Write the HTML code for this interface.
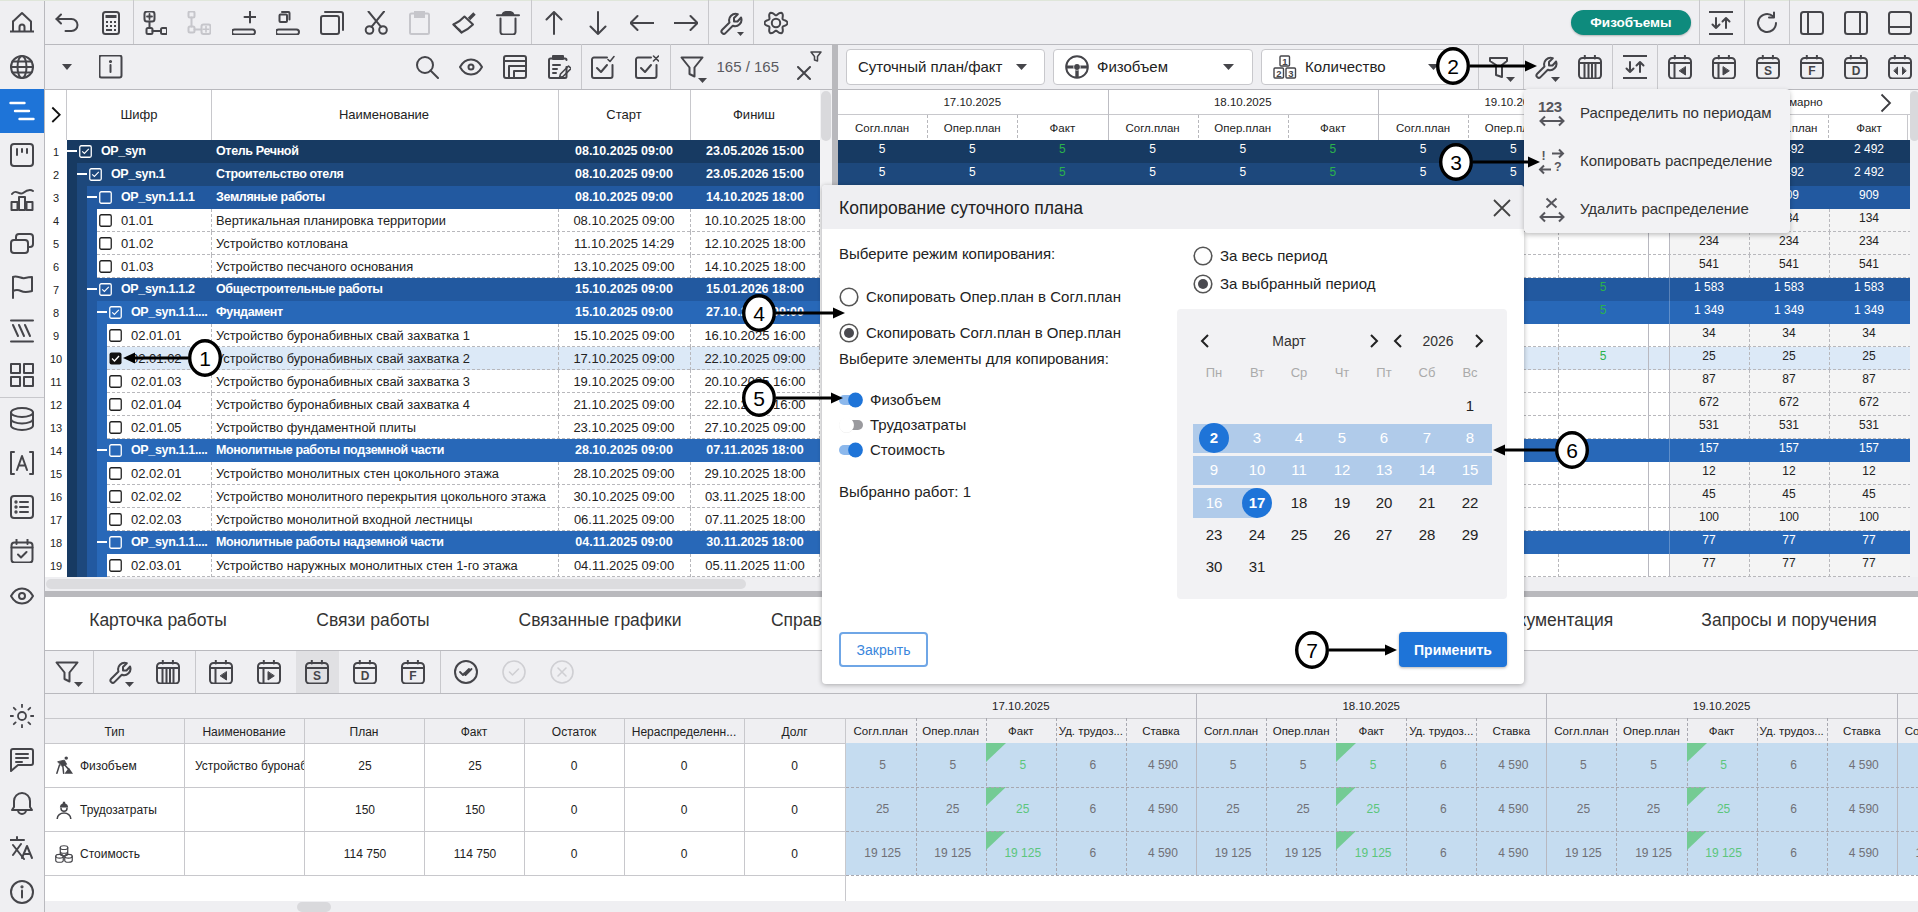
<!DOCTYPE html><html><head><meta charset="utf-8"><style>html,body{margin:0;padding:0;}body{width:1918px;height:912px;overflow:hidden;position:relative;background:#efeff2;font-family:"Liberation Sans", sans-serif;}</style></head><body>
<div style="position:absolute;left:0px;top:0px;width:44px;height:912px;background:#efeff2"></div>
<div style="position:absolute;left:44px;top:0px;width:1px;height:912px;background:#b9b9be"></div>
<div style="position:absolute;left:0px;top:89px;width:44px;height:44px;background:#1e74d8"></div>
<div style="position:absolute;left:0px;top:397px;width:44px;height:1px;background:#c8c8cc"></div>
<div style="position:absolute;left:45px;top:44px;width:1873px;height:1px;background:#b9b9be"></div>
<div style="position:absolute;left:0px;top:0px;width:1918px;height:1px;background:#dfe6da"></div>
<div style="position:absolute;left:45px;top:89px;width:787px;height:1px;background:#b9b9be"></div>
<div style="position:absolute;left:45px;top:90px;width:775px;height:50px;background:#fff"></div>
<div style="position:absolute;left:66px;top:90px;width:1px;height:487px;background:#c8c8cc"></div>
<div style="position:absolute;left:211px;top:90px;width:1px;height:50px;background:#c8c8cc"></div>
<div style="position:absolute;left:558px;top:90px;width:1px;height:50px;background:#c8c8cc"></div>
<div style="position:absolute;left:690px;top:90px;width:1px;height:50px;background:#c8c8cc"></div>
<svg style="position:absolute;left:50px;top:106px;" width="12" height="18" viewBox="0 0 12 18"><path d="M2.3 1.5L9.7 8.8L2.3 16" stroke="#111" stroke-width="1.8" fill="none"/></svg>
<div style="position:absolute;left:-11.0px;top:102px;width:300px;height:26px;line-height:26px;text-align:center;font-size:13px;color:#222;font-weight:normal;white-space:nowrap;">Шифр</div>
<div style="position:absolute;left:234.0px;top:102px;width:300px;height:26px;line-height:26px;text-align:center;font-size:13px;color:#222;font-weight:normal;white-space:nowrap;">Наименование</div>
<div style="position:absolute;left:474.0px;top:102px;width:300px;height:26px;line-height:26px;text-align:center;font-size:13px;color:#222;font-weight:normal;white-space:nowrap;">Старт</div>
<div style="position:absolute;left:604.0px;top:102px;width:300px;height:26px;line-height:26px;text-align:center;font-size:13px;color:#222;font-weight:normal;white-space:nowrap;">Финиш</div>
<div style="position:absolute;left:820px;top:90px;width:12px;height:487px;background:#f2f2f4"></div>
<div style="position:absolute;left:821px;top:91px;width:10px;height:50px;background:#d9d9dc;border-radius:5px"></div>
<div style="position:absolute;left:832px;top:44px;width:6px;height:547px;background:#b9b9bd"></div>
<div style="position:absolute;left:838px;top:89px;width:1080px;height:1px;background:#b9b9be"></div>
<div style="position:absolute;left:45px;top:140px;width:22px;height:437px;background:#fff"></div>
<div style="position:absolute;left:67px;top:140px;width:753px;height:437px;background:#fff"></div>
<div style="position:absolute;left:-94.0px;top:141px;width:300px;height:22px;line-height:22px;text-align:center;font-size:11px;color:#222;font-weight:normal;white-space:nowrap;">1</div>
<div style="position:absolute;left:67px;top:140px;width:753px;height:23px;background:#173a62"></div>
<div style="position:absolute;left:-94.0px;top:164px;width:300px;height:22px;line-height:22px;text-align:center;font-size:11px;color:#222;font-weight:normal;white-space:nowrap;">2</div>
<div style="position:absolute;left:67px;top:163px;width:10px;height:23px;background:#173a62"></div>
<div style="position:absolute;left:77px;top:163px;width:743px;height:23px;background:#1d487c"></div>
<div style="position:absolute;left:-94.0px;top:187px;width:300px;height:22px;line-height:22px;text-align:center;font-size:11px;color:#222;font-weight:normal;white-space:nowrap;">3</div>
<div style="position:absolute;left:67px;top:186px;width:10px;height:23px;background:#173a62"></div>
<div style="position:absolute;left:77px;top:186px;width:10px;height:23px;background:#1d487c"></div>
<div style="position:absolute;left:87px;top:186px;width:733px;height:23px;background:#2259a0"></div>
<div style="position:absolute;left:-94.0px;top:210px;width:300px;height:22px;line-height:22px;text-align:center;font-size:11px;color:#222;font-weight:normal;white-space:nowrap;">4</div>
<div style="position:absolute;left:67px;top:209px;width:10px;height:23px;background:#173a62"></div>
<div style="position:absolute;left:77px;top:209px;width:10px;height:23px;background:#1d487c"></div>
<div style="position:absolute;left:87px;top:209px;width:10px;height:23px;background:#2259a0"></div>
<div style="position:absolute;left:97px;top:209px;width:723px;height:23px;background:#fff"></div>
<div style="position:absolute;left:-94.0px;top:233px;width:300px;height:22px;line-height:22px;text-align:center;font-size:11px;color:#222;font-weight:normal;white-space:nowrap;">5</div>
<div style="position:absolute;left:67px;top:232px;width:10px;height:23px;background:#173a62"></div>
<div style="position:absolute;left:77px;top:232px;width:10px;height:23px;background:#1d487c"></div>
<div style="position:absolute;left:87px;top:232px;width:10px;height:23px;background:#2259a0"></div>
<div style="position:absolute;left:97px;top:232px;width:723px;height:23px;background:#fff"></div>
<div style="position:absolute;left:-94.0px;top:256px;width:300px;height:22px;line-height:22px;text-align:center;font-size:11px;color:#222;font-weight:normal;white-space:nowrap;">6</div>
<div style="position:absolute;left:67px;top:255px;width:10px;height:23px;background:#173a62"></div>
<div style="position:absolute;left:77px;top:255px;width:10px;height:23px;background:#1d487c"></div>
<div style="position:absolute;left:87px;top:255px;width:10px;height:23px;background:#2259a0"></div>
<div style="position:absolute;left:97px;top:255px;width:723px;height:23px;background:#fff"></div>
<div style="position:absolute;left:-94.0px;top:279px;width:300px;height:22px;line-height:22px;text-align:center;font-size:11px;color:#222;font-weight:normal;white-space:nowrap;">7</div>
<div style="position:absolute;left:67px;top:278px;width:10px;height:23px;background:#173a62"></div>
<div style="position:absolute;left:77px;top:278px;width:10px;height:23px;background:#1d487c"></div>
<div style="position:absolute;left:87px;top:278px;width:733px;height:23px;background:#2259a0"></div>
<div style="position:absolute;left:-94.0px;top:302px;width:300px;height:22px;line-height:22px;text-align:center;font-size:11px;color:#222;font-weight:normal;white-space:nowrap;">8</div>
<div style="position:absolute;left:67px;top:301px;width:10px;height:23px;background:#173a62"></div>
<div style="position:absolute;left:77px;top:301px;width:10px;height:23px;background:#1d487c"></div>
<div style="position:absolute;left:87px;top:301px;width:10px;height:23px;background:#2259a0"></div>
<div style="position:absolute;left:97px;top:301px;width:723px;height:23px;background:#2868b8"></div>
<div style="position:absolute;left:-94.0px;top:325px;width:300px;height:22px;line-height:22px;text-align:center;font-size:11px;color:#222;font-weight:normal;white-space:nowrap;">9</div>
<div style="position:absolute;left:67px;top:324px;width:10px;height:23px;background:#173a62"></div>
<div style="position:absolute;left:77px;top:324px;width:10px;height:23px;background:#1d487c"></div>
<div style="position:absolute;left:87px;top:324px;width:10px;height:23px;background:#2259a0"></div>
<div style="position:absolute;left:97px;top:324px;width:10px;height:23px;background:#2868b8"></div>
<div style="position:absolute;left:107px;top:324px;width:713px;height:23px;background:#fff"></div>
<div style="position:absolute;left:-94.0px;top:348px;width:300px;height:22px;line-height:22px;text-align:center;font-size:11px;color:#222;font-weight:normal;white-space:nowrap;">10</div>
<div style="position:absolute;left:67px;top:347px;width:10px;height:23px;background:#173a62"></div>
<div style="position:absolute;left:77px;top:347px;width:10px;height:23px;background:#1d487c"></div>
<div style="position:absolute;left:87px;top:347px;width:10px;height:23px;background:#2259a0"></div>
<div style="position:absolute;left:97px;top:347px;width:10px;height:23px;background:#2868b8"></div>
<div style="position:absolute;left:107px;top:347px;width:713px;height:23px;background:#dce9f7"></div>
<div style="position:absolute;left:-94.0px;top:371px;width:300px;height:22px;line-height:22px;text-align:center;font-size:11px;color:#222;font-weight:normal;white-space:nowrap;">11</div>
<div style="position:absolute;left:67px;top:370px;width:10px;height:23px;background:#173a62"></div>
<div style="position:absolute;left:77px;top:370px;width:10px;height:23px;background:#1d487c"></div>
<div style="position:absolute;left:87px;top:370px;width:10px;height:23px;background:#2259a0"></div>
<div style="position:absolute;left:97px;top:370px;width:10px;height:23px;background:#2868b8"></div>
<div style="position:absolute;left:107px;top:370px;width:713px;height:23px;background:#fff"></div>
<div style="position:absolute;left:-94.0px;top:394px;width:300px;height:22px;line-height:22px;text-align:center;font-size:11px;color:#222;font-weight:normal;white-space:nowrap;">12</div>
<div style="position:absolute;left:67px;top:393px;width:10px;height:23px;background:#173a62"></div>
<div style="position:absolute;left:77px;top:393px;width:10px;height:23px;background:#1d487c"></div>
<div style="position:absolute;left:87px;top:393px;width:10px;height:23px;background:#2259a0"></div>
<div style="position:absolute;left:97px;top:393px;width:10px;height:23px;background:#2868b8"></div>
<div style="position:absolute;left:107px;top:393px;width:713px;height:23px;background:#fff"></div>
<div style="position:absolute;left:-94.0px;top:417px;width:300px;height:22px;line-height:22px;text-align:center;font-size:11px;color:#222;font-weight:normal;white-space:nowrap;">13</div>
<div style="position:absolute;left:67px;top:416px;width:10px;height:23px;background:#173a62"></div>
<div style="position:absolute;left:77px;top:416px;width:10px;height:23px;background:#1d487c"></div>
<div style="position:absolute;left:87px;top:416px;width:10px;height:23px;background:#2259a0"></div>
<div style="position:absolute;left:97px;top:416px;width:10px;height:23px;background:#2868b8"></div>
<div style="position:absolute;left:107px;top:416px;width:713px;height:23px;background:#fff"></div>
<div style="position:absolute;left:-94.0px;top:440px;width:300px;height:22px;line-height:22px;text-align:center;font-size:11px;color:#222;font-weight:normal;white-space:nowrap;">14</div>
<div style="position:absolute;left:67px;top:439px;width:10px;height:23px;background:#173a62"></div>
<div style="position:absolute;left:77px;top:439px;width:10px;height:23px;background:#1d487c"></div>
<div style="position:absolute;left:87px;top:439px;width:10px;height:23px;background:#2259a0"></div>
<div style="position:absolute;left:97px;top:439px;width:723px;height:23px;background:#2868b8"></div>
<div style="position:absolute;left:-94.0px;top:463px;width:300px;height:22px;line-height:22px;text-align:center;font-size:11px;color:#222;font-weight:normal;white-space:nowrap;">15</div>
<div style="position:absolute;left:67px;top:462px;width:10px;height:23px;background:#173a62"></div>
<div style="position:absolute;left:77px;top:462px;width:10px;height:23px;background:#1d487c"></div>
<div style="position:absolute;left:87px;top:462px;width:10px;height:23px;background:#2259a0"></div>
<div style="position:absolute;left:97px;top:462px;width:10px;height:23px;background:#2868b8"></div>
<div style="position:absolute;left:107px;top:462px;width:713px;height:23px;background:#fff"></div>
<div style="position:absolute;left:-94.0px;top:486px;width:300px;height:22px;line-height:22px;text-align:center;font-size:11px;color:#222;font-weight:normal;white-space:nowrap;">16</div>
<div style="position:absolute;left:67px;top:485px;width:10px;height:23px;background:#173a62"></div>
<div style="position:absolute;left:77px;top:485px;width:10px;height:23px;background:#1d487c"></div>
<div style="position:absolute;left:87px;top:485px;width:10px;height:23px;background:#2259a0"></div>
<div style="position:absolute;left:97px;top:485px;width:10px;height:23px;background:#2868b8"></div>
<div style="position:absolute;left:107px;top:485px;width:713px;height:23px;background:#fff"></div>
<div style="position:absolute;left:-94.0px;top:509px;width:300px;height:22px;line-height:22px;text-align:center;font-size:11px;color:#222;font-weight:normal;white-space:nowrap;">17</div>
<div style="position:absolute;left:67px;top:508px;width:10px;height:23px;background:#173a62"></div>
<div style="position:absolute;left:77px;top:508px;width:10px;height:23px;background:#1d487c"></div>
<div style="position:absolute;left:87px;top:508px;width:10px;height:23px;background:#2259a0"></div>
<div style="position:absolute;left:97px;top:508px;width:10px;height:23px;background:#2868b8"></div>
<div style="position:absolute;left:107px;top:508px;width:713px;height:23px;background:#fff"></div>
<div style="position:absolute;left:-94.0px;top:532px;width:300px;height:22px;line-height:22px;text-align:center;font-size:11px;color:#222;font-weight:normal;white-space:nowrap;">18</div>
<div style="position:absolute;left:67px;top:531px;width:10px;height:23px;background:#173a62"></div>
<div style="position:absolute;left:77px;top:531px;width:10px;height:23px;background:#1d487c"></div>
<div style="position:absolute;left:87px;top:531px;width:10px;height:23px;background:#2259a0"></div>
<div style="position:absolute;left:97px;top:531px;width:723px;height:23px;background:#2868b8"></div>
<div style="position:absolute;left:-94.0px;top:555px;width:300px;height:22px;line-height:22px;text-align:center;font-size:11px;color:#222;font-weight:normal;white-space:nowrap;">19</div>
<div style="position:absolute;left:67px;top:554px;width:10px;height:23px;background:#173a62"></div>
<div style="position:absolute;left:77px;top:554px;width:10px;height:23px;background:#1d487c"></div>
<div style="position:absolute;left:87px;top:554px;width:10px;height:23px;background:#2259a0"></div>
<div style="position:absolute;left:97px;top:554px;width:10px;height:23px;background:#2868b8"></div>
<div style="position:absolute;left:107px;top:554px;width:713px;height:23px;background:#fff"></div>
<div style="position:absolute;left:67px;top:150px;width:10px;height:2px;background:#fff"></div>
<svg style="position:absolute;left:79px;top:145px;" width="13" height="13" viewBox="0 0 13 13"><rect x="0.75" y="0.75" width="11.5" height="11.5" rx="1.5" fill="none" stroke="#fff" stroke-width="1.3"/><path d="M3.2 6.3l2.2 2.2 4.4-4.6" stroke="#fff" stroke-width="1.1" fill="none"/></svg>
<div style="position:absolute;left:101px;top:139.0px;height:25.0px;line-height:25.0px;font-size:12.5px;color:#fff;font-weight:bold;white-space:nowrap;letter-spacing:-0.35px">OP_syn</div>
<div style="position:absolute;left:216px;top:139.0px;height:25.0px;line-height:25.0px;font-size:12.5px;color:#fff;font-weight:bold;white-space:nowrap;letter-spacing:-0.35px">Отель Речной</div>
<div style="position:absolute;left:474.0px;top:139.0px;width:300px;height:25.0px;line-height:25.0px;text-align:center;font-size:12.5px;color:#fff;font-weight:bold;white-space:nowrap;letter-spacing:0px">08.10.2025 09:00</div>
<div style="position:absolute;left:605.0px;top:139.0px;width:300px;height:25.0px;line-height:25.0px;text-align:center;font-size:12.5px;color:#fff;font-weight:bold;white-space:nowrap;letter-spacing:0px">23.05.2026 15:00</div>
<div style="position:absolute;left:77px;top:173px;width:10px;height:2px;background:#fff"></div>
<svg style="position:absolute;left:89px;top:168px;" width="13" height="13" viewBox="0 0 13 13"><rect x="0.75" y="0.75" width="11.5" height="11.5" rx="1.5" fill="none" stroke="#fff" stroke-width="1.3"/><path d="M3.2 6.3l2.2 2.2 4.4-4.6" stroke="#fff" stroke-width="1.1" fill="none"/></svg>
<div style="position:absolute;left:111px;top:162.0px;height:25.0px;line-height:25.0px;font-size:12.5px;color:#fff;font-weight:bold;white-space:nowrap;letter-spacing:-0.35px">OP_syn.1</div>
<div style="position:absolute;left:216px;top:162.0px;height:25.0px;line-height:25.0px;font-size:12.5px;color:#fff;font-weight:bold;white-space:nowrap;letter-spacing:-0.35px">Строительство отеля</div>
<div style="position:absolute;left:474.0px;top:162.0px;width:300px;height:25.0px;line-height:25.0px;text-align:center;font-size:12.5px;color:#fff;font-weight:bold;white-space:nowrap;letter-spacing:0px">08.10.2025 09:00</div>
<div style="position:absolute;left:605.0px;top:162.0px;width:300px;height:25.0px;line-height:25.0px;text-align:center;font-size:12.5px;color:#fff;font-weight:bold;white-space:nowrap;letter-spacing:0px">23.05.2026 15:00</div>
<div style="position:absolute;left:87px;top:196px;width:10px;height:2px;background:#fff"></div>
<svg style="position:absolute;left:99px;top:191px;" width="13" height="13" viewBox="0 0 13 13"><rect x="0.75" y="0.75" width="11.5" height="11.5" rx="1.5" fill="none" stroke="#fff" stroke-width="1.3"/></svg>
<div style="position:absolute;left:121px;top:185.0px;height:25.0px;line-height:25.0px;font-size:12.5px;color:#fff;font-weight:bold;white-space:nowrap;letter-spacing:-0.35px">OP_syn.1.1.1</div>
<div style="position:absolute;left:216px;top:185.0px;height:25.0px;line-height:25.0px;font-size:12.5px;color:#fff;font-weight:bold;white-space:nowrap;letter-spacing:-0.35px">Земляные работы</div>
<div style="position:absolute;left:474.0px;top:185.0px;width:300px;height:25.0px;line-height:25.0px;text-align:center;font-size:12.5px;color:#fff;font-weight:bold;white-space:nowrap;letter-spacing:0px">08.10.2025 09:00</div>
<div style="position:absolute;left:605.0px;top:185.0px;width:300px;height:25.0px;line-height:25.0px;text-align:center;font-size:12.5px;color:#fff;font-weight:bold;white-space:nowrap;letter-spacing:0px">14.10.2025 18:00</div>
<svg style="position:absolute;left:99px;top:214px;" width="13" height="13" viewBox="0 0 13 13"><rect x="0.75" y="0.75" width="11.5" height="11.5" rx="1.5" fill="none" stroke="#222" stroke-width="1.3"/></svg>
<div style="position:absolute;left:121px;top:207.5px;height:26px;line-height:26px;font-size:13px;color:#222;font-weight:normal;white-space:nowrap;">01.01</div>
<div style="position:absolute;left:216px;top:207.65px;height:25.7px;line-height:25.7px;font-size:12.85px;color:#222;font-weight:normal;white-space:nowrap;">Вертикальная планировка территории</div>
<div style="position:absolute;left:474.0px;top:207.5px;width:300px;height:26px;line-height:26px;text-align:center;font-size:13px;color:#222;font-weight:normal;white-space:nowrap;">08.10.2025 09:00</div>
<div style="position:absolute;left:605.0px;top:207.5px;width:300px;height:26px;line-height:26px;text-align:center;font-size:13px;color:#222;font-weight:normal;white-space:nowrap;">10.10.2025 18:00</div>
<div style="position:absolute;left:97px;top:231px;width:723px;height:1px;background:repeating-linear-gradient(90deg,#b8b8bc 0 3px,transparent 3px 5px)"></div>
<div style="position:absolute;left:211px;top:209px;width:1px;height:23px;background:repeating-linear-gradient(180deg,#b8b8bc 0 3px,transparent 3px 5px)"></div>
<div style="position:absolute;left:558px;top:209px;width:1px;height:23px;background:repeating-linear-gradient(180deg,#b8b8bc 0 3px,transparent 3px 5px)"></div>
<div style="position:absolute;left:690px;top:209px;width:1px;height:23px;background:repeating-linear-gradient(180deg,#b8b8bc 0 3px,transparent 3px 5px)"></div>
<div style="position:absolute;left:819px;top:209px;width:1px;height:23px;background:repeating-linear-gradient(180deg,#b8b8bc 0 3px,transparent 3px 5px)"></div>
<svg style="position:absolute;left:99px;top:237px;" width="13" height="13" viewBox="0 0 13 13"><rect x="0.75" y="0.75" width="11.5" height="11.5" rx="1.5" fill="none" stroke="#222" stroke-width="1.3"/></svg>
<div style="position:absolute;left:121px;top:230.5px;height:26px;line-height:26px;font-size:13px;color:#222;font-weight:normal;white-space:nowrap;">01.02</div>
<div style="position:absolute;left:216px;top:230.65px;height:25.7px;line-height:25.7px;font-size:12.85px;color:#222;font-weight:normal;white-space:nowrap;">Устройство котлована</div>
<div style="position:absolute;left:474.0px;top:230.5px;width:300px;height:26px;line-height:26px;text-align:center;font-size:13px;color:#222;font-weight:normal;white-space:nowrap;">11.10.2025 14:29</div>
<div style="position:absolute;left:605.0px;top:230.5px;width:300px;height:26px;line-height:26px;text-align:center;font-size:13px;color:#222;font-weight:normal;white-space:nowrap;">12.10.2025 18:00</div>
<div style="position:absolute;left:97px;top:254px;width:723px;height:1px;background:repeating-linear-gradient(90deg,#b8b8bc 0 3px,transparent 3px 5px)"></div>
<div style="position:absolute;left:211px;top:232px;width:1px;height:23px;background:repeating-linear-gradient(180deg,#b8b8bc 0 3px,transparent 3px 5px)"></div>
<div style="position:absolute;left:558px;top:232px;width:1px;height:23px;background:repeating-linear-gradient(180deg,#b8b8bc 0 3px,transparent 3px 5px)"></div>
<div style="position:absolute;left:690px;top:232px;width:1px;height:23px;background:repeating-linear-gradient(180deg,#b8b8bc 0 3px,transparent 3px 5px)"></div>
<div style="position:absolute;left:819px;top:232px;width:1px;height:23px;background:repeating-linear-gradient(180deg,#b8b8bc 0 3px,transparent 3px 5px)"></div>
<svg style="position:absolute;left:99px;top:260px;" width="13" height="13" viewBox="0 0 13 13"><rect x="0.75" y="0.75" width="11.5" height="11.5" rx="1.5" fill="none" stroke="#222" stroke-width="1.3"/></svg>
<div style="position:absolute;left:121px;top:253.5px;height:26px;line-height:26px;font-size:13px;color:#222;font-weight:normal;white-space:nowrap;">01.03</div>
<div style="position:absolute;left:216px;top:253.65px;height:25.7px;line-height:25.7px;font-size:12.85px;color:#222;font-weight:normal;white-space:nowrap;">Устройство песчаного основания</div>
<div style="position:absolute;left:474.0px;top:253.5px;width:300px;height:26px;line-height:26px;text-align:center;font-size:13px;color:#222;font-weight:normal;white-space:nowrap;">13.10.2025 09:00</div>
<div style="position:absolute;left:605.0px;top:253.5px;width:300px;height:26px;line-height:26px;text-align:center;font-size:13px;color:#222;font-weight:normal;white-space:nowrap;">14.10.2025 18:00</div>
<div style="position:absolute;left:97px;top:277px;width:723px;height:1px;background:repeating-linear-gradient(90deg,#b8b8bc 0 3px,transparent 3px 5px)"></div>
<div style="position:absolute;left:211px;top:255px;width:1px;height:23px;background:repeating-linear-gradient(180deg,#b8b8bc 0 3px,transparent 3px 5px)"></div>
<div style="position:absolute;left:558px;top:255px;width:1px;height:23px;background:repeating-linear-gradient(180deg,#b8b8bc 0 3px,transparent 3px 5px)"></div>
<div style="position:absolute;left:690px;top:255px;width:1px;height:23px;background:repeating-linear-gradient(180deg,#b8b8bc 0 3px,transparent 3px 5px)"></div>
<div style="position:absolute;left:819px;top:255px;width:1px;height:23px;background:repeating-linear-gradient(180deg,#b8b8bc 0 3px,transparent 3px 5px)"></div>
<div style="position:absolute;left:87px;top:288px;width:10px;height:2px;background:#fff"></div>
<svg style="position:absolute;left:99px;top:283px;" width="13" height="13" viewBox="0 0 13 13"><rect x="0.75" y="0.75" width="11.5" height="11.5" rx="1.5" fill="none" stroke="#fff" stroke-width="1.3"/><path d="M3.2 6.3l2.2 2.2 4.4-4.6" stroke="#fff" stroke-width="1.1" fill="none"/></svg>
<div style="position:absolute;left:121px;top:277.0px;height:25.0px;line-height:25.0px;font-size:12.5px;color:#fff;font-weight:bold;white-space:nowrap;letter-spacing:-0.35px">OP_syn.1.1.2</div>
<div style="position:absolute;left:216px;top:277.0px;height:25.0px;line-height:25.0px;font-size:12.5px;color:#fff;font-weight:bold;white-space:nowrap;letter-spacing:-0.35px">Общестроительные работы</div>
<div style="position:absolute;left:474.0px;top:277.0px;width:300px;height:25.0px;line-height:25.0px;text-align:center;font-size:12.5px;color:#fff;font-weight:bold;white-space:nowrap;letter-spacing:0px">15.10.2025 09:00</div>
<div style="position:absolute;left:605.0px;top:277.0px;width:300px;height:25.0px;line-height:25.0px;text-align:center;font-size:12.5px;color:#fff;font-weight:bold;white-space:nowrap;letter-spacing:0px">15.01.2026 18:00</div>
<div style="position:absolute;left:97px;top:311px;width:10px;height:2px;background:#fff"></div>
<svg style="position:absolute;left:109px;top:306px;" width="13" height="13" viewBox="0 0 13 13"><rect x="0.75" y="0.75" width="11.5" height="11.5" rx="1.5" fill="none" stroke="#fff" stroke-width="1.3"/><path d="M3.2 6.3l2.2 2.2 4.4-4.6" stroke="#fff" stroke-width="1.1" fill="none"/></svg>
<div style="position:absolute;left:131px;top:300.0px;height:25.0px;line-height:25.0px;font-size:12.5px;color:#fff;font-weight:bold;white-space:nowrap;letter-spacing:-0.35px">OP_syn.1.1....</div>
<div style="position:absolute;left:216px;top:300.0px;height:25.0px;line-height:25.0px;font-size:12.5px;color:#fff;font-weight:bold;white-space:nowrap;letter-spacing:-0.35px">Фундамент</div>
<div style="position:absolute;left:474.0px;top:300.0px;width:300px;height:25.0px;line-height:25.0px;text-align:center;font-size:12.5px;color:#fff;font-weight:bold;white-space:nowrap;letter-spacing:0px">15.10.2025 09:00</div>
<div style="position:absolute;left:605.0px;top:300.0px;width:300px;height:25.0px;line-height:25.0px;text-align:center;font-size:12.5px;color:#fff;font-weight:bold;white-space:nowrap;letter-spacing:0px">27.10.2025 09:00</div>
<svg style="position:absolute;left:109px;top:329px;" width="13" height="13" viewBox="0 0 13 13"><rect x="0.75" y="0.75" width="11.5" height="11.5" rx="1.5" fill="none" stroke="#222" stroke-width="1.3"/></svg>
<div style="position:absolute;left:131px;top:322.5px;height:26px;line-height:26px;font-size:13px;color:#222;font-weight:normal;white-space:nowrap;">02.01.01</div>
<div style="position:absolute;left:216px;top:322.65px;height:25.7px;line-height:25.7px;font-size:12.85px;color:#222;font-weight:normal;white-space:nowrap;">Устройство буронабивных свай захватка 1</div>
<div style="position:absolute;left:474.0px;top:322.5px;width:300px;height:26px;line-height:26px;text-align:center;font-size:13px;color:#222;font-weight:normal;white-space:nowrap;">15.10.2025 09:00</div>
<div style="position:absolute;left:605.0px;top:322.5px;width:300px;height:26px;line-height:26px;text-align:center;font-size:13px;color:#222;font-weight:normal;white-space:nowrap;">16.10.2025 16:00</div>
<div style="position:absolute;left:107px;top:346px;width:713px;height:1px;background:repeating-linear-gradient(90deg,#b8b8bc 0 3px,transparent 3px 5px)"></div>
<div style="position:absolute;left:211px;top:324px;width:1px;height:23px;background:repeating-linear-gradient(180deg,#b8b8bc 0 3px,transparent 3px 5px)"></div>
<div style="position:absolute;left:558px;top:324px;width:1px;height:23px;background:repeating-linear-gradient(180deg,#b8b8bc 0 3px,transparent 3px 5px)"></div>
<div style="position:absolute;left:690px;top:324px;width:1px;height:23px;background:repeating-linear-gradient(180deg,#b8b8bc 0 3px,transparent 3px 5px)"></div>
<div style="position:absolute;left:819px;top:324px;width:1px;height:23px;background:repeating-linear-gradient(180deg,#b8b8bc 0 3px,transparent 3px 5px)"></div>
<svg style="position:absolute;left:109px;top:352px;" width="13" height="13" viewBox="0 0 13 13"><rect x="0.5" y="0.5" width="12" height="12" rx="2" fill="#111"/><path d="M3 6.5l2.5 2.5 4.5-5" stroke="#fff" stroke-width="1.3" fill="none"/></svg>
<div style="position:absolute;left:131px;top:345.5px;height:26px;line-height:26px;font-size:13px;color:#222;font-weight:normal;white-space:nowrap;">02.01.02</div>
<div style="position:absolute;left:216px;top:345.65px;height:25.7px;line-height:25.7px;font-size:12.85px;color:#222;font-weight:normal;white-space:nowrap;">Устройство буронабивных свай захватка 2</div>
<div style="position:absolute;left:474.0px;top:345.5px;width:300px;height:26px;line-height:26px;text-align:center;font-size:13px;color:#222;font-weight:normal;white-space:nowrap;">17.10.2025 09:00</div>
<div style="position:absolute;left:605.0px;top:345.5px;width:300px;height:26px;line-height:26px;text-align:center;font-size:13px;color:#222;font-weight:normal;white-space:nowrap;">22.10.2025 09:00</div>
<div style="position:absolute;left:107px;top:369px;width:713px;height:1px;background:repeating-linear-gradient(90deg,#b8b8bc 0 3px,transparent 3px 5px)"></div>
<div style="position:absolute;left:211px;top:347px;width:1px;height:23px;background:repeating-linear-gradient(180deg,#b8b8bc 0 3px,transparent 3px 5px)"></div>
<div style="position:absolute;left:558px;top:347px;width:1px;height:23px;background:repeating-linear-gradient(180deg,#b8b8bc 0 3px,transparent 3px 5px)"></div>
<div style="position:absolute;left:690px;top:347px;width:1px;height:23px;background:repeating-linear-gradient(180deg,#b8b8bc 0 3px,transparent 3px 5px)"></div>
<div style="position:absolute;left:819px;top:347px;width:1px;height:23px;background:repeating-linear-gradient(180deg,#b8b8bc 0 3px,transparent 3px 5px)"></div>
<svg style="position:absolute;left:109px;top:375px;" width="13" height="13" viewBox="0 0 13 13"><rect x="0.75" y="0.75" width="11.5" height="11.5" rx="1.5" fill="none" stroke="#222" stroke-width="1.3"/></svg>
<div style="position:absolute;left:131px;top:368.5px;height:26px;line-height:26px;font-size:13px;color:#222;font-weight:normal;white-space:nowrap;">02.01.03</div>
<div style="position:absolute;left:216px;top:368.65px;height:25.7px;line-height:25.7px;font-size:12.85px;color:#222;font-weight:normal;white-space:nowrap;">Устройство буронабивных свай захватка 3</div>
<div style="position:absolute;left:474.0px;top:368.5px;width:300px;height:26px;line-height:26px;text-align:center;font-size:13px;color:#222;font-weight:normal;white-space:nowrap;">19.10.2025 09:00</div>
<div style="position:absolute;left:605.0px;top:368.5px;width:300px;height:26px;line-height:26px;text-align:center;font-size:13px;color:#222;font-weight:normal;white-space:nowrap;">20.10.2025 16:00</div>
<div style="position:absolute;left:107px;top:392px;width:713px;height:1px;background:repeating-linear-gradient(90deg,#b8b8bc 0 3px,transparent 3px 5px)"></div>
<div style="position:absolute;left:211px;top:370px;width:1px;height:23px;background:repeating-linear-gradient(180deg,#b8b8bc 0 3px,transparent 3px 5px)"></div>
<div style="position:absolute;left:558px;top:370px;width:1px;height:23px;background:repeating-linear-gradient(180deg,#b8b8bc 0 3px,transparent 3px 5px)"></div>
<div style="position:absolute;left:690px;top:370px;width:1px;height:23px;background:repeating-linear-gradient(180deg,#b8b8bc 0 3px,transparent 3px 5px)"></div>
<div style="position:absolute;left:819px;top:370px;width:1px;height:23px;background:repeating-linear-gradient(180deg,#b8b8bc 0 3px,transparent 3px 5px)"></div>
<svg style="position:absolute;left:109px;top:398px;" width="13" height="13" viewBox="0 0 13 13"><rect x="0.75" y="0.75" width="11.5" height="11.5" rx="1.5" fill="none" stroke="#222" stroke-width="1.3"/></svg>
<div style="position:absolute;left:131px;top:391.5px;height:26px;line-height:26px;font-size:13px;color:#222;font-weight:normal;white-space:nowrap;">02.01.04</div>
<div style="position:absolute;left:216px;top:391.65px;height:25.7px;line-height:25.7px;font-size:12.85px;color:#222;font-weight:normal;white-space:nowrap;">Устройство буронабивных свай захватка 4</div>
<div style="position:absolute;left:474.0px;top:391.5px;width:300px;height:26px;line-height:26px;text-align:center;font-size:13px;color:#222;font-weight:normal;white-space:nowrap;">21.10.2025 09:00</div>
<div style="position:absolute;left:605.0px;top:391.5px;width:300px;height:26px;line-height:26px;text-align:center;font-size:13px;color:#222;font-weight:normal;white-space:nowrap;">22.10.2025 16:00</div>
<div style="position:absolute;left:107px;top:415px;width:713px;height:1px;background:repeating-linear-gradient(90deg,#b8b8bc 0 3px,transparent 3px 5px)"></div>
<div style="position:absolute;left:211px;top:393px;width:1px;height:23px;background:repeating-linear-gradient(180deg,#b8b8bc 0 3px,transparent 3px 5px)"></div>
<div style="position:absolute;left:558px;top:393px;width:1px;height:23px;background:repeating-linear-gradient(180deg,#b8b8bc 0 3px,transparent 3px 5px)"></div>
<div style="position:absolute;left:690px;top:393px;width:1px;height:23px;background:repeating-linear-gradient(180deg,#b8b8bc 0 3px,transparent 3px 5px)"></div>
<div style="position:absolute;left:819px;top:393px;width:1px;height:23px;background:repeating-linear-gradient(180deg,#b8b8bc 0 3px,transparent 3px 5px)"></div>
<svg style="position:absolute;left:109px;top:421px;" width="13" height="13" viewBox="0 0 13 13"><rect x="0.75" y="0.75" width="11.5" height="11.5" rx="1.5" fill="none" stroke="#222" stroke-width="1.3"/></svg>
<div style="position:absolute;left:131px;top:414.5px;height:26px;line-height:26px;font-size:13px;color:#222;font-weight:normal;white-space:nowrap;">02.01.05</div>
<div style="position:absolute;left:216px;top:414.65px;height:25.7px;line-height:25.7px;font-size:12.85px;color:#222;font-weight:normal;white-space:nowrap;">Устройство фундаментной плиты</div>
<div style="position:absolute;left:474.0px;top:414.5px;width:300px;height:26px;line-height:26px;text-align:center;font-size:13px;color:#222;font-weight:normal;white-space:nowrap;">23.10.2025 09:00</div>
<div style="position:absolute;left:605.0px;top:414.5px;width:300px;height:26px;line-height:26px;text-align:center;font-size:13px;color:#222;font-weight:normal;white-space:nowrap;">27.10.2025 09:00</div>
<div style="position:absolute;left:107px;top:438px;width:713px;height:1px;background:repeating-linear-gradient(90deg,#b8b8bc 0 3px,transparent 3px 5px)"></div>
<div style="position:absolute;left:211px;top:416px;width:1px;height:23px;background:repeating-linear-gradient(180deg,#b8b8bc 0 3px,transparent 3px 5px)"></div>
<div style="position:absolute;left:558px;top:416px;width:1px;height:23px;background:repeating-linear-gradient(180deg,#b8b8bc 0 3px,transparent 3px 5px)"></div>
<div style="position:absolute;left:690px;top:416px;width:1px;height:23px;background:repeating-linear-gradient(180deg,#b8b8bc 0 3px,transparent 3px 5px)"></div>
<div style="position:absolute;left:819px;top:416px;width:1px;height:23px;background:repeating-linear-gradient(180deg,#b8b8bc 0 3px,transparent 3px 5px)"></div>
<div style="position:absolute;left:97px;top:449px;width:10px;height:2px;background:#fff"></div>
<svg style="position:absolute;left:109px;top:444px;" width="13" height="13" viewBox="0 0 13 13"><rect x="0.75" y="0.75" width="11.5" height="11.5" rx="1.5" fill="none" stroke="#fff" stroke-width="1.3"/></svg>
<div style="position:absolute;left:131px;top:438.0px;height:25.0px;line-height:25.0px;font-size:12.5px;color:#fff;font-weight:bold;white-space:nowrap;letter-spacing:-0.35px">OP_syn.1.1....</div>
<div style="position:absolute;left:216px;top:438.0px;height:25.0px;line-height:25.0px;font-size:12.5px;color:#fff;font-weight:bold;white-space:nowrap;letter-spacing:-0.35px">Монолитные работы подземной части</div>
<div style="position:absolute;left:474.0px;top:438.0px;width:300px;height:25.0px;line-height:25.0px;text-align:center;font-size:12.5px;color:#fff;font-weight:bold;white-space:nowrap;letter-spacing:0px">28.10.2025 09:00</div>
<div style="position:absolute;left:605.0px;top:438.0px;width:300px;height:25.0px;line-height:25.0px;text-align:center;font-size:12.5px;color:#fff;font-weight:bold;white-space:nowrap;letter-spacing:0px">07.11.2025 18:00</div>
<svg style="position:absolute;left:109px;top:467px;" width="13" height="13" viewBox="0 0 13 13"><rect x="0.75" y="0.75" width="11.5" height="11.5" rx="1.5" fill="none" stroke="#222" stroke-width="1.3"/></svg>
<div style="position:absolute;left:131px;top:460.5px;height:26px;line-height:26px;font-size:13px;color:#222;font-weight:normal;white-space:nowrap;">02.02.01</div>
<div style="position:absolute;left:216px;top:460.65px;height:25.7px;line-height:25.7px;font-size:12.85px;color:#222;font-weight:normal;white-space:nowrap;">Устройство монолитных стен цокольного этажа</div>
<div style="position:absolute;left:474.0px;top:460.5px;width:300px;height:26px;line-height:26px;text-align:center;font-size:13px;color:#222;font-weight:normal;white-space:nowrap;">28.10.2025 09:00</div>
<div style="position:absolute;left:605.0px;top:460.5px;width:300px;height:26px;line-height:26px;text-align:center;font-size:13px;color:#222;font-weight:normal;white-space:nowrap;">29.10.2025 18:00</div>
<div style="position:absolute;left:107px;top:484px;width:713px;height:1px;background:repeating-linear-gradient(90deg,#b8b8bc 0 3px,transparent 3px 5px)"></div>
<div style="position:absolute;left:211px;top:462px;width:1px;height:23px;background:repeating-linear-gradient(180deg,#b8b8bc 0 3px,transparent 3px 5px)"></div>
<div style="position:absolute;left:558px;top:462px;width:1px;height:23px;background:repeating-linear-gradient(180deg,#b8b8bc 0 3px,transparent 3px 5px)"></div>
<div style="position:absolute;left:690px;top:462px;width:1px;height:23px;background:repeating-linear-gradient(180deg,#b8b8bc 0 3px,transparent 3px 5px)"></div>
<div style="position:absolute;left:819px;top:462px;width:1px;height:23px;background:repeating-linear-gradient(180deg,#b8b8bc 0 3px,transparent 3px 5px)"></div>
<svg style="position:absolute;left:109px;top:490px;" width="13" height="13" viewBox="0 0 13 13"><rect x="0.75" y="0.75" width="11.5" height="11.5" rx="1.5" fill="none" stroke="#222" stroke-width="1.3"/></svg>
<div style="position:absolute;left:131px;top:483.5px;height:26px;line-height:26px;font-size:13px;color:#222;font-weight:normal;white-space:nowrap;">02.02.02</div>
<div style="position:absolute;left:216px;top:483.65px;height:25.7px;line-height:25.7px;font-size:12.85px;color:#222;font-weight:normal;white-space:nowrap;">Устройство монолитного перекрытия цокольного этажа</div>
<div style="position:absolute;left:474.0px;top:483.5px;width:300px;height:26px;line-height:26px;text-align:center;font-size:13px;color:#222;font-weight:normal;white-space:nowrap;">30.10.2025 09:00</div>
<div style="position:absolute;left:605.0px;top:483.5px;width:300px;height:26px;line-height:26px;text-align:center;font-size:13px;color:#222;font-weight:normal;white-space:nowrap;">03.11.2025 18:00</div>
<div style="position:absolute;left:107px;top:507px;width:713px;height:1px;background:repeating-linear-gradient(90deg,#b8b8bc 0 3px,transparent 3px 5px)"></div>
<div style="position:absolute;left:211px;top:485px;width:1px;height:23px;background:repeating-linear-gradient(180deg,#b8b8bc 0 3px,transparent 3px 5px)"></div>
<div style="position:absolute;left:558px;top:485px;width:1px;height:23px;background:repeating-linear-gradient(180deg,#b8b8bc 0 3px,transparent 3px 5px)"></div>
<div style="position:absolute;left:690px;top:485px;width:1px;height:23px;background:repeating-linear-gradient(180deg,#b8b8bc 0 3px,transparent 3px 5px)"></div>
<div style="position:absolute;left:819px;top:485px;width:1px;height:23px;background:repeating-linear-gradient(180deg,#b8b8bc 0 3px,transparent 3px 5px)"></div>
<svg style="position:absolute;left:109px;top:513px;" width="13" height="13" viewBox="0 0 13 13"><rect x="0.75" y="0.75" width="11.5" height="11.5" rx="1.5" fill="none" stroke="#222" stroke-width="1.3"/></svg>
<div style="position:absolute;left:131px;top:506.5px;height:26px;line-height:26px;font-size:13px;color:#222;font-weight:normal;white-space:nowrap;">02.02.03</div>
<div style="position:absolute;left:216px;top:506.65px;height:25.7px;line-height:25.7px;font-size:12.85px;color:#222;font-weight:normal;white-space:nowrap;">Устройство монолитной входной лестницы</div>
<div style="position:absolute;left:474.0px;top:506.5px;width:300px;height:26px;line-height:26px;text-align:center;font-size:13px;color:#222;font-weight:normal;white-space:nowrap;">06.11.2025 09:00</div>
<div style="position:absolute;left:605.0px;top:506.5px;width:300px;height:26px;line-height:26px;text-align:center;font-size:13px;color:#222;font-weight:normal;white-space:nowrap;">07.11.2025 18:00</div>
<div style="position:absolute;left:107px;top:530px;width:713px;height:1px;background:repeating-linear-gradient(90deg,#b8b8bc 0 3px,transparent 3px 5px)"></div>
<div style="position:absolute;left:211px;top:508px;width:1px;height:23px;background:repeating-linear-gradient(180deg,#b8b8bc 0 3px,transparent 3px 5px)"></div>
<div style="position:absolute;left:558px;top:508px;width:1px;height:23px;background:repeating-linear-gradient(180deg,#b8b8bc 0 3px,transparent 3px 5px)"></div>
<div style="position:absolute;left:690px;top:508px;width:1px;height:23px;background:repeating-linear-gradient(180deg,#b8b8bc 0 3px,transparent 3px 5px)"></div>
<div style="position:absolute;left:819px;top:508px;width:1px;height:23px;background:repeating-linear-gradient(180deg,#b8b8bc 0 3px,transparent 3px 5px)"></div>
<div style="position:absolute;left:97px;top:541px;width:10px;height:2px;background:#fff"></div>
<svg style="position:absolute;left:109px;top:536px;" width="13" height="13" viewBox="0 0 13 13"><rect x="0.75" y="0.75" width="11.5" height="11.5" rx="1.5" fill="none" stroke="#fff" stroke-width="1.3"/></svg>
<div style="position:absolute;left:131px;top:530.0px;height:25.0px;line-height:25.0px;font-size:12.5px;color:#fff;font-weight:bold;white-space:nowrap;letter-spacing:-0.35px">OP_syn.1.1....</div>
<div style="position:absolute;left:216px;top:530.0px;height:25.0px;line-height:25.0px;font-size:12.5px;color:#fff;font-weight:bold;white-space:nowrap;letter-spacing:-0.35px">Монолитные работы надземной части</div>
<div style="position:absolute;left:474.0px;top:530.0px;width:300px;height:25.0px;line-height:25.0px;text-align:center;font-size:12.5px;color:#fff;font-weight:bold;white-space:nowrap;letter-spacing:0px">04.11.2025 09:00</div>
<div style="position:absolute;left:605.0px;top:530.0px;width:300px;height:25.0px;line-height:25.0px;text-align:center;font-size:12.5px;color:#fff;font-weight:bold;white-space:nowrap;letter-spacing:0px">30.11.2025 18:00</div>
<svg style="position:absolute;left:109px;top:559px;" width="13" height="13" viewBox="0 0 13 13"><rect x="0.75" y="0.75" width="11.5" height="11.5" rx="1.5" fill="none" stroke="#222" stroke-width="1.3"/></svg>
<div style="position:absolute;left:131px;top:552.5px;height:26px;line-height:26px;font-size:13px;color:#222;font-weight:normal;white-space:nowrap;">02.03.01</div>
<div style="position:absolute;left:216px;top:552.65px;height:25.7px;line-height:25.7px;font-size:12.85px;color:#222;font-weight:normal;white-space:nowrap;">Устройство наружных монолитных стен 1-го этажа</div>
<div style="position:absolute;left:474.0px;top:552.5px;width:300px;height:26px;line-height:26px;text-align:center;font-size:13px;color:#222;font-weight:normal;white-space:nowrap;">04.11.2025 09:00</div>
<div style="position:absolute;left:605.0px;top:552.5px;width:300px;height:26px;line-height:26px;text-align:center;font-size:13px;color:#222;font-weight:normal;white-space:nowrap;">05.11.2025 11:00</div>
<div style="position:absolute;left:107px;top:576px;width:713px;height:1px;background:repeating-linear-gradient(90deg,#b8b8bc 0 3px,transparent 3px 5px)"></div>
<div style="position:absolute;left:211px;top:554px;width:1px;height:23px;background:repeating-linear-gradient(180deg,#b8b8bc 0 3px,transparent 3px 5px)"></div>
<div style="position:absolute;left:558px;top:554px;width:1px;height:23px;background:repeating-linear-gradient(180deg,#b8b8bc 0 3px,transparent 3px 5px)"></div>
<div style="position:absolute;left:690px;top:554px;width:1px;height:23px;background:repeating-linear-gradient(180deg,#b8b8bc 0 3px,transparent 3px 5px)"></div>
<div style="position:absolute;left:819px;top:554px;width:1px;height:23px;background:repeating-linear-gradient(180deg,#b8b8bc 0 3px,transparent 3px 5px)"></div>
<div style="position:absolute;left:45px;top:577px;width:775px;height:14px;background:#efeff2"></div>
<div style="position:absolute;left:46px;top:579px;width:700px;height:10px;background:#dcdcdf;border-radius:5px"></div>
<div style="position:absolute;left:45px;top:591px;width:1873px;height:6px;background:#b9b9bd"></div>
<div style="position:absolute;left:838px;top:90px;width:1080px;height:50px;background:#fff"></div>
<div style="position:absolute;left:838px;top:114px;width:1072px;height:1px;background:#c8c8cc"></div>
<div style="position:absolute;left:1108px;top:90px;width:1px;height:50px;background:#bdbdc3"></div>
<div style="position:absolute;left:822.25px;top:91.0px;width:300px;height:23.0px;line-height:23.0px;text-align:center;font-size:11.5px;color:#222;font-weight:normal;white-space:nowrap;">17.10.2025</div>
<div style="position:absolute;left:732.0833333333334px;top:116.5px;width:300px;height:23.0px;line-height:23.0px;text-align:center;font-size:11.5px;color:#222;font-weight:normal;white-space:nowrap;">Согл.план</div>
<div style="position:absolute;left:822.25px;top:116.5px;width:300px;height:23.0px;line-height:23.0px;text-align:center;font-size:11.5px;color:#222;font-weight:normal;white-space:nowrap;">Опер.план</div>
<div style="position:absolute;left:927px;top:115px;width:1px;height:25px;background:repeating-linear-gradient(180deg,#b8b8bc 0 3px,transparent 3px 5px)"></div>
<div style="position:absolute;left:912.4166666666667px;top:116.5px;width:300px;height:23.0px;line-height:23.0px;text-align:center;font-size:11.5px;color:#222;font-weight:normal;white-space:nowrap;">Факт</div>
<div style="position:absolute;left:1017px;top:115px;width:1px;height:25px;background:repeating-linear-gradient(180deg,#b8b8bc 0 3px,transparent 3px 5px)"></div>
<div style="position:absolute;left:1378px;top:90px;width:1px;height:50px;background:#bdbdc3"></div>
<div style="position:absolute;left:1092.75px;top:91.0px;width:300px;height:23.0px;line-height:23.0px;text-align:center;font-size:11.5px;color:#222;font-weight:normal;white-space:nowrap;">18.10.2025</div>
<div style="position:absolute;left:1002.5833333333333px;top:116.5px;width:300px;height:23.0px;line-height:23.0px;text-align:center;font-size:11.5px;color:#222;font-weight:normal;white-space:nowrap;">Согл.план</div>
<div style="position:absolute;left:1092.75px;top:116.5px;width:300px;height:23.0px;line-height:23.0px;text-align:center;font-size:11.5px;color:#222;font-weight:normal;white-space:nowrap;">Опер.план</div>
<div style="position:absolute;left:1198px;top:115px;width:1px;height:25px;background:repeating-linear-gradient(180deg,#b8b8bc 0 3px,transparent 3px 5px)"></div>
<div style="position:absolute;left:1182.9166666666665px;top:116.5px;width:300px;height:23.0px;line-height:23.0px;text-align:center;font-size:11.5px;color:#222;font-weight:normal;white-space:nowrap;">Факт</div>
<div style="position:absolute;left:1288px;top:115px;width:1px;height:25px;background:repeating-linear-gradient(180deg,#b8b8bc 0 3px,transparent 3px 5px)"></div>
<div style="position:absolute;left:1648px;top:90px;width:1px;height:50px;background:#bdbdc3"></div>
<div style="position:absolute;left:1363.25px;top:91.0px;width:300px;height:23.0px;line-height:23.0px;text-align:center;font-size:11.5px;color:#222;font-weight:normal;white-space:nowrap;">19.10.2025</div>
<div style="position:absolute;left:1273.0833333333333px;top:116.5px;width:300px;height:23.0px;line-height:23.0px;text-align:center;font-size:11.5px;color:#222;font-weight:normal;white-space:nowrap;">Согл.план</div>
<div style="position:absolute;left:1363.25px;top:116.5px;width:300px;height:23.0px;line-height:23.0px;text-align:center;font-size:11.5px;color:#222;font-weight:normal;white-space:nowrap;">Опер.план</div>
<div style="position:absolute;left:1468px;top:115px;width:1px;height:25px;background:repeating-linear-gradient(180deg,#b8b8bc 0 3px,transparent 3px 5px)"></div>
<div style="position:absolute;left:1453.4166666666665px;top:116.5px;width:300px;height:23.0px;line-height:23.0px;text-align:center;font-size:11.5px;color:#222;font-weight:normal;white-space:nowrap;">Факт</div>
<div style="position:absolute;left:1558px;top:115px;width:1px;height:25px;background:repeating-linear-gradient(180deg,#b8b8bc 0 3px,transparent 3px 5px)"></div>
<div style="position:absolute;left:1910px;top:90px;width:1px;height:487px;background:#c8c8cc"></div>
<div style="position:absolute;left:1910px;top:90px;width:8px;height:487px;background:#f2f2f4"></div>
<div style="position:absolute;left:1910px;top:91px;width:9px;height:50px;background:#d9d9dc;border-radius:5px"></div>
<div style="position:absolute;left:838px;top:140px;width:1072px;height:23px;background:#173a62"></div>
<div style="position:absolute;left:1669px;top:140px;width:1px;height:23px;background:rgba(255,255,255,0.25)"></div>
<div style="position:absolute;left:842.0833333333334px;top:137.0px;width:80px;height:24px;line-height:24px;text-align:center;font-size:12px;color:#fff;font-weight:normal;white-space:nowrap;">5</div>
<div style="position:absolute;left:932.25px;top:137.0px;width:80px;height:24px;line-height:24px;text-align:center;font-size:12px;color:#fff;font-weight:normal;white-space:nowrap;">5</div>
<div style="position:absolute;left:1022.4166666666667px;top:137.0px;width:80px;height:24px;line-height:24px;text-align:center;font-size:12px;color:#2bb24c;font-weight:normal;white-space:nowrap;">5</div>
<div style="position:absolute;left:1112.5833333333333px;top:137.0px;width:80px;height:24px;line-height:24px;text-align:center;font-size:12px;color:#fff;font-weight:normal;white-space:nowrap;">5</div>
<div style="position:absolute;left:1202.75px;top:137.0px;width:80px;height:24px;line-height:24px;text-align:center;font-size:12px;color:#fff;font-weight:normal;white-space:nowrap;">5</div>
<div style="position:absolute;left:1292.9166666666665px;top:137.0px;width:80px;height:24px;line-height:24px;text-align:center;font-size:12px;color:#2bb24c;font-weight:normal;white-space:nowrap;">5</div>
<div style="position:absolute;left:1383.0833333333333px;top:137.0px;width:80px;height:24px;line-height:24px;text-align:center;font-size:12px;color:#fff;font-weight:normal;white-space:nowrap;">5</div>
<div style="position:absolute;left:1473.25px;top:137.0px;width:80px;height:24px;line-height:24px;text-align:center;font-size:12px;color:#fff;font-weight:normal;white-space:nowrap;">5</div>
<div style="position:absolute;left:1563.4166666666665px;top:137.0px;width:80px;height:24px;line-height:24px;text-align:center;font-size:12px;color:#2bb24c;font-weight:normal;white-space:nowrap;">5</div>
<div style="position:absolute;left:1670.0px;top:137.0px;width:78px;height:24px;line-height:24px;text-align:center;font-size:12px;color:#fff;font-weight:normal;white-space:nowrap;">2 492</div>
<div style="position:absolute;left:1750.0px;top:137.0px;width:78px;height:24px;line-height:24px;text-align:center;font-size:12px;color:#fff;font-weight:normal;white-space:nowrap;">2 492</div>
<div style="position:absolute;left:1830.0px;top:137.0px;width:78px;height:24px;line-height:24px;text-align:center;font-size:12px;color:#fff;font-weight:normal;white-space:nowrap;">2 492</div>
<div style="position:absolute;left:838px;top:163px;width:1072px;height:23px;background:#1d487c"></div>
<div style="position:absolute;left:1669px;top:163px;width:1px;height:23px;background:rgba(255,255,255,0.25)"></div>
<div style="position:absolute;left:842.0833333333334px;top:160.0px;width:80px;height:24px;line-height:24px;text-align:center;font-size:12px;color:#fff;font-weight:normal;white-space:nowrap;">5</div>
<div style="position:absolute;left:932.25px;top:160.0px;width:80px;height:24px;line-height:24px;text-align:center;font-size:12px;color:#fff;font-weight:normal;white-space:nowrap;">5</div>
<div style="position:absolute;left:1022.4166666666667px;top:160.0px;width:80px;height:24px;line-height:24px;text-align:center;font-size:12px;color:#2bb24c;font-weight:normal;white-space:nowrap;">5</div>
<div style="position:absolute;left:1112.5833333333333px;top:160.0px;width:80px;height:24px;line-height:24px;text-align:center;font-size:12px;color:#fff;font-weight:normal;white-space:nowrap;">5</div>
<div style="position:absolute;left:1202.75px;top:160.0px;width:80px;height:24px;line-height:24px;text-align:center;font-size:12px;color:#fff;font-weight:normal;white-space:nowrap;">5</div>
<div style="position:absolute;left:1292.9166666666665px;top:160.0px;width:80px;height:24px;line-height:24px;text-align:center;font-size:12px;color:#2bb24c;font-weight:normal;white-space:nowrap;">5</div>
<div style="position:absolute;left:1383.0833333333333px;top:160.0px;width:80px;height:24px;line-height:24px;text-align:center;font-size:12px;color:#fff;font-weight:normal;white-space:nowrap;">5</div>
<div style="position:absolute;left:1473.25px;top:160.0px;width:80px;height:24px;line-height:24px;text-align:center;font-size:12px;color:#fff;font-weight:normal;white-space:nowrap;">5</div>
<div style="position:absolute;left:1563.4166666666665px;top:160.0px;width:80px;height:24px;line-height:24px;text-align:center;font-size:12px;color:#2bb24c;font-weight:normal;white-space:nowrap;">5</div>
<div style="position:absolute;left:1670.0px;top:160.0px;width:78px;height:24px;line-height:24px;text-align:center;font-size:12px;color:#fff;font-weight:normal;white-space:nowrap;">2 492</div>
<div style="position:absolute;left:1750.0px;top:160.0px;width:78px;height:24px;line-height:24px;text-align:center;font-size:12px;color:#fff;font-weight:normal;white-space:nowrap;">2 492</div>
<div style="position:absolute;left:1830.0px;top:160.0px;width:78px;height:24px;line-height:24px;text-align:center;font-size:12px;color:#fff;font-weight:normal;white-space:nowrap;">2 492</div>
<div style="position:absolute;left:838px;top:186px;width:1072px;height:23px;background:#2259a0"></div>
<div style="position:absolute;left:1669px;top:186px;width:1px;height:23px;background:rgba(255,255,255,0.25)"></div>
<div style="position:absolute;left:1670.0px;top:183.0px;width:78px;height:24px;line-height:24px;text-align:center;font-size:12px;color:#fff;font-weight:normal;white-space:nowrap;">909</div>
<div style="position:absolute;left:1750.0px;top:183.0px;width:78px;height:24px;line-height:24px;text-align:center;font-size:12px;color:#fff;font-weight:normal;white-space:nowrap;">909</div>
<div style="position:absolute;left:1830.0px;top:183.0px;width:78px;height:24px;line-height:24px;text-align:center;font-size:12px;color:#fff;font-weight:normal;white-space:nowrap;">909</div>
<div style="position:absolute;left:838px;top:209px;width:1072px;height:23px;background:#fff"></div>
<div style="position:absolute;left:1669px;top:209px;width:241px;height:23px;background:#f4f4f4"></div>
<div style="position:absolute;left:838px;top:231px;width:1072px;height:1px;background:repeating-linear-gradient(90deg,#b8b8bc 0 3px,transparent 3px 5px)"></div>
<div style="position:absolute;left:837px;top:209px;width:1px;height:23px;background:repeating-linear-gradient(180deg,#b8b8bc 0 3px,transparent 3px 5px)"></div>
<div style="position:absolute;left:927px;top:209px;width:1px;height:23px;background:repeating-linear-gradient(180deg,#b8b8bc 0 3px,transparent 3px 5px)"></div>
<div style="position:absolute;left:1017px;top:209px;width:1px;height:23px;background:repeating-linear-gradient(180deg,#b8b8bc 0 3px,transparent 3px 5px)"></div>
<div style="position:absolute;left:1108px;top:209px;width:1px;height:23px;background:repeating-linear-gradient(180deg,#b8b8bc 0 3px,transparent 3px 5px)"></div>
<div style="position:absolute;left:1198px;top:209px;width:1px;height:23px;background:repeating-linear-gradient(180deg,#b8b8bc 0 3px,transparent 3px 5px)"></div>
<div style="position:absolute;left:1288px;top:209px;width:1px;height:23px;background:repeating-linear-gradient(180deg,#b8b8bc 0 3px,transparent 3px 5px)"></div>
<div style="position:absolute;left:1378px;top:209px;width:1px;height:23px;background:repeating-linear-gradient(180deg,#b8b8bc 0 3px,transparent 3px 5px)"></div>
<div style="position:absolute;left:1468px;top:209px;width:1px;height:23px;background:repeating-linear-gradient(180deg,#b8b8bc 0 3px,transparent 3px 5px)"></div>
<div style="position:absolute;left:1558px;top:209px;width:1px;height:23px;background:repeating-linear-gradient(180deg,#b8b8bc 0 3px,transparent 3px 5px)"></div>
<div style="position:absolute;left:1749px;top:209px;width:1px;height:23px;background:repeating-linear-gradient(180deg,#b8b8bc 0 3px,transparent 3px 5px)"></div>
<div style="position:absolute;left:1829px;top:209px;width:1px;height:23px;background:repeating-linear-gradient(180deg,#b8b8bc 0 3px,transparent 3px 5px)"></div>
<div style="position:absolute;left:1108px;top:209px;width:1px;height:23px;background:#b8b8c0"></div>
<div style="position:absolute;left:1378px;top:209px;width:1px;height:23px;background:#b8b8c0"></div>
<div style="position:absolute;left:1648px;top:209px;width:1px;height:23px;background:#b8b8c0"></div>
<div style="position:absolute;left:1669px;top:209px;width:1px;height:23px;background:#b8b8c0"></div>
<div style="position:absolute;left:1670.0px;top:206.0px;width:78px;height:24px;line-height:24px;text-align:center;font-size:12px;color:#222;font-weight:normal;white-space:nowrap;">134</div>
<div style="position:absolute;left:1750.0px;top:206.0px;width:78px;height:24px;line-height:24px;text-align:center;font-size:12px;color:#222;font-weight:normal;white-space:nowrap;">134</div>
<div style="position:absolute;left:1830.0px;top:206.0px;width:78px;height:24px;line-height:24px;text-align:center;font-size:12px;color:#222;font-weight:normal;white-space:nowrap;">134</div>
<div style="position:absolute;left:838px;top:232px;width:1072px;height:23px;background:#fff"></div>
<div style="position:absolute;left:1669px;top:232px;width:241px;height:23px;background:#f4f4f4"></div>
<div style="position:absolute;left:838px;top:254px;width:1072px;height:1px;background:repeating-linear-gradient(90deg,#b8b8bc 0 3px,transparent 3px 5px)"></div>
<div style="position:absolute;left:837px;top:232px;width:1px;height:23px;background:repeating-linear-gradient(180deg,#b8b8bc 0 3px,transparent 3px 5px)"></div>
<div style="position:absolute;left:927px;top:232px;width:1px;height:23px;background:repeating-linear-gradient(180deg,#b8b8bc 0 3px,transparent 3px 5px)"></div>
<div style="position:absolute;left:1017px;top:232px;width:1px;height:23px;background:repeating-linear-gradient(180deg,#b8b8bc 0 3px,transparent 3px 5px)"></div>
<div style="position:absolute;left:1108px;top:232px;width:1px;height:23px;background:repeating-linear-gradient(180deg,#b8b8bc 0 3px,transparent 3px 5px)"></div>
<div style="position:absolute;left:1198px;top:232px;width:1px;height:23px;background:repeating-linear-gradient(180deg,#b8b8bc 0 3px,transparent 3px 5px)"></div>
<div style="position:absolute;left:1288px;top:232px;width:1px;height:23px;background:repeating-linear-gradient(180deg,#b8b8bc 0 3px,transparent 3px 5px)"></div>
<div style="position:absolute;left:1378px;top:232px;width:1px;height:23px;background:repeating-linear-gradient(180deg,#b8b8bc 0 3px,transparent 3px 5px)"></div>
<div style="position:absolute;left:1468px;top:232px;width:1px;height:23px;background:repeating-linear-gradient(180deg,#b8b8bc 0 3px,transparent 3px 5px)"></div>
<div style="position:absolute;left:1558px;top:232px;width:1px;height:23px;background:repeating-linear-gradient(180deg,#b8b8bc 0 3px,transparent 3px 5px)"></div>
<div style="position:absolute;left:1749px;top:232px;width:1px;height:23px;background:repeating-linear-gradient(180deg,#b8b8bc 0 3px,transparent 3px 5px)"></div>
<div style="position:absolute;left:1829px;top:232px;width:1px;height:23px;background:repeating-linear-gradient(180deg,#b8b8bc 0 3px,transparent 3px 5px)"></div>
<div style="position:absolute;left:1108px;top:232px;width:1px;height:23px;background:#b8b8c0"></div>
<div style="position:absolute;left:1378px;top:232px;width:1px;height:23px;background:#b8b8c0"></div>
<div style="position:absolute;left:1648px;top:232px;width:1px;height:23px;background:#b8b8c0"></div>
<div style="position:absolute;left:1669px;top:232px;width:1px;height:23px;background:#b8b8c0"></div>
<div style="position:absolute;left:1670.0px;top:229.0px;width:78px;height:24px;line-height:24px;text-align:center;font-size:12px;color:#222;font-weight:normal;white-space:nowrap;">234</div>
<div style="position:absolute;left:1750.0px;top:229.0px;width:78px;height:24px;line-height:24px;text-align:center;font-size:12px;color:#222;font-weight:normal;white-space:nowrap;">234</div>
<div style="position:absolute;left:1830.0px;top:229.0px;width:78px;height:24px;line-height:24px;text-align:center;font-size:12px;color:#222;font-weight:normal;white-space:nowrap;">234</div>
<div style="position:absolute;left:838px;top:255px;width:1072px;height:23px;background:#fff"></div>
<div style="position:absolute;left:1669px;top:255px;width:241px;height:23px;background:#f4f4f4"></div>
<div style="position:absolute;left:838px;top:277px;width:1072px;height:1px;background:repeating-linear-gradient(90deg,#b8b8bc 0 3px,transparent 3px 5px)"></div>
<div style="position:absolute;left:837px;top:255px;width:1px;height:23px;background:repeating-linear-gradient(180deg,#b8b8bc 0 3px,transparent 3px 5px)"></div>
<div style="position:absolute;left:927px;top:255px;width:1px;height:23px;background:repeating-linear-gradient(180deg,#b8b8bc 0 3px,transparent 3px 5px)"></div>
<div style="position:absolute;left:1017px;top:255px;width:1px;height:23px;background:repeating-linear-gradient(180deg,#b8b8bc 0 3px,transparent 3px 5px)"></div>
<div style="position:absolute;left:1108px;top:255px;width:1px;height:23px;background:repeating-linear-gradient(180deg,#b8b8bc 0 3px,transparent 3px 5px)"></div>
<div style="position:absolute;left:1198px;top:255px;width:1px;height:23px;background:repeating-linear-gradient(180deg,#b8b8bc 0 3px,transparent 3px 5px)"></div>
<div style="position:absolute;left:1288px;top:255px;width:1px;height:23px;background:repeating-linear-gradient(180deg,#b8b8bc 0 3px,transparent 3px 5px)"></div>
<div style="position:absolute;left:1378px;top:255px;width:1px;height:23px;background:repeating-linear-gradient(180deg,#b8b8bc 0 3px,transparent 3px 5px)"></div>
<div style="position:absolute;left:1468px;top:255px;width:1px;height:23px;background:repeating-linear-gradient(180deg,#b8b8bc 0 3px,transparent 3px 5px)"></div>
<div style="position:absolute;left:1558px;top:255px;width:1px;height:23px;background:repeating-linear-gradient(180deg,#b8b8bc 0 3px,transparent 3px 5px)"></div>
<div style="position:absolute;left:1749px;top:255px;width:1px;height:23px;background:repeating-linear-gradient(180deg,#b8b8bc 0 3px,transparent 3px 5px)"></div>
<div style="position:absolute;left:1829px;top:255px;width:1px;height:23px;background:repeating-linear-gradient(180deg,#b8b8bc 0 3px,transparent 3px 5px)"></div>
<div style="position:absolute;left:1108px;top:255px;width:1px;height:23px;background:#b8b8c0"></div>
<div style="position:absolute;left:1378px;top:255px;width:1px;height:23px;background:#b8b8c0"></div>
<div style="position:absolute;left:1648px;top:255px;width:1px;height:23px;background:#b8b8c0"></div>
<div style="position:absolute;left:1669px;top:255px;width:1px;height:23px;background:#b8b8c0"></div>
<div style="position:absolute;left:1670.0px;top:252.0px;width:78px;height:24px;line-height:24px;text-align:center;font-size:12px;color:#222;font-weight:normal;white-space:nowrap;">541</div>
<div style="position:absolute;left:1750.0px;top:252.0px;width:78px;height:24px;line-height:24px;text-align:center;font-size:12px;color:#222;font-weight:normal;white-space:nowrap;">541</div>
<div style="position:absolute;left:1830.0px;top:252.0px;width:78px;height:24px;line-height:24px;text-align:center;font-size:12px;color:#222;font-weight:normal;white-space:nowrap;">541</div>
<div style="position:absolute;left:838px;top:278px;width:1072px;height:23px;background:#2259a0"></div>
<div style="position:absolute;left:1669px;top:278px;width:1px;height:23px;background:rgba(255,255,255,0.25)"></div>
<div style="position:absolute;left:1563.0px;top:275.0px;width:80px;height:24px;line-height:24px;text-align:center;font-size:12px;color:#2bb24c;font-weight:normal;white-space:nowrap;">5</div>
<div style="position:absolute;left:1670.0px;top:275.0px;width:78px;height:24px;line-height:24px;text-align:center;font-size:12px;color:#fff;font-weight:normal;white-space:nowrap;">1 583</div>
<div style="position:absolute;left:1750.0px;top:275.0px;width:78px;height:24px;line-height:24px;text-align:center;font-size:12px;color:#fff;font-weight:normal;white-space:nowrap;">1 583</div>
<div style="position:absolute;left:1830.0px;top:275.0px;width:78px;height:24px;line-height:24px;text-align:center;font-size:12px;color:#fff;font-weight:normal;white-space:nowrap;">1 583</div>
<div style="position:absolute;left:838px;top:301px;width:1072px;height:23px;background:#2868b8"></div>
<div style="position:absolute;left:1669px;top:301px;width:1px;height:23px;background:rgba(255,255,255,0.25)"></div>
<div style="position:absolute;left:1563.0px;top:298.0px;width:80px;height:24px;line-height:24px;text-align:center;font-size:12px;color:#2bb24c;font-weight:normal;white-space:nowrap;">5</div>
<div style="position:absolute;left:1670.0px;top:298.0px;width:78px;height:24px;line-height:24px;text-align:center;font-size:12px;color:#fff;font-weight:normal;white-space:nowrap;">1 349</div>
<div style="position:absolute;left:1750.0px;top:298.0px;width:78px;height:24px;line-height:24px;text-align:center;font-size:12px;color:#fff;font-weight:normal;white-space:nowrap;">1 349</div>
<div style="position:absolute;left:1830.0px;top:298.0px;width:78px;height:24px;line-height:24px;text-align:center;font-size:12px;color:#fff;font-weight:normal;white-space:nowrap;">1 349</div>
<div style="position:absolute;left:838px;top:324px;width:1072px;height:23px;background:#fff"></div>
<div style="position:absolute;left:1669px;top:324px;width:241px;height:23px;background:#f4f4f4"></div>
<div style="position:absolute;left:838px;top:346px;width:1072px;height:1px;background:repeating-linear-gradient(90deg,#b8b8bc 0 3px,transparent 3px 5px)"></div>
<div style="position:absolute;left:837px;top:324px;width:1px;height:23px;background:repeating-linear-gradient(180deg,#b8b8bc 0 3px,transparent 3px 5px)"></div>
<div style="position:absolute;left:927px;top:324px;width:1px;height:23px;background:repeating-linear-gradient(180deg,#b8b8bc 0 3px,transparent 3px 5px)"></div>
<div style="position:absolute;left:1017px;top:324px;width:1px;height:23px;background:repeating-linear-gradient(180deg,#b8b8bc 0 3px,transparent 3px 5px)"></div>
<div style="position:absolute;left:1108px;top:324px;width:1px;height:23px;background:repeating-linear-gradient(180deg,#b8b8bc 0 3px,transparent 3px 5px)"></div>
<div style="position:absolute;left:1198px;top:324px;width:1px;height:23px;background:repeating-linear-gradient(180deg,#b8b8bc 0 3px,transparent 3px 5px)"></div>
<div style="position:absolute;left:1288px;top:324px;width:1px;height:23px;background:repeating-linear-gradient(180deg,#b8b8bc 0 3px,transparent 3px 5px)"></div>
<div style="position:absolute;left:1378px;top:324px;width:1px;height:23px;background:repeating-linear-gradient(180deg,#b8b8bc 0 3px,transparent 3px 5px)"></div>
<div style="position:absolute;left:1468px;top:324px;width:1px;height:23px;background:repeating-linear-gradient(180deg,#b8b8bc 0 3px,transparent 3px 5px)"></div>
<div style="position:absolute;left:1558px;top:324px;width:1px;height:23px;background:repeating-linear-gradient(180deg,#b8b8bc 0 3px,transparent 3px 5px)"></div>
<div style="position:absolute;left:1749px;top:324px;width:1px;height:23px;background:repeating-linear-gradient(180deg,#b8b8bc 0 3px,transparent 3px 5px)"></div>
<div style="position:absolute;left:1829px;top:324px;width:1px;height:23px;background:repeating-linear-gradient(180deg,#b8b8bc 0 3px,transparent 3px 5px)"></div>
<div style="position:absolute;left:1108px;top:324px;width:1px;height:23px;background:#b8b8c0"></div>
<div style="position:absolute;left:1378px;top:324px;width:1px;height:23px;background:#b8b8c0"></div>
<div style="position:absolute;left:1648px;top:324px;width:1px;height:23px;background:#b8b8c0"></div>
<div style="position:absolute;left:1669px;top:324px;width:1px;height:23px;background:#b8b8c0"></div>
<div style="position:absolute;left:1670.0px;top:321.0px;width:78px;height:24px;line-height:24px;text-align:center;font-size:12px;color:#222;font-weight:normal;white-space:nowrap;">34</div>
<div style="position:absolute;left:1750.0px;top:321.0px;width:78px;height:24px;line-height:24px;text-align:center;font-size:12px;color:#222;font-weight:normal;white-space:nowrap;">34</div>
<div style="position:absolute;left:1830.0px;top:321.0px;width:78px;height:24px;line-height:24px;text-align:center;font-size:12px;color:#222;font-weight:normal;white-space:nowrap;">34</div>
<div style="position:absolute;left:838px;top:347px;width:1072px;height:23px;background:#dce9f7"></div>
<div style="position:absolute;left:838px;top:369px;width:1072px;height:1px;background:repeating-linear-gradient(90deg,#b8b8bc 0 3px,transparent 3px 5px)"></div>
<div style="position:absolute;left:837px;top:347px;width:1px;height:23px;background:repeating-linear-gradient(180deg,#b8b8bc 0 3px,transparent 3px 5px)"></div>
<div style="position:absolute;left:927px;top:347px;width:1px;height:23px;background:repeating-linear-gradient(180deg,#b8b8bc 0 3px,transparent 3px 5px)"></div>
<div style="position:absolute;left:1017px;top:347px;width:1px;height:23px;background:repeating-linear-gradient(180deg,#b8b8bc 0 3px,transparent 3px 5px)"></div>
<div style="position:absolute;left:1108px;top:347px;width:1px;height:23px;background:repeating-linear-gradient(180deg,#b8b8bc 0 3px,transparent 3px 5px)"></div>
<div style="position:absolute;left:1198px;top:347px;width:1px;height:23px;background:repeating-linear-gradient(180deg,#b8b8bc 0 3px,transparent 3px 5px)"></div>
<div style="position:absolute;left:1288px;top:347px;width:1px;height:23px;background:repeating-linear-gradient(180deg,#b8b8bc 0 3px,transparent 3px 5px)"></div>
<div style="position:absolute;left:1378px;top:347px;width:1px;height:23px;background:repeating-linear-gradient(180deg,#b8b8bc 0 3px,transparent 3px 5px)"></div>
<div style="position:absolute;left:1468px;top:347px;width:1px;height:23px;background:repeating-linear-gradient(180deg,#b8b8bc 0 3px,transparent 3px 5px)"></div>
<div style="position:absolute;left:1558px;top:347px;width:1px;height:23px;background:repeating-linear-gradient(180deg,#b8b8bc 0 3px,transparent 3px 5px)"></div>
<div style="position:absolute;left:1749px;top:347px;width:1px;height:23px;background:repeating-linear-gradient(180deg,#b8b8bc 0 3px,transparent 3px 5px)"></div>
<div style="position:absolute;left:1829px;top:347px;width:1px;height:23px;background:repeating-linear-gradient(180deg,#b8b8bc 0 3px,transparent 3px 5px)"></div>
<div style="position:absolute;left:1108px;top:347px;width:1px;height:23px;background:#b8b8c0"></div>
<div style="position:absolute;left:1378px;top:347px;width:1px;height:23px;background:#b8b8c0"></div>
<div style="position:absolute;left:1648px;top:347px;width:1px;height:23px;background:#b8b8c0"></div>
<div style="position:absolute;left:1669px;top:347px;width:1px;height:23px;background:#b8b8c0"></div>
<div style="position:absolute;left:1563.0px;top:344.0px;width:80px;height:24px;line-height:24px;text-align:center;font-size:12px;color:#2bb24c;font-weight:normal;white-space:nowrap;">5</div>
<div style="position:absolute;left:1670.0px;top:344.0px;width:78px;height:24px;line-height:24px;text-align:center;font-size:12px;color:#222;font-weight:normal;white-space:nowrap;">25</div>
<div style="position:absolute;left:1750.0px;top:344.0px;width:78px;height:24px;line-height:24px;text-align:center;font-size:12px;color:#222;font-weight:normal;white-space:nowrap;">25</div>
<div style="position:absolute;left:1830.0px;top:344.0px;width:78px;height:24px;line-height:24px;text-align:center;font-size:12px;color:#222;font-weight:normal;white-space:nowrap;">25</div>
<div style="position:absolute;left:838px;top:370px;width:1072px;height:23px;background:#fff"></div>
<div style="position:absolute;left:1669px;top:370px;width:241px;height:23px;background:#f4f4f4"></div>
<div style="position:absolute;left:838px;top:392px;width:1072px;height:1px;background:repeating-linear-gradient(90deg,#b8b8bc 0 3px,transparent 3px 5px)"></div>
<div style="position:absolute;left:837px;top:370px;width:1px;height:23px;background:repeating-linear-gradient(180deg,#b8b8bc 0 3px,transparent 3px 5px)"></div>
<div style="position:absolute;left:927px;top:370px;width:1px;height:23px;background:repeating-linear-gradient(180deg,#b8b8bc 0 3px,transparent 3px 5px)"></div>
<div style="position:absolute;left:1017px;top:370px;width:1px;height:23px;background:repeating-linear-gradient(180deg,#b8b8bc 0 3px,transparent 3px 5px)"></div>
<div style="position:absolute;left:1108px;top:370px;width:1px;height:23px;background:repeating-linear-gradient(180deg,#b8b8bc 0 3px,transparent 3px 5px)"></div>
<div style="position:absolute;left:1198px;top:370px;width:1px;height:23px;background:repeating-linear-gradient(180deg,#b8b8bc 0 3px,transparent 3px 5px)"></div>
<div style="position:absolute;left:1288px;top:370px;width:1px;height:23px;background:repeating-linear-gradient(180deg,#b8b8bc 0 3px,transparent 3px 5px)"></div>
<div style="position:absolute;left:1378px;top:370px;width:1px;height:23px;background:repeating-linear-gradient(180deg,#b8b8bc 0 3px,transparent 3px 5px)"></div>
<div style="position:absolute;left:1468px;top:370px;width:1px;height:23px;background:repeating-linear-gradient(180deg,#b8b8bc 0 3px,transparent 3px 5px)"></div>
<div style="position:absolute;left:1558px;top:370px;width:1px;height:23px;background:repeating-linear-gradient(180deg,#b8b8bc 0 3px,transparent 3px 5px)"></div>
<div style="position:absolute;left:1749px;top:370px;width:1px;height:23px;background:repeating-linear-gradient(180deg,#b8b8bc 0 3px,transparent 3px 5px)"></div>
<div style="position:absolute;left:1829px;top:370px;width:1px;height:23px;background:repeating-linear-gradient(180deg,#b8b8bc 0 3px,transparent 3px 5px)"></div>
<div style="position:absolute;left:1108px;top:370px;width:1px;height:23px;background:#b8b8c0"></div>
<div style="position:absolute;left:1378px;top:370px;width:1px;height:23px;background:#b8b8c0"></div>
<div style="position:absolute;left:1648px;top:370px;width:1px;height:23px;background:#b8b8c0"></div>
<div style="position:absolute;left:1669px;top:370px;width:1px;height:23px;background:#b8b8c0"></div>
<div style="position:absolute;left:1670.0px;top:367.0px;width:78px;height:24px;line-height:24px;text-align:center;font-size:12px;color:#222;font-weight:normal;white-space:nowrap;">87</div>
<div style="position:absolute;left:1750.0px;top:367.0px;width:78px;height:24px;line-height:24px;text-align:center;font-size:12px;color:#222;font-weight:normal;white-space:nowrap;">87</div>
<div style="position:absolute;left:1830.0px;top:367.0px;width:78px;height:24px;line-height:24px;text-align:center;font-size:12px;color:#222;font-weight:normal;white-space:nowrap;">87</div>
<div style="position:absolute;left:838px;top:393px;width:1072px;height:23px;background:#fff"></div>
<div style="position:absolute;left:1669px;top:393px;width:241px;height:23px;background:#f4f4f4"></div>
<div style="position:absolute;left:838px;top:415px;width:1072px;height:1px;background:repeating-linear-gradient(90deg,#b8b8bc 0 3px,transparent 3px 5px)"></div>
<div style="position:absolute;left:837px;top:393px;width:1px;height:23px;background:repeating-linear-gradient(180deg,#b8b8bc 0 3px,transparent 3px 5px)"></div>
<div style="position:absolute;left:927px;top:393px;width:1px;height:23px;background:repeating-linear-gradient(180deg,#b8b8bc 0 3px,transparent 3px 5px)"></div>
<div style="position:absolute;left:1017px;top:393px;width:1px;height:23px;background:repeating-linear-gradient(180deg,#b8b8bc 0 3px,transparent 3px 5px)"></div>
<div style="position:absolute;left:1108px;top:393px;width:1px;height:23px;background:repeating-linear-gradient(180deg,#b8b8bc 0 3px,transparent 3px 5px)"></div>
<div style="position:absolute;left:1198px;top:393px;width:1px;height:23px;background:repeating-linear-gradient(180deg,#b8b8bc 0 3px,transparent 3px 5px)"></div>
<div style="position:absolute;left:1288px;top:393px;width:1px;height:23px;background:repeating-linear-gradient(180deg,#b8b8bc 0 3px,transparent 3px 5px)"></div>
<div style="position:absolute;left:1378px;top:393px;width:1px;height:23px;background:repeating-linear-gradient(180deg,#b8b8bc 0 3px,transparent 3px 5px)"></div>
<div style="position:absolute;left:1468px;top:393px;width:1px;height:23px;background:repeating-linear-gradient(180deg,#b8b8bc 0 3px,transparent 3px 5px)"></div>
<div style="position:absolute;left:1558px;top:393px;width:1px;height:23px;background:repeating-linear-gradient(180deg,#b8b8bc 0 3px,transparent 3px 5px)"></div>
<div style="position:absolute;left:1749px;top:393px;width:1px;height:23px;background:repeating-linear-gradient(180deg,#b8b8bc 0 3px,transparent 3px 5px)"></div>
<div style="position:absolute;left:1829px;top:393px;width:1px;height:23px;background:repeating-linear-gradient(180deg,#b8b8bc 0 3px,transparent 3px 5px)"></div>
<div style="position:absolute;left:1108px;top:393px;width:1px;height:23px;background:#b8b8c0"></div>
<div style="position:absolute;left:1378px;top:393px;width:1px;height:23px;background:#b8b8c0"></div>
<div style="position:absolute;left:1648px;top:393px;width:1px;height:23px;background:#b8b8c0"></div>
<div style="position:absolute;left:1669px;top:393px;width:1px;height:23px;background:#b8b8c0"></div>
<div style="position:absolute;left:1670.0px;top:390.0px;width:78px;height:24px;line-height:24px;text-align:center;font-size:12px;color:#222;font-weight:normal;white-space:nowrap;">672</div>
<div style="position:absolute;left:1750.0px;top:390.0px;width:78px;height:24px;line-height:24px;text-align:center;font-size:12px;color:#222;font-weight:normal;white-space:nowrap;">672</div>
<div style="position:absolute;left:1830.0px;top:390.0px;width:78px;height:24px;line-height:24px;text-align:center;font-size:12px;color:#222;font-weight:normal;white-space:nowrap;">672</div>
<div style="position:absolute;left:838px;top:416px;width:1072px;height:23px;background:#fff"></div>
<div style="position:absolute;left:1669px;top:416px;width:241px;height:23px;background:#f4f4f4"></div>
<div style="position:absolute;left:838px;top:438px;width:1072px;height:1px;background:repeating-linear-gradient(90deg,#b8b8bc 0 3px,transparent 3px 5px)"></div>
<div style="position:absolute;left:837px;top:416px;width:1px;height:23px;background:repeating-linear-gradient(180deg,#b8b8bc 0 3px,transparent 3px 5px)"></div>
<div style="position:absolute;left:927px;top:416px;width:1px;height:23px;background:repeating-linear-gradient(180deg,#b8b8bc 0 3px,transparent 3px 5px)"></div>
<div style="position:absolute;left:1017px;top:416px;width:1px;height:23px;background:repeating-linear-gradient(180deg,#b8b8bc 0 3px,transparent 3px 5px)"></div>
<div style="position:absolute;left:1108px;top:416px;width:1px;height:23px;background:repeating-linear-gradient(180deg,#b8b8bc 0 3px,transparent 3px 5px)"></div>
<div style="position:absolute;left:1198px;top:416px;width:1px;height:23px;background:repeating-linear-gradient(180deg,#b8b8bc 0 3px,transparent 3px 5px)"></div>
<div style="position:absolute;left:1288px;top:416px;width:1px;height:23px;background:repeating-linear-gradient(180deg,#b8b8bc 0 3px,transparent 3px 5px)"></div>
<div style="position:absolute;left:1378px;top:416px;width:1px;height:23px;background:repeating-linear-gradient(180deg,#b8b8bc 0 3px,transparent 3px 5px)"></div>
<div style="position:absolute;left:1468px;top:416px;width:1px;height:23px;background:repeating-linear-gradient(180deg,#b8b8bc 0 3px,transparent 3px 5px)"></div>
<div style="position:absolute;left:1558px;top:416px;width:1px;height:23px;background:repeating-linear-gradient(180deg,#b8b8bc 0 3px,transparent 3px 5px)"></div>
<div style="position:absolute;left:1749px;top:416px;width:1px;height:23px;background:repeating-linear-gradient(180deg,#b8b8bc 0 3px,transparent 3px 5px)"></div>
<div style="position:absolute;left:1829px;top:416px;width:1px;height:23px;background:repeating-linear-gradient(180deg,#b8b8bc 0 3px,transparent 3px 5px)"></div>
<div style="position:absolute;left:1108px;top:416px;width:1px;height:23px;background:#b8b8c0"></div>
<div style="position:absolute;left:1378px;top:416px;width:1px;height:23px;background:#b8b8c0"></div>
<div style="position:absolute;left:1648px;top:416px;width:1px;height:23px;background:#b8b8c0"></div>
<div style="position:absolute;left:1669px;top:416px;width:1px;height:23px;background:#b8b8c0"></div>
<div style="position:absolute;left:1670.0px;top:413.0px;width:78px;height:24px;line-height:24px;text-align:center;font-size:12px;color:#222;font-weight:normal;white-space:nowrap;">531</div>
<div style="position:absolute;left:1750.0px;top:413.0px;width:78px;height:24px;line-height:24px;text-align:center;font-size:12px;color:#222;font-weight:normal;white-space:nowrap;">531</div>
<div style="position:absolute;left:1830.0px;top:413.0px;width:78px;height:24px;line-height:24px;text-align:center;font-size:12px;color:#222;font-weight:normal;white-space:nowrap;">531</div>
<div style="position:absolute;left:838px;top:439px;width:1072px;height:23px;background:#2868b8"></div>
<div style="position:absolute;left:1669px;top:439px;width:1px;height:23px;background:rgba(255,255,255,0.25)"></div>
<div style="position:absolute;left:1670.0px;top:436.0px;width:78px;height:24px;line-height:24px;text-align:center;font-size:12px;color:#fff;font-weight:normal;white-space:nowrap;">157</div>
<div style="position:absolute;left:1750.0px;top:436.0px;width:78px;height:24px;line-height:24px;text-align:center;font-size:12px;color:#fff;font-weight:normal;white-space:nowrap;">157</div>
<div style="position:absolute;left:1830.0px;top:436.0px;width:78px;height:24px;line-height:24px;text-align:center;font-size:12px;color:#fff;font-weight:normal;white-space:nowrap;">157</div>
<div style="position:absolute;left:838px;top:462px;width:1072px;height:23px;background:#fff"></div>
<div style="position:absolute;left:1669px;top:462px;width:241px;height:23px;background:#f4f4f4"></div>
<div style="position:absolute;left:838px;top:484px;width:1072px;height:1px;background:repeating-linear-gradient(90deg,#b8b8bc 0 3px,transparent 3px 5px)"></div>
<div style="position:absolute;left:837px;top:462px;width:1px;height:23px;background:repeating-linear-gradient(180deg,#b8b8bc 0 3px,transparent 3px 5px)"></div>
<div style="position:absolute;left:927px;top:462px;width:1px;height:23px;background:repeating-linear-gradient(180deg,#b8b8bc 0 3px,transparent 3px 5px)"></div>
<div style="position:absolute;left:1017px;top:462px;width:1px;height:23px;background:repeating-linear-gradient(180deg,#b8b8bc 0 3px,transparent 3px 5px)"></div>
<div style="position:absolute;left:1108px;top:462px;width:1px;height:23px;background:repeating-linear-gradient(180deg,#b8b8bc 0 3px,transparent 3px 5px)"></div>
<div style="position:absolute;left:1198px;top:462px;width:1px;height:23px;background:repeating-linear-gradient(180deg,#b8b8bc 0 3px,transparent 3px 5px)"></div>
<div style="position:absolute;left:1288px;top:462px;width:1px;height:23px;background:repeating-linear-gradient(180deg,#b8b8bc 0 3px,transparent 3px 5px)"></div>
<div style="position:absolute;left:1378px;top:462px;width:1px;height:23px;background:repeating-linear-gradient(180deg,#b8b8bc 0 3px,transparent 3px 5px)"></div>
<div style="position:absolute;left:1468px;top:462px;width:1px;height:23px;background:repeating-linear-gradient(180deg,#b8b8bc 0 3px,transparent 3px 5px)"></div>
<div style="position:absolute;left:1558px;top:462px;width:1px;height:23px;background:repeating-linear-gradient(180deg,#b8b8bc 0 3px,transparent 3px 5px)"></div>
<div style="position:absolute;left:1749px;top:462px;width:1px;height:23px;background:repeating-linear-gradient(180deg,#b8b8bc 0 3px,transparent 3px 5px)"></div>
<div style="position:absolute;left:1829px;top:462px;width:1px;height:23px;background:repeating-linear-gradient(180deg,#b8b8bc 0 3px,transparent 3px 5px)"></div>
<div style="position:absolute;left:1108px;top:462px;width:1px;height:23px;background:#b8b8c0"></div>
<div style="position:absolute;left:1378px;top:462px;width:1px;height:23px;background:#b8b8c0"></div>
<div style="position:absolute;left:1648px;top:462px;width:1px;height:23px;background:#b8b8c0"></div>
<div style="position:absolute;left:1669px;top:462px;width:1px;height:23px;background:#b8b8c0"></div>
<div style="position:absolute;left:1670.0px;top:459.0px;width:78px;height:24px;line-height:24px;text-align:center;font-size:12px;color:#222;font-weight:normal;white-space:nowrap;">12</div>
<div style="position:absolute;left:1750.0px;top:459.0px;width:78px;height:24px;line-height:24px;text-align:center;font-size:12px;color:#222;font-weight:normal;white-space:nowrap;">12</div>
<div style="position:absolute;left:1830.0px;top:459.0px;width:78px;height:24px;line-height:24px;text-align:center;font-size:12px;color:#222;font-weight:normal;white-space:nowrap;">12</div>
<div style="position:absolute;left:838px;top:485px;width:1072px;height:23px;background:#fff"></div>
<div style="position:absolute;left:1669px;top:485px;width:241px;height:23px;background:#f4f4f4"></div>
<div style="position:absolute;left:838px;top:507px;width:1072px;height:1px;background:repeating-linear-gradient(90deg,#b8b8bc 0 3px,transparent 3px 5px)"></div>
<div style="position:absolute;left:837px;top:485px;width:1px;height:23px;background:repeating-linear-gradient(180deg,#b8b8bc 0 3px,transparent 3px 5px)"></div>
<div style="position:absolute;left:927px;top:485px;width:1px;height:23px;background:repeating-linear-gradient(180deg,#b8b8bc 0 3px,transparent 3px 5px)"></div>
<div style="position:absolute;left:1017px;top:485px;width:1px;height:23px;background:repeating-linear-gradient(180deg,#b8b8bc 0 3px,transparent 3px 5px)"></div>
<div style="position:absolute;left:1108px;top:485px;width:1px;height:23px;background:repeating-linear-gradient(180deg,#b8b8bc 0 3px,transparent 3px 5px)"></div>
<div style="position:absolute;left:1198px;top:485px;width:1px;height:23px;background:repeating-linear-gradient(180deg,#b8b8bc 0 3px,transparent 3px 5px)"></div>
<div style="position:absolute;left:1288px;top:485px;width:1px;height:23px;background:repeating-linear-gradient(180deg,#b8b8bc 0 3px,transparent 3px 5px)"></div>
<div style="position:absolute;left:1378px;top:485px;width:1px;height:23px;background:repeating-linear-gradient(180deg,#b8b8bc 0 3px,transparent 3px 5px)"></div>
<div style="position:absolute;left:1468px;top:485px;width:1px;height:23px;background:repeating-linear-gradient(180deg,#b8b8bc 0 3px,transparent 3px 5px)"></div>
<div style="position:absolute;left:1558px;top:485px;width:1px;height:23px;background:repeating-linear-gradient(180deg,#b8b8bc 0 3px,transparent 3px 5px)"></div>
<div style="position:absolute;left:1749px;top:485px;width:1px;height:23px;background:repeating-linear-gradient(180deg,#b8b8bc 0 3px,transparent 3px 5px)"></div>
<div style="position:absolute;left:1829px;top:485px;width:1px;height:23px;background:repeating-linear-gradient(180deg,#b8b8bc 0 3px,transparent 3px 5px)"></div>
<div style="position:absolute;left:1108px;top:485px;width:1px;height:23px;background:#b8b8c0"></div>
<div style="position:absolute;left:1378px;top:485px;width:1px;height:23px;background:#b8b8c0"></div>
<div style="position:absolute;left:1648px;top:485px;width:1px;height:23px;background:#b8b8c0"></div>
<div style="position:absolute;left:1669px;top:485px;width:1px;height:23px;background:#b8b8c0"></div>
<div style="position:absolute;left:1670.0px;top:482.0px;width:78px;height:24px;line-height:24px;text-align:center;font-size:12px;color:#222;font-weight:normal;white-space:nowrap;">45</div>
<div style="position:absolute;left:1750.0px;top:482.0px;width:78px;height:24px;line-height:24px;text-align:center;font-size:12px;color:#222;font-weight:normal;white-space:nowrap;">45</div>
<div style="position:absolute;left:1830.0px;top:482.0px;width:78px;height:24px;line-height:24px;text-align:center;font-size:12px;color:#222;font-weight:normal;white-space:nowrap;">45</div>
<div style="position:absolute;left:838px;top:508px;width:1072px;height:23px;background:#fff"></div>
<div style="position:absolute;left:1669px;top:508px;width:241px;height:23px;background:#f4f4f4"></div>
<div style="position:absolute;left:838px;top:530px;width:1072px;height:1px;background:repeating-linear-gradient(90deg,#b8b8bc 0 3px,transparent 3px 5px)"></div>
<div style="position:absolute;left:837px;top:508px;width:1px;height:23px;background:repeating-linear-gradient(180deg,#b8b8bc 0 3px,transparent 3px 5px)"></div>
<div style="position:absolute;left:927px;top:508px;width:1px;height:23px;background:repeating-linear-gradient(180deg,#b8b8bc 0 3px,transparent 3px 5px)"></div>
<div style="position:absolute;left:1017px;top:508px;width:1px;height:23px;background:repeating-linear-gradient(180deg,#b8b8bc 0 3px,transparent 3px 5px)"></div>
<div style="position:absolute;left:1108px;top:508px;width:1px;height:23px;background:repeating-linear-gradient(180deg,#b8b8bc 0 3px,transparent 3px 5px)"></div>
<div style="position:absolute;left:1198px;top:508px;width:1px;height:23px;background:repeating-linear-gradient(180deg,#b8b8bc 0 3px,transparent 3px 5px)"></div>
<div style="position:absolute;left:1288px;top:508px;width:1px;height:23px;background:repeating-linear-gradient(180deg,#b8b8bc 0 3px,transparent 3px 5px)"></div>
<div style="position:absolute;left:1378px;top:508px;width:1px;height:23px;background:repeating-linear-gradient(180deg,#b8b8bc 0 3px,transparent 3px 5px)"></div>
<div style="position:absolute;left:1468px;top:508px;width:1px;height:23px;background:repeating-linear-gradient(180deg,#b8b8bc 0 3px,transparent 3px 5px)"></div>
<div style="position:absolute;left:1558px;top:508px;width:1px;height:23px;background:repeating-linear-gradient(180deg,#b8b8bc 0 3px,transparent 3px 5px)"></div>
<div style="position:absolute;left:1749px;top:508px;width:1px;height:23px;background:repeating-linear-gradient(180deg,#b8b8bc 0 3px,transparent 3px 5px)"></div>
<div style="position:absolute;left:1829px;top:508px;width:1px;height:23px;background:repeating-linear-gradient(180deg,#b8b8bc 0 3px,transparent 3px 5px)"></div>
<div style="position:absolute;left:1108px;top:508px;width:1px;height:23px;background:#b8b8c0"></div>
<div style="position:absolute;left:1378px;top:508px;width:1px;height:23px;background:#b8b8c0"></div>
<div style="position:absolute;left:1648px;top:508px;width:1px;height:23px;background:#b8b8c0"></div>
<div style="position:absolute;left:1669px;top:508px;width:1px;height:23px;background:#b8b8c0"></div>
<div style="position:absolute;left:1670.0px;top:505.0px;width:78px;height:24px;line-height:24px;text-align:center;font-size:12px;color:#222;font-weight:normal;white-space:nowrap;">100</div>
<div style="position:absolute;left:1750.0px;top:505.0px;width:78px;height:24px;line-height:24px;text-align:center;font-size:12px;color:#222;font-weight:normal;white-space:nowrap;">100</div>
<div style="position:absolute;left:1830.0px;top:505.0px;width:78px;height:24px;line-height:24px;text-align:center;font-size:12px;color:#222;font-weight:normal;white-space:nowrap;">100</div>
<div style="position:absolute;left:838px;top:531px;width:1072px;height:23px;background:#2868b8"></div>
<div style="position:absolute;left:1669px;top:531px;width:1px;height:23px;background:rgba(255,255,255,0.25)"></div>
<div style="position:absolute;left:1670.0px;top:528.0px;width:78px;height:24px;line-height:24px;text-align:center;font-size:12px;color:#fff;font-weight:normal;white-space:nowrap;">77</div>
<div style="position:absolute;left:1750.0px;top:528.0px;width:78px;height:24px;line-height:24px;text-align:center;font-size:12px;color:#fff;font-weight:normal;white-space:nowrap;">77</div>
<div style="position:absolute;left:1830.0px;top:528.0px;width:78px;height:24px;line-height:24px;text-align:center;font-size:12px;color:#fff;font-weight:normal;white-space:nowrap;">77</div>
<div style="position:absolute;left:838px;top:554px;width:1072px;height:23px;background:#fff"></div>
<div style="position:absolute;left:1669px;top:554px;width:241px;height:23px;background:#f4f4f4"></div>
<div style="position:absolute;left:838px;top:576px;width:1072px;height:1px;background:repeating-linear-gradient(90deg,#b8b8bc 0 3px,transparent 3px 5px)"></div>
<div style="position:absolute;left:837px;top:554px;width:1px;height:23px;background:repeating-linear-gradient(180deg,#b8b8bc 0 3px,transparent 3px 5px)"></div>
<div style="position:absolute;left:927px;top:554px;width:1px;height:23px;background:repeating-linear-gradient(180deg,#b8b8bc 0 3px,transparent 3px 5px)"></div>
<div style="position:absolute;left:1017px;top:554px;width:1px;height:23px;background:repeating-linear-gradient(180deg,#b8b8bc 0 3px,transparent 3px 5px)"></div>
<div style="position:absolute;left:1108px;top:554px;width:1px;height:23px;background:repeating-linear-gradient(180deg,#b8b8bc 0 3px,transparent 3px 5px)"></div>
<div style="position:absolute;left:1198px;top:554px;width:1px;height:23px;background:repeating-linear-gradient(180deg,#b8b8bc 0 3px,transparent 3px 5px)"></div>
<div style="position:absolute;left:1288px;top:554px;width:1px;height:23px;background:repeating-linear-gradient(180deg,#b8b8bc 0 3px,transparent 3px 5px)"></div>
<div style="position:absolute;left:1378px;top:554px;width:1px;height:23px;background:repeating-linear-gradient(180deg,#b8b8bc 0 3px,transparent 3px 5px)"></div>
<div style="position:absolute;left:1468px;top:554px;width:1px;height:23px;background:repeating-linear-gradient(180deg,#b8b8bc 0 3px,transparent 3px 5px)"></div>
<div style="position:absolute;left:1558px;top:554px;width:1px;height:23px;background:repeating-linear-gradient(180deg,#b8b8bc 0 3px,transparent 3px 5px)"></div>
<div style="position:absolute;left:1749px;top:554px;width:1px;height:23px;background:repeating-linear-gradient(180deg,#b8b8bc 0 3px,transparent 3px 5px)"></div>
<div style="position:absolute;left:1829px;top:554px;width:1px;height:23px;background:repeating-linear-gradient(180deg,#b8b8bc 0 3px,transparent 3px 5px)"></div>
<div style="position:absolute;left:1108px;top:554px;width:1px;height:23px;background:#b8b8c0"></div>
<div style="position:absolute;left:1378px;top:554px;width:1px;height:23px;background:#b8b8c0"></div>
<div style="position:absolute;left:1648px;top:554px;width:1px;height:23px;background:#b8b8c0"></div>
<div style="position:absolute;left:1669px;top:554px;width:1px;height:23px;background:#b8b8c0"></div>
<div style="position:absolute;left:1670.0px;top:551.0px;width:78px;height:24px;line-height:24px;text-align:center;font-size:12px;color:#222;font-weight:normal;white-space:nowrap;">77</div>
<div style="position:absolute;left:1750.0px;top:551.0px;width:78px;height:24px;line-height:24px;text-align:center;font-size:12px;color:#222;font-weight:normal;white-space:nowrap;">77</div>
<div style="position:absolute;left:1830.0px;top:551.0px;width:78px;height:24px;line-height:24px;text-align:center;font-size:12px;color:#222;font-weight:normal;white-space:nowrap;">77</div>
<div style="position:absolute;left:1669px;top:90px;width:241px;height:50px;background:#fff"></div>
<div style="position:absolute;left:1669px;top:90px;width:1px;height:50px;background:#c8c8cc"></div>
<div style="position:absolute;left:1645.0px;top:91.0px;width:300px;height:23.0px;line-height:23.0px;text-align:center;font-size:11.5px;color:#222;font-weight:normal;white-space:nowrap;">Суммарно</div>
<div style="position:absolute;left:1670.0px;top:116.5px;width:78px;height:23.0px;line-height:23.0px;text-align:center;font-size:11.5px;color:#222;font-weight:normal;white-space:nowrap;">Согл.план</div>
<div style="position:absolute;left:1750.0px;top:116.5px;width:78px;height:23.0px;line-height:23.0px;text-align:center;font-size:11.5px;color:#222;font-weight:normal;white-space:nowrap;">Опер.план</div>
<div style="position:absolute;left:1830.0px;top:116.5px;width:78px;height:23.0px;line-height:23.0px;text-align:center;font-size:11.5px;color:#222;font-weight:normal;white-space:nowrap;">Факт</div>
<div style="position:absolute;left:1828px;top:115px;width:1px;height:25px;background:repeating-linear-gradient(180deg,#b8b8bc 0 3px,transparent 3px 5px)"></div>
<div style="position:absolute;left:1907px;top:115px;width:1px;height:25px;background:#c8c8cc"></div>
<div style="position:absolute;left:1669px;top:114px;width:241px;height:1px;background:#c8c8cc"></div>
<svg style="position:absolute;left:1878px;top:93px;" width="16" height="20" viewBox="0 0 16 20"><path d="M3.5 1.5l8.5 8.5-8.5 8.5" stroke="#3c3c40" stroke-width="1.8" fill="none"/></svg>
<div style="position:absolute;left:45px;top:597px;width:1873px;height:53px;background:#fff"></div>
<div style="position:absolute;left:45px;top:650px;width:1873px;height:1px;background:#b9b9be"></div>
<div style="position:absolute;left:8.0px;top:602.5px;width:300px;height:35.0px;line-height:35.0px;text-align:center;font-size:17.5px;color:#333;font-weight:normal;white-space:nowrap;">Карточка работы</div>
<div style="position:absolute;left:223.0px;top:602.5px;width:300px;height:35.0px;line-height:35.0px;text-align:center;font-size:17.5px;color:#333;font-weight:normal;white-space:nowrap;">Связи работы</div>
<div style="position:absolute;left:450.0px;top:602.5px;width:300px;height:35.0px;line-height:35.0px;text-align:center;font-size:17.5px;color:#333;font-weight:normal;white-space:nowrap;">Связанные графики</div>
<div style="position:absolute;left:674.0px;top:602.5px;width:300px;height:35.0px;line-height:35.0px;text-align:center;font-size:17.5px;color:#333;font-weight:normal;white-space:nowrap;">Справочники</div>
<div style="position:absolute;left:1405.0px;top:602.5px;width:300px;height:35.0px;line-height:35.0px;text-align:center;font-size:17.5px;color:#333;font-weight:normal;white-space:nowrap;">Документация</div>
<div style="position:absolute;left:1639.0px;top:602.5px;width:300px;height:35.0px;line-height:35.0px;text-align:center;font-size:17.5px;color:#333;font-weight:normal;white-space:nowrap;">Запросы и поручения</div>
<div style="position:absolute;left:45px;top:651px;width:1873px;height:42px;background:#efeff2"></div>
<div style="position:absolute;left:45px;top:693px;width:1873px;height:1px;background:#b9b9be"></div>
<div style="position:absolute;left:296px;top:651px;width:43px;height:42px;background:#e0e0e3"></div>
<div style="position:absolute;left:45px;top:694px;width:1873px;height:207px;background:#fff"></div>
<div style="position:absolute;left:45px;top:694px;width:801px;height:24px;background:#efeff2"></div>
<div style="position:absolute;left:45px;top:718px;width:800px;height:25px;background:#efeff2"></div>
<div style="position:absolute;left:45px;top:718px;width:800px;height:1px;background:#c8c8cc"></div>
<div style="position:absolute;left:45px;top:743px;width:800px;height:1px;background:#c8c8cc"></div>
<div style="position:absolute;left:184px;top:718px;width:1px;height:157px;background:#c8c8cc"></div>
<div style="position:absolute;left:304px;top:718px;width:1px;height:157px;background:#c8c8cc"></div>
<div style="position:absolute;left:424px;top:718px;width:1px;height:157px;background:#c8c8cc"></div>
<div style="position:absolute;left:524px;top:718px;width:1px;height:157px;background:#c8c8cc"></div>
<div style="position:absolute;left:624px;top:718px;width:1px;height:157px;background:#c8c8cc"></div>
<div style="position:absolute;left:744px;top:718px;width:1px;height:157px;background:#c8c8cc"></div>
<div style="position:absolute;left:845px;top:718px;width:1px;height:157px;background:#c8c8cc"></div>
<div style="position:absolute;left:845px;top:718px;width:1px;height:183px;background:#c8c8cc"></div>
<div style="position:absolute;left:47.0px;top:720px;width:135px;height:24px;line-height:24px;text-align:center;font-size:12px;color:#222;font-weight:normal;white-space:nowrap;">Тип</div>
<div style="position:absolute;left:186.0px;top:720px;width:116px;height:24px;line-height:24px;text-align:center;font-size:12px;color:#222;font-weight:normal;white-space:nowrap;">Наименование</div>
<div style="position:absolute;left:306.0px;top:720px;width:116px;height:24px;line-height:24px;text-align:center;font-size:12px;color:#222;font-weight:normal;white-space:nowrap;">План</div>
<div style="position:absolute;left:426.0px;top:720px;width:96px;height:24px;line-height:24px;text-align:center;font-size:12px;color:#222;font-weight:normal;white-space:nowrap;">Факт</div>
<div style="position:absolute;left:526.0px;top:720px;width:96px;height:24px;line-height:24px;text-align:center;font-size:12px;color:#222;font-weight:normal;white-space:nowrap;">Остаток</div>
<div style="position:absolute;left:626.0px;top:720px;width:116px;height:24px;line-height:24px;text-align:center;font-size:12px;color:#222;font-weight:normal;white-space:nowrap;">Нераспределенн...</div>
<div style="position:absolute;left:746.0px;top:720px;width:97px;height:24px;line-height:24px;text-align:center;font-size:12px;color:#222;font-weight:normal;white-space:nowrap;">Долг</div>
<div style="position:absolute;left:45px;top:787px;width:800px;height:1px;background:#c8c8cc"></div>
<div style="position:absolute;left:80px;top:754px;height:24px;line-height:24px;font-size:12px;color:#222;font-weight:normal;white-space:nowrap;">Физобъем</div>
<div style="position:absolute;left:195px;top:754px;width:109px;overflow:hidden;height:24px;line-height:24px;font-size:12px;color:#222;white-space:nowrap">Устройство буронаб</div>
<div style="position:absolute;left:310.0px;top:754px;width:110px;height:24px;line-height:24px;text-align:center;font-size:12px;color:#222;font-weight:normal;white-space:nowrap;">25</div>
<div style="position:absolute;left:430.0px;top:754px;width:90px;height:24px;line-height:24px;text-align:center;font-size:12px;color:#222;font-weight:normal;white-space:nowrap;">25</div>
<div style="position:absolute;left:529.0px;top:754px;width:90px;height:24px;line-height:24px;text-align:center;font-size:12px;color:#222;font-weight:normal;white-space:nowrap;">0</div>
<div style="position:absolute;left:639.0px;top:754px;width:90px;height:24px;line-height:24px;text-align:center;font-size:12px;color:#222;font-weight:normal;white-space:nowrap;">0</div>
<div style="position:absolute;left:749.5px;top:754px;width:90px;height:24px;line-height:24px;text-align:center;font-size:12px;color:#222;font-weight:normal;white-space:nowrap;">0</div>
<div style="position:absolute;left:45px;top:831px;width:800px;height:1px;background:#c8c8cc"></div>
<div style="position:absolute;left:80px;top:798px;height:24px;line-height:24px;font-size:12px;color:#222;font-weight:normal;white-space:nowrap;">Трудозатраты</div>
<div style="position:absolute;left:310.0px;top:798px;width:110px;height:24px;line-height:24px;text-align:center;font-size:12px;color:#222;font-weight:normal;white-space:nowrap;">150</div>
<div style="position:absolute;left:430.0px;top:798px;width:90px;height:24px;line-height:24px;text-align:center;font-size:12px;color:#222;font-weight:normal;white-space:nowrap;">150</div>
<div style="position:absolute;left:529.0px;top:798px;width:90px;height:24px;line-height:24px;text-align:center;font-size:12px;color:#222;font-weight:normal;white-space:nowrap;">0</div>
<div style="position:absolute;left:639.0px;top:798px;width:90px;height:24px;line-height:24px;text-align:center;font-size:12px;color:#222;font-weight:normal;white-space:nowrap;">0</div>
<div style="position:absolute;left:749.5px;top:798px;width:90px;height:24px;line-height:24px;text-align:center;font-size:12px;color:#222;font-weight:normal;white-space:nowrap;">0</div>
<div style="position:absolute;left:45px;top:875px;width:800px;height:1px;background:#c8c8cc"></div>
<div style="position:absolute;left:80px;top:842px;height:24px;line-height:24px;font-size:12px;color:#222;font-weight:normal;white-space:nowrap;">Стоимость</div>
<div style="position:absolute;left:310.0px;top:842px;width:110px;height:24px;line-height:24px;text-align:center;font-size:12px;color:#222;font-weight:normal;white-space:nowrap;">114 750</div>
<div style="position:absolute;left:430.0px;top:842px;width:90px;height:24px;line-height:24px;text-align:center;font-size:12px;color:#222;font-weight:normal;white-space:nowrap;">114 750</div>
<div style="position:absolute;left:529.0px;top:842px;width:90px;height:24px;line-height:24px;text-align:center;font-size:12px;color:#222;font-weight:normal;white-space:nowrap;">0</div>
<div style="position:absolute;left:639.0px;top:842px;width:90px;height:24px;line-height:24px;text-align:center;font-size:12px;color:#222;font-weight:normal;white-space:nowrap;">0</div>
<div style="position:absolute;left:749.5px;top:842px;width:90px;height:24px;line-height:24px;text-align:center;font-size:12px;color:#222;font-weight:normal;white-space:nowrap;">0</div>
<div style="position:absolute;left:846px;top:694px;width:1072px;height:49px;background:#efeff2"></div>
<div style="position:absolute;left:846px;top:718px;width:1072px;height:1px;background:#c8c8cc"></div>
<div style="position:absolute;left:846px;top:743px;width:1072px;height:1px;background:#c8c8cc"></div>
<div style="position:absolute;left:846px;top:743px;width:1072px;height:132px;background:#c5dcf0"></div>
<div style="position:absolute;left:846px;top:694px;width:1072px;height:207px;overflow:hidden">
<div style="position:absolute;left:24.80000000000001px;top:0.5px;width:300px;height:23.0px;line-height:23.0px;text-align:center;font-size:11.5px;color:#222;font-weight:normal;white-space:nowrap;">17.10.2025</div>
<div style="position:absolute;left:0.6400000000000219px;top:25.5px;width:68px;height:23.0px;line-height:23.0px;text-align:center;font-size:11.5px;color:#222;font-weight:normal;white-space:nowrap;">Согл.план</div>
<div style="position:absolute;left:70.72000000000003px;top:25.5px;width:68px;height:23.0px;line-height:23.0px;text-align:center;font-size:11.5px;color:#222;font-weight:normal;white-space:nowrap;">Опер.план</div>
<div style="position:absolute;left:70px;top:24px;width:1px;height:157px;background:repeating-linear-gradient(180deg,#a8a8b0 0 3px,transparent 3px 5px)"></div>
<div style="position:absolute;left:140.8px;top:25.5px;width:68px;height:23.0px;line-height:23.0px;text-align:center;font-size:11.5px;color:#222;font-weight:normal;white-space:nowrap;">Факт</div>
<div style="position:absolute;left:140px;top:24px;width:1px;height:157px;background:repeating-linear-gradient(180deg,#a8a8b0 0 3px,transparent 3px 5px)"></div>
<div style="position:absolute;left:210.88000000000002px;top:25.5px;width:68px;height:23.0px;line-height:23.0px;text-align:center;font-size:11.5px;color:#222;font-weight:normal;white-space:nowrap;">Уд. трудоз...</div>
<div style="position:absolute;left:210px;top:24px;width:1px;height:157px;background:repeating-linear-gradient(180deg,#a8a8b0 0 3px,transparent 3px 5px)"></div>
<div style="position:absolute;left:280.96000000000004px;top:25.5px;width:68px;height:23.0px;line-height:23.0px;text-align:center;font-size:11.5px;color:#222;font-weight:normal;white-space:nowrap;">Ставка</div>
<div style="position:absolute;left:280px;top:24px;width:1px;height:157px;background:repeating-linear-gradient(180deg,#a8a8b0 0 3px,transparent 3px 5px)"></div>
<div style="position:absolute;left:2.640000000000022px;top:59px;width:68px;height:24px;line-height:24px;text-align:center;font-size:12px;color:#707076;font-weight:normal;white-space:nowrap;">5</div>
<div style="position:absolute;left:72.72000000000003px;top:59px;width:68px;height:24px;line-height:24px;text-align:center;font-size:12px;color:#707076;font-weight:normal;white-space:nowrap;">5</div>
<div style="position:absolute;left:142.8px;top:59px;width:68px;height:24px;line-height:24px;text-align:center;font-size:12px;color:#5cc67c;font-weight:normal;white-space:nowrap;">5</div>
<div style="position:absolute;left:212.88000000000002px;top:59px;width:68px;height:24px;line-height:24px;text-align:center;font-size:12px;color:#707076;font-weight:normal;white-space:nowrap;">6</div>
<div style="position:absolute;left:282.96000000000004px;top:59px;width:68px;height:24px;line-height:24px;text-align:center;font-size:12px;color:#707076;font-weight:normal;white-space:nowrap;">4 590</div>
<svg style="position:absolute;left:140px;top:49px;" width="20" height="19" viewBox="0 0 20 19"><path d="M0 0H20L0 19Z" fill="#74cb94"/></svg>
<div style="position:absolute;left:2.640000000000022px;top:103px;width:68px;height:24px;line-height:24px;text-align:center;font-size:12px;color:#707076;font-weight:normal;white-space:nowrap;">25</div>
<div style="position:absolute;left:72.72000000000003px;top:103px;width:68px;height:24px;line-height:24px;text-align:center;font-size:12px;color:#707076;font-weight:normal;white-space:nowrap;">25</div>
<div style="position:absolute;left:142.8px;top:103px;width:68px;height:24px;line-height:24px;text-align:center;font-size:12px;color:#5cc67c;font-weight:normal;white-space:nowrap;">25</div>
<div style="position:absolute;left:212.88000000000002px;top:103px;width:68px;height:24px;line-height:24px;text-align:center;font-size:12px;color:#707076;font-weight:normal;white-space:nowrap;">6</div>
<div style="position:absolute;left:282.96000000000004px;top:103px;width:68px;height:24px;line-height:24px;text-align:center;font-size:12px;color:#707076;font-weight:normal;white-space:nowrap;">4 590</div>
<svg style="position:absolute;left:140px;top:93px;" width="20" height="19" viewBox="0 0 20 19"><path d="M0 0H20L0 19Z" fill="#74cb94"/></svg>
<div style="position:absolute;left:2.640000000000022px;top:147px;width:68px;height:24px;line-height:24px;text-align:center;font-size:12px;color:#707076;font-weight:normal;white-space:nowrap;">19 125</div>
<div style="position:absolute;left:72.72000000000003px;top:147px;width:68px;height:24px;line-height:24px;text-align:center;font-size:12px;color:#707076;font-weight:normal;white-space:nowrap;">19 125</div>
<div style="position:absolute;left:142.8px;top:147px;width:68px;height:24px;line-height:24px;text-align:center;font-size:12px;color:#5cc67c;font-weight:normal;white-space:nowrap;">19 125</div>
<div style="position:absolute;left:212.88000000000002px;top:147px;width:68px;height:24px;line-height:24px;text-align:center;font-size:12px;color:#707076;font-weight:normal;white-space:nowrap;">6</div>
<div style="position:absolute;left:282.96000000000004px;top:147px;width:68px;height:24px;line-height:24px;text-align:center;font-size:12px;color:#707076;font-weight:normal;white-space:nowrap;">4 590</div>
<svg style="position:absolute;left:140px;top:137px;" width="20" height="19" viewBox="0 0 20 19"><path d="M0 0H20L0 19Z" fill="#74cb94"/></svg>
<div style="position:absolute;left:375.20000000000005px;top:0.5px;width:300px;height:23.0px;line-height:23.0px;text-align:center;font-size:11.5px;color:#222;font-weight:normal;white-space:nowrap;">18.10.2025</div>
<div style="position:absolute;left:350px;top:0px;width:1px;height:181px;background:#b8b8c0"></div>
<div style="position:absolute;left:351.04px;top:25.5px;width:68px;height:23.0px;line-height:23.0px;text-align:center;font-size:11.5px;color:#222;font-weight:normal;white-space:nowrap;">Согл.план</div>
<div style="position:absolute;left:421.12px;top:25.5px;width:68px;height:23.0px;line-height:23.0px;text-align:center;font-size:11.5px;color:#222;font-weight:normal;white-space:nowrap;">Опер.план</div>
<div style="position:absolute;left:420px;top:24px;width:1px;height:157px;background:repeating-linear-gradient(180deg,#a8a8b0 0 3px,transparent 3px 5px)"></div>
<div style="position:absolute;left:491.20000000000005px;top:25.5px;width:68px;height:23.0px;line-height:23.0px;text-align:center;font-size:11.5px;color:#222;font-weight:normal;white-space:nowrap;">Факт</div>
<div style="position:absolute;left:490px;top:24px;width:1px;height:157px;background:repeating-linear-gradient(180deg,#a8a8b0 0 3px,transparent 3px 5px)"></div>
<div style="position:absolute;left:561.28px;top:25.5px;width:68px;height:23.0px;line-height:23.0px;text-align:center;font-size:11.5px;color:#222;font-weight:normal;white-space:nowrap;">Уд. трудоз...</div>
<div style="position:absolute;left:560px;top:24px;width:1px;height:157px;background:repeating-linear-gradient(180deg,#a8a8b0 0 3px,transparent 3px 5px)"></div>
<div style="position:absolute;left:631.36px;top:25.5px;width:68px;height:23.0px;line-height:23.0px;text-align:center;font-size:11.5px;color:#222;font-weight:normal;white-space:nowrap;">Ставка</div>
<div style="position:absolute;left:630px;top:24px;width:1px;height:157px;background:repeating-linear-gradient(180deg,#a8a8b0 0 3px,transparent 3px 5px)"></div>
<div style="position:absolute;left:353.04px;top:59px;width:68px;height:24px;line-height:24px;text-align:center;font-size:12px;color:#707076;font-weight:normal;white-space:nowrap;">5</div>
<div style="position:absolute;left:423.12px;top:59px;width:68px;height:24px;line-height:24px;text-align:center;font-size:12px;color:#707076;font-weight:normal;white-space:nowrap;">5</div>
<div style="position:absolute;left:493.20000000000005px;top:59px;width:68px;height:24px;line-height:24px;text-align:center;font-size:12px;color:#5cc67c;font-weight:normal;white-space:nowrap;">5</div>
<div style="position:absolute;left:563.28px;top:59px;width:68px;height:24px;line-height:24px;text-align:center;font-size:12px;color:#707076;font-weight:normal;white-space:nowrap;">6</div>
<div style="position:absolute;left:633.36px;top:59px;width:68px;height:24px;line-height:24px;text-align:center;font-size:12px;color:#707076;font-weight:normal;white-space:nowrap;">4 590</div>
<svg style="position:absolute;left:490px;top:49px;" width="20" height="19" viewBox="0 0 20 19"><path d="M0 0H20L0 19Z" fill="#74cb94"/></svg>
<div style="position:absolute;left:353.04px;top:103px;width:68px;height:24px;line-height:24px;text-align:center;font-size:12px;color:#707076;font-weight:normal;white-space:nowrap;">25</div>
<div style="position:absolute;left:423.12px;top:103px;width:68px;height:24px;line-height:24px;text-align:center;font-size:12px;color:#707076;font-weight:normal;white-space:nowrap;">25</div>
<div style="position:absolute;left:493.20000000000005px;top:103px;width:68px;height:24px;line-height:24px;text-align:center;font-size:12px;color:#5cc67c;font-weight:normal;white-space:nowrap;">25</div>
<div style="position:absolute;left:563.28px;top:103px;width:68px;height:24px;line-height:24px;text-align:center;font-size:12px;color:#707076;font-weight:normal;white-space:nowrap;">6</div>
<div style="position:absolute;left:633.36px;top:103px;width:68px;height:24px;line-height:24px;text-align:center;font-size:12px;color:#707076;font-weight:normal;white-space:nowrap;">4 590</div>
<svg style="position:absolute;left:490px;top:93px;" width="20" height="19" viewBox="0 0 20 19"><path d="M0 0H20L0 19Z" fill="#74cb94"/></svg>
<div style="position:absolute;left:353.04px;top:147px;width:68px;height:24px;line-height:24px;text-align:center;font-size:12px;color:#707076;font-weight:normal;white-space:nowrap;">19 125</div>
<div style="position:absolute;left:423.12px;top:147px;width:68px;height:24px;line-height:24px;text-align:center;font-size:12px;color:#707076;font-weight:normal;white-space:nowrap;">19 125</div>
<div style="position:absolute;left:493.20000000000005px;top:147px;width:68px;height:24px;line-height:24px;text-align:center;font-size:12px;color:#5cc67c;font-weight:normal;white-space:nowrap;">19 125</div>
<div style="position:absolute;left:563.28px;top:147px;width:68px;height:24px;line-height:24px;text-align:center;font-size:12px;color:#707076;font-weight:normal;white-space:nowrap;">6</div>
<div style="position:absolute;left:633.36px;top:147px;width:68px;height:24px;line-height:24px;text-align:center;font-size:12px;color:#707076;font-weight:normal;white-space:nowrap;">4 590</div>
<svg style="position:absolute;left:490px;top:137px;" width="20" height="19" viewBox="0 0 20 19"><path d="M0 0H20L0 19Z" fill="#74cb94"/></svg>
<div style="position:absolute;left:725.6000000000001px;top:0.5px;width:300px;height:23.0px;line-height:23.0px;text-align:center;font-size:11.5px;color:#222;font-weight:normal;white-space:nowrap;">19.10.2025</div>
<div style="position:absolute;left:700px;top:0px;width:1px;height:181px;background:#b8b8c0"></div>
<div style="position:absolute;left:701.44px;top:25.5px;width:68px;height:23.0px;line-height:23.0px;text-align:center;font-size:11.5px;color:#222;font-weight:normal;white-space:nowrap;">Согл.план</div>
<div style="position:absolute;left:771.5200000000001px;top:25.5px;width:68px;height:23.0px;line-height:23.0px;text-align:center;font-size:11.5px;color:#222;font-weight:normal;white-space:nowrap;">Опер.план</div>
<div style="position:absolute;left:770px;top:24px;width:1px;height:157px;background:repeating-linear-gradient(180deg,#a8a8b0 0 3px,transparent 3px 5px)"></div>
<div style="position:absolute;left:841.6px;top:25.5px;width:68px;height:23.0px;line-height:23.0px;text-align:center;font-size:11.5px;color:#222;font-weight:normal;white-space:nowrap;">Факт</div>
<div style="position:absolute;left:841px;top:24px;width:1px;height:157px;background:repeating-linear-gradient(180deg,#a8a8b0 0 3px,transparent 3px 5px)"></div>
<div style="position:absolute;left:911.6800000000001px;top:25.5px;width:68px;height:23.0px;line-height:23.0px;text-align:center;font-size:11.5px;color:#222;font-weight:normal;white-space:nowrap;">Уд. трудоз...</div>
<div style="position:absolute;left:911px;top:24px;width:1px;height:157px;background:repeating-linear-gradient(180deg,#a8a8b0 0 3px,transparent 3px 5px)"></div>
<div style="position:absolute;left:981.76px;top:25.5px;width:68px;height:23.0px;line-height:23.0px;text-align:center;font-size:11.5px;color:#222;font-weight:normal;white-space:nowrap;">Ставка</div>
<div style="position:absolute;left:981px;top:24px;width:1px;height:157px;background:repeating-linear-gradient(180deg,#a8a8b0 0 3px,transparent 3px 5px)"></div>
<div style="position:absolute;left:703.44px;top:59px;width:68px;height:24px;line-height:24px;text-align:center;font-size:12px;color:#707076;font-weight:normal;white-space:nowrap;">5</div>
<div style="position:absolute;left:773.5200000000001px;top:59px;width:68px;height:24px;line-height:24px;text-align:center;font-size:12px;color:#707076;font-weight:normal;white-space:nowrap;">5</div>
<div style="position:absolute;left:843.6px;top:59px;width:68px;height:24px;line-height:24px;text-align:center;font-size:12px;color:#5cc67c;font-weight:normal;white-space:nowrap;">5</div>
<div style="position:absolute;left:913.6800000000001px;top:59px;width:68px;height:24px;line-height:24px;text-align:center;font-size:12px;color:#707076;font-weight:normal;white-space:nowrap;">6</div>
<div style="position:absolute;left:983.76px;top:59px;width:68px;height:24px;line-height:24px;text-align:center;font-size:12px;color:#707076;font-weight:normal;white-space:nowrap;">4 590</div>
<svg style="position:absolute;left:841px;top:49px;" width="20" height="19" viewBox="0 0 20 19"><path d="M0 0H20L0 19Z" fill="#74cb94"/></svg>
<div style="position:absolute;left:703.44px;top:103px;width:68px;height:24px;line-height:24px;text-align:center;font-size:12px;color:#707076;font-weight:normal;white-space:nowrap;">25</div>
<div style="position:absolute;left:773.5200000000001px;top:103px;width:68px;height:24px;line-height:24px;text-align:center;font-size:12px;color:#707076;font-weight:normal;white-space:nowrap;">25</div>
<div style="position:absolute;left:843.6px;top:103px;width:68px;height:24px;line-height:24px;text-align:center;font-size:12px;color:#5cc67c;font-weight:normal;white-space:nowrap;">25</div>
<div style="position:absolute;left:913.6800000000001px;top:103px;width:68px;height:24px;line-height:24px;text-align:center;font-size:12px;color:#707076;font-weight:normal;white-space:nowrap;">6</div>
<div style="position:absolute;left:983.76px;top:103px;width:68px;height:24px;line-height:24px;text-align:center;font-size:12px;color:#707076;font-weight:normal;white-space:nowrap;">4 590</div>
<svg style="position:absolute;left:841px;top:93px;" width="20" height="19" viewBox="0 0 20 19"><path d="M0 0H20L0 19Z" fill="#74cb94"/></svg>
<div style="position:absolute;left:703.44px;top:147px;width:68px;height:24px;line-height:24px;text-align:center;font-size:12px;color:#707076;font-weight:normal;white-space:nowrap;">19 125</div>
<div style="position:absolute;left:773.5200000000001px;top:147px;width:68px;height:24px;line-height:24px;text-align:center;font-size:12px;color:#707076;font-weight:normal;white-space:nowrap;">19 125</div>
<div style="position:absolute;left:843.6px;top:147px;width:68px;height:24px;line-height:24px;text-align:center;font-size:12px;color:#5cc67c;font-weight:normal;white-space:nowrap;">19 125</div>
<div style="position:absolute;left:913.6800000000001px;top:147px;width:68px;height:24px;line-height:24px;text-align:center;font-size:12px;color:#707076;font-weight:normal;white-space:nowrap;">6</div>
<div style="position:absolute;left:983.76px;top:147px;width:68px;height:24px;line-height:24px;text-align:center;font-size:12px;color:#707076;font-weight:normal;white-space:nowrap;">4 590</div>
<svg style="position:absolute;left:841px;top:137px;" width="20" height="19" viewBox="0 0 20 19"><path d="M0 0H20L0 19Z" fill="#74cb94"/></svg>
<div style="position:absolute;left:1051px;top:0px;width:1px;height:181px;background:#b8b8c0"></div>
<div style="position:absolute;left:1051.8399999999997px;top:25.5px;width:68px;height:23.0px;line-height:23.0px;text-align:center;font-size:11.5px;color:#222;font-weight:normal;white-space:nowrap;">Согл.план</div>
<div style="position:absolute;left:1053.8399999999997px;top:59px;width:68px;height:24px;line-height:24px;text-align:center;font-size:12px;color:#707076;font-weight:normal;white-space:nowrap;">5</div>
<svg style="position:absolute;left:1191px;top:49px;" width="20" height="19" viewBox="0 0 20 19"><path d="M0 0H20L0 19Z" fill="#74cb94"/></svg>
<div style="position:absolute;left:1053.8399999999997px;top:103px;width:68px;height:24px;line-height:24px;text-align:center;font-size:12px;color:#707076;font-weight:normal;white-space:nowrap;">25</div>
<svg style="position:absolute;left:1191px;top:93px;" width="20" height="19" viewBox="0 0 20 19"><path d="M0 0H20L0 19Z" fill="#74cb94"/></svg>
<div style="position:absolute;left:1053.8399999999997px;top:147px;width:68px;height:24px;line-height:24px;text-align:center;font-size:12px;color:#707076;font-weight:normal;white-space:nowrap;">19 125</div>
<svg style="position:absolute;left:1191px;top:137px;" width="20" height="19" viewBox="0 0 20 19"><path d="M0 0H20L0 19Z" fill="#74cb94"/></svg>
<div style="position:absolute;left:0px;top:93px;width:1072px;height:1px;background:repeating-linear-gradient(90deg,#a8a8b0 0 3px,transparent 3px 5px)"></div>
<div style="position:absolute;left:0px;top:137px;width:1072px;height:1px;background:repeating-linear-gradient(90deg,#a8a8b0 0 3px,transparent 3px 5px)"></div>
<div style="position:absolute;left:0px;top:181px;width:1072px;height:1px;background:repeating-linear-gradient(90deg,#a8a8b0 0 3px,transparent 3px 5px)"></div>
</div>
<div style="position:absolute;left:845px;top:718px;width:1px;height:183px;background:#c8c8cc"></div>
<div style="position:absolute;left:45px;top:901px;width:1873px;height:11px;background:#efeff2"></div>
<div style="position:absolute;left:297px;top:902px;width:34px;height:10px;background:#d9d9dc;border-radius:5px"></div>
<div style="position:absolute;left:133px;top:0px;width:1px;height:44px;background:#c8c8cc"></div>
<div style="position:absolute;left:531px;top:0px;width:1px;height:44px;background:#c8c8cc"></div>
<div style="position:absolute;left:708px;top:0px;width:1px;height:44px;background:#c8c8cc"></div>
<div style="position:absolute;left:753px;top:0px;width:1px;height:44px;background:#c8c8cc"></div>
<div style="position:absolute;left:1699px;top:0px;width:1px;height:44px;background:#c8c8cc"></div>
<div style="position:absolute;left:1744px;top:0px;width:1px;height:44px;background:#c8c8cc"></div>
<div style="position:absolute;left:1789px;top:0px;width:1px;height:44px;background:#c8c8cc"></div>
<svg style="position:absolute;left:55.0px;top:11.0px;" width="24" height="24" viewBox="0 0 24 24"><g fill="none" stroke="#45454a" stroke-width="2" stroke-linecap="round" stroke-linejoin="round"><path d="M1.5 8H16.5a6 6 0 0 1 0 12H10.5"/><path d="M6 3.5L1.5 8L6 12.5"/></g></svg>
<svg style="position:absolute;left:99.0px;top:11.0px;" width="24" height="24" viewBox="0 0 24 24"><g fill="none" stroke="#45454a" stroke-width="2" stroke-linecap="round" stroke-linejoin="round"><rect x="4" y="1" width="16" height="22" rx="2.5"/><rect x="6.5" y="4" width="11" height="3" fill="#45454a" stroke="none"/><g fill="#45454a" stroke="none"><rect x="7" y="10" width="2" height="2"/><rect x="11" y="10" width="2" height="2"/><rect x="15" y="10" width="2" height="2"/><rect x="7" y="14" width="2" height="2"/><rect x="11" y="14" width="2" height="2"/><rect x="15" y="14" width="2" height="2"/><rect x="7" y="18" width="6" height="2"/><rect x="15" y="18" width="2" height="2"/></g></g></svg>
<svg style="position:absolute;left:143.0px;top:11.0px;" width="24" height="24" viewBox="0 0 24 24"><g fill="none" stroke="#45454a" stroke-width="2" stroke-linecap="round" stroke-linejoin="round"><rect x="1.5" y="0.5" width="10" height="10" rx="2.5"/><path d="M6.5 3V8M4 5.5H9" stroke-width="1.8"/><path d="M6.5 10.5V17"/><rect x="3.5" y="17" width="6" height="6" rx="1.5"/><rect x="18" y="17" width="6" height="6" rx="1.5"/><path d="M9.5 20H18"/></g></svg>
<svg style="position:absolute;left:187.0px;top:11.0px;" width="24" height="24" viewBox="0 0 24 24"><g fill="none" stroke="#c6c6cb" stroke-width="2" stroke-linecap="round" stroke-linejoin="round"><rect x="1.5" y="0.5" width="6" height="6" rx="1.5"/><path d="M4.5 6.5V15.5"/><rect x="1.5" y="15.5" width="6" height="6" rx="1.5"/><path d="M7.5 18.5H14.5"/><rect x="14.5" y="13.5" width="9" height="9.5" rx="2"/><path d="M19 15.5V21M16.3 18.2H21.7" stroke-width="1.6"/></g></svg>
<svg style="position:absolute;left:232.0px;top:11.0px;" width="24" height="24" viewBox="0 0 24 24"><g fill="none" stroke="#45454a" stroke-width="2" stroke-linecap="round" stroke-linejoin="round"><path d="M18 0.5V11.5M12.5 6H23.5"/><rect x="0" y="18.5" width="23" height="5" rx="2.5"/></g></svg>
<svg style="position:absolute;left:276.0px;top:11.0px;" width="24" height="24" viewBox="0 0 24 24"><g fill="none" stroke="#45454a" stroke-width="2" stroke-linecap="round" stroke-linejoin="round"><rect x="3.5" y="3.5" width="7.5" height="7.5" rx="1"/><path d="M6 1H12.5a1 1 0 0 1 1 1V8.5"/><rect x="0" y="18.5" width="23" height="5" rx="2.5"/></g></svg>
<svg style="position:absolute;left:320.0px;top:11.0px;" width="24" height="24" viewBox="0 0 24 24"><g fill="none" stroke="#45454a" stroke-width="2" stroke-linecap="round" stroke-linejoin="round"><rect x="1" y="5" width="18" height="18" rx="2"/><path d="M5 1H21a2 2 0 0 1 2 2V19"/></g></svg>
<svg style="position:absolute;left:364.0px;top:11.0px;" width="24" height="24" viewBox="0 0 24 24"><g fill="none" stroke="#45454a" stroke-width="2" stroke-linecap="round" stroke-linejoin="round"><circle cx="5.5" cy="19" r="3.8"/><circle cx="19" cy="19" r="3.8"/><path d="M7.5 15.8L20 0.5M17 15.8L4.5 0.5"/></g></svg>
<svg style="position:absolute;left:408.0px;top:11.0px;" width="24" height="24" viewBox="0 0 24 24"><g fill="none" stroke="#c6c6cb" stroke-width="2" stroke-linecap="round" stroke-linejoin="round"><path d="M6 2.5H3.5a1.5 1.5 0 0 0-1.5 1.5V21.5a1.5 1.5 0 0 0 1.5 1.5H19.5a1.5 1.5 0 0 0 1.5-1.5V4a1.5 1.5 0 0 0-1.5-1.5H17"/><rect x="6" y="0" width="11" height="7" fill="#c6c6cb" stroke="none"/></g></svg>
<svg style="position:absolute;left:452.0px;top:11.0px;" width="24" height="24" viewBox="0 0 24 24"><g fill="none" stroke="#45454a" stroke-width="2" stroke-linecap="round" stroke-linejoin="round"><path d="M22.5 2.5L17 8" stroke-width="3.4" stroke-linecap="butt"/><path d="M12.5 5.5Q8 10.5 1.5 13.5L9.5 21.5Q15.5 19 21 13.5Z" stroke-width="2"/><path d="M1.5 13.5L9.5 21.5Q8 18.5 4.5 16.5Z" fill="#45454a"/></g></svg>
<svg style="position:absolute;left:496.0px;top:11.0px;" width="24" height="24" viewBox="0 0 24 24"><g fill="none" stroke="#45454a" stroke-width="2" stroke-linecap="round" stroke-linejoin="round"><path d="M1 4.2H23"/><path d="M6.5 4Q7 0.8 12 0.8Q17 0.8 17.5 4Z" fill="#45454a"/><path d="M4.5 7.5V21a2.5 2.5 0 0 0 2.5 2.5H17a2.5 2.5 0 0 0 2.5-2.5V7.5"/></g></svg>
<svg style="position:absolute;left:541.5px;top:11.0px;" width="24" height="24" viewBox="0 0 24 24"><g fill="none" stroke="#45454a" stroke-width="2" stroke-linecap="round" stroke-linejoin="round"><path d="M12 1V23M4.5 8.5L12 1L19.5 8.5"/></g></svg>
<svg style="position:absolute;left:585.5px;top:11.0px;" width="24" height="24" viewBox="0 0 24 24"><g fill="none" stroke="#45454a" stroke-width="2" stroke-linecap="round" stroke-linejoin="round"><path d="M12 1V23M4.5 15.5L12 23L19.5 15.5"/></g></svg>
<svg style="position:absolute;left:629.5px;top:11.0px;" width="24" height="24" viewBox="0 0 24 24"><g fill="none" stroke="#45454a" stroke-width="2" stroke-linecap="round" stroke-linejoin="round"><path d="M0.5 12H23.5M7.5 5L0.5 12L7.5 19"/></g></svg>
<svg style="position:absolute;left:673.5px;top:11.0px;" width="24" height="24" viewBox="0 0 24 24"><g fill="none" stroke="#45454a" stroke-width="2" stroke-linecap="round" stroke-linejoin="round"><path d="M0.5 12H23.5M16.5 5L23.5 12L16.5 19"/></g></svg>
<svg style="position:absolute;left:718.5px;top:11.0px;" width="24" height="24" viewBox="0 0 24 24"><g fill="none" stroke="#45454a" stroke-width="2" stroke-linecap="round" stroke-linejoin="round"><path d="M18.5 10.5h-3.5v-3.5l3.8-3.8a6.5 6.5 0 0 0-8.3 8.3l-7.3 7.3a2.3 2.3 0 0 0 3.3 3.3l7.3-7.3a6.5 6.5 0 0 0 8.3-8.3Z"/></g></svg>
<svg style="position:absolute;left:736.5px;top:31.5px;" width="7" height="4" viewBox="0 0 7 4"><path d="M0 0H7L3.5 4Z" fill="#45454a"/></svg>
<svg style="position:absolute;left:763.5px;top:11.0px;" width="24" height="24" viewBox="0 0 24 24"><g fill="none" stroke="#45454a" stroke-width="2" stroke-linecap="round" stroke-linejoin="round"><path d="M23.50 12.00L23.33 12.74L22.85 13.43L22.13 14.01L21.27 14.48L20.40 14.85L19.63 15.16L19.04 15.47L18.67 15.85L18.52 16.36L18.55 17.03L18.67 17.85L18.79 18.79L18.81 19.76L18.66 20.68L18.31 21.44L17.75 21.96L17.02 22.18L16.19 22.11L15.32 21.78L14.48 21.27L13.73 20.70L13.08 20.19L12.51 19.83L12.00 19.70L11.49 19.83L10.92 20.19L10.27 20.70L9.52 21.27L8.68 21.78L7.81 22.11L6.98 22.18L6.25 21.96L5.69 21.44L5.34 20.68L5.19 19.76L5.21 18.79L5.33 17.85L5.45 17.03L5.48 16.36L5.33 15.85L4.96 15.47L4.37 15.16L3.60 14.85L2.73 14.48L1.87 14.01L1.15 13.43L0.67 12.74L0.50 12.00L0.67 11.26L1.15 10.57L1.87 9.99L2.73 9.52L3.60 9.15L4.37 8.84L4.96 8.53L5.33 8.15L5.48 7.64L5.45 6.97L5.33 6.15L5.21 5.21L5.19 4.24L5.34 3.32L5.69 2.56L6.25 2.04L6.98 1.82L7.81 1.89L8.68 2.22L9.52 2.73L10.27 3.30L10.92 3.81L11.49 4.17L12.00 4.30L12.51 4.17L13.08 3.81L13.73 3.30L14.48 2.73L15.32 2.22L16.19 1.89L17.02 1.82L17.75 2.04L18.31 2.56L18.66 3.32L18.81 4.24L18.79 5.21L18.67 6.15L18.55 6.97L18.52 7.64L18.67 8.15L19.04 8.53L19.63 8.84L20.40 9.15L21.27 9.52L22.13 9.99L22.85 10.57L23.33 11.26L23.50 12.00Z"/><circle cx="12" cy="12" r="4.2"/></g></svg>
<div style="position:absolute;left:1571px;top:10px;width:120px;height:25px;border-radius:13px;background:#0e8b7d;box-shadow:0 1px 2px rgba(0,0,0,0.25);color:#fff;font-weight:bold;font-size:13.5px;line-height:25px;text-align:center">Физобъемы</div>
<svg style="position:absolute;left:1709.0px;top:11.0px;" width="24" height="24" viewBox="0 0 24 24"><g fill="none" stroke="#45454a" stroke-width="2" stroke-linecap="round" stroke-linejoin="round"><path d="M0.5 1H23.5M0.5 23H23.5"/><path d="M7 7V17M3.5 13.5L7 17L10.5 13.5"/><path d="M17 17V7M13.5 10.5L17 7L20.5 10.5"/></g></svg>
<svg style="position:absolute;left:1755.0px;top:11.0px;" width="24" height="24" viewBox="0 0 24 24"><g fill="none" stroke="#45454a" stroke-width="2" stroke-linecap="round" stroke-linejoin="round"><path d="M21 12a9 9 0 1 1-3-6.7"/><path d="M19 1.5V6.5H14"/></g></svg>
<svg style="position:absolute;left:1800.0px;top:11.0px;" width="24" height="24" viewBox="0 0 24 24"><g fill="none" stroke="#45454a" stroke-width="2" stroke-linecap="round" stroke-linejoin="round"><rect x="1" y="1" width="22" height="22" rx="2.5"/><path d="M8 1V23"/></g></svg>
<svg style="position:absolute;left:1844.0px;top:11.0px;" width="24" height="24" viewBox="0 0 24 24"><g fill="none" stroke="#45454a" stroke-width="2" stroke-linecap="round" stroke-linejoin="round"><rect x="1" y="1" width="22" height="22" rx="2.5"/><path d="M16 1V23"/></g></svg>
<svg style="position:absolute;left:1888.0px;top:11.0px;" width="24" height="24" viewBox="0 0 24 24"><g fill="none" stroke="#45454a" stroke-width="2" stroke-linecap="round" stroke-linejoin="round"><rect x="1" y="1" width="22" height="22" rx="2.5"/><path d="M1 16H23"/></g></svg>
<svg style="position:absolute;left:62px;top:64px;" width="10" height="6" viewBox="0 0 10 6"><path d="M0 0H10L5 6Z" fill="#45454a"/></svg>
<svg style="position:absolute;left:99.0px;top:55.0px;" width="24" height="24" viewBox="0 0 24 24"><g fill="none" stroke="#45454a" stroke-width="2" stroke-linecap="round" stroke-linejoin="round"><rect x="0.5" y="0.5" width="22" height="22" rx="2"/><path d="M11.5 10V17"/><circle cx="11.5" cy="6.5" r="0.6" fill="#45454a"/></g></svg>
<div style="position:absolute;left:581px;top:44px;width:1px;height:45px;background:#c8c8cc"></div>
<div style="position:absolute;left:670px;top:44px;width:1px;height:45px;background:#c8c8cc"></div>
<svg style="position:absolute;left:414.5px;top:55.0px;" width="24" height="24" viewBox="0 0 24 24"><g fill="none" stroke="#45454a" stroke-width="2" stroke-linecap="round" stroke-linejoin="round"><circle cx="10" cy="10" r="8"/><path d="M15.5 15.5L23 23"/></g></svg>
<svg style="position:absolute;left:458.5px;top:55.0px;" width="24" height="24" viewBox="0 0 24 24"><g fill="none" stroke="#45454a" stroke-width="2" stroke-linecap="round" stroke-linejoin="round"><path d="M1 12C4 6.5 8 4.5 12 4.5S20 6.5 23 12C20 17.5 16 19.5 12 19.5S4 17.5 1 12Z"/><circle cx="12" cy="12" r="2.5"/></g></svg>
<svg style="position:absolute;left:502.5px;top:55.0px;" width="24" height="24" viewBox="0 0 24 24"><g fill="none" stroke="#45454a" stroke-width="2" stroke-linecap="round" stroke-linejoin="round"><rect x="1" y="1" width="22" height="22" rx="2"/><path d="M1 6H23M6 23V11H23M11 23V16H23"/></g></svg>
<svg style="position:absolute;left:546.5px;top:55.0px;" width="24" height="24" viewBox="0 0 24 24"><g fill="none" stroke="#45454a" stroke-width="2" stroke-linecap="round" stroke-linejoin="round"><path d="M5 3.5H3.5a1.5 1.5 0 0 0-1.5 1.5V21.5a1.5 1.5 0 0 0 1.5 1.5H18a1.5 1.5 0 0 0 1.5-1.5V12"/><path d="M17 3.5H18a1.5 1.5 0 0 1 1.5 1.5"/><rect x="5" y="0" width="12" height="5" fill="#45454a" stroke="none" rx="1"/><path d="M6 10H13M6 14H10M6 18H9"/><path d="M21.5 11L13.5 19L12.5 22.5L16 21.5L24 13.5Z" stroke-width="1.6"/></g></svg>
<svg style="position:absolute;left:591.0px;top:55.0px;" width="24" height="24" viewBox="0 0 24 24"><g fill="none" stroke="#45454a" stroke-width="2" stroke-linecap="round" stroke-linejoin="round"><path d="M16 2.5H3a2 2 0 0 0-2 2V21a2 2 0 0 0 2 2H19.5a2 2 0 0 0 2-2V10"/><path d="M6 13L10 17L16 10"/><path d="M17 4.5L19 6.5L23 1.5" stroke-width="1.6"/></g></svg>
<svg style="position:absolute;left:635.0px;top:55.0px;" width="24" height="24" viewBox="0 0 24 24"><g fill="none" stroke="#45454a" stroke-width="2" stroke-linecap="round" stroke-linejoin="round"><path d="M16 2.5H3a2 2 0 0 0-2 2V21a2 2 0 0 0 2 2H19.5a2 2 0 0 0 2-2V10"/><path d="M6 13L10 17L16 10"/><path d="M18.5 1L23.5 6M23.5 1L18.5 6" stroke-width="1.6"/></g></svg>
<svg style="position:absolute;left:679.5px;top:55.0px;" width="24" height="24" viewBox="0 0 24 24"><g fill="none" stroke="#45454a" stroke-width="2" stroke-linecap="round" stroke-linejoin="round"><path d="M1.5 2.5H22.5L14.5 12.5V21.5L9.5 19V12.5Z"/></g></svg>
<svg style="position:absolute;left:698px;top:78px;" width="9" height="5" viewBox="0 0 9 5"><path d="M0 0H9L4.5 5Z" fill="#45454a"/></svg>
<div style="position:absolute;left:716.5px;top:52px;height:30px;line-height:30px;font-size:15px;color:#5a5a60;font-weight:normal;white-space:nowrap;">165 / 165</div>
<svg style="position:absolute;left:797.0px;top:66.0px;" width="14" height="14" viewBox="0 0 14 14"><g fill="none" stroke="#45454a" stroke-width="2" stroke-linecap="round" stroke-linejoin="round"><path d="M1 1L13 13M13 1L1 13"/></g></svg>
<svg style="position:absolute;left:810.0px;top:51.0px;" width="12" height="12" viewBox="0 0 12 12"><g fill="none" stroke="#45454a" stroke-width="2" stroke-linecap="round" stroke-linejoin="round"><path d="M1 1H11L7.5 5.5V10L4.5 9V5.5Z" stroke-width="1.5"/></g></svg>
<div style="position:absolute;left:1478px;top:44px;width:1px;height:45px;background:#c8c8cc"></div>
<div style="position:absolute;left:1523px;top:44px;width:1px;height:45px;background:#c8c8cc"></div>
<div style="position:absolute;left:1612px;top:44px;width:1px;height:45px;background:#c8c8cc"></div>
<div style="position:absolute;left:1657px;top:44px;width:1px;height:45px;background:#c8c8cc"></div>
<div style="position:absolute;left:846px;top:49px;width:199px;height:36px;background:#fff;border:1px solid #c8c8cc;border-radius:4px;box-sizing:border-box"></div>
<div style="position:absolute;left:858px;top:52px;height:30px;line-height:30px;font-size:15px;color:#222;font-weight:normal;white-space:nowrap;">Суточный план/факт</div>
<svg style="position:absolute;left:1016px;top:64px;" width="11" height="6" viewBox="0 0 11 6"><path d="M0 0H11L5.5 6Z" fill="#45454a"/></svg>
<div style="position:absolute;left:1053px;top:49px;width:200px;height:36px;background:#fff;border:1px solid #c8c8cc;border-radius:4px;box-sizing:border-box"></div>
<div style="position:absolute;left:1097px;top:52px;height:30px;line-height:30px;font-size:15px;color:#222;font-weight:normal;white-space:nowrap;">Физобъем</div>
<svg style="position:absolute;left:1223px;top:64px;" width="11" height="6" viewBox="0 0 11 6"><path d="M0 0H11L5.5 6Z" fill="#45454a"/></svg>
<svg style="position:absolute;left:1065.0px;top:55.0px;" width="24" height="24" viewBox="0 0 24 24"><g fill="none" stroke="#45454a" stroke-width="2" stroke-linecap="round" stroke-linejoin="round"><circle cx="12" cy="12" r="10.8" stroke-width="2"/><path d="M1.5 12H9M15 12H22.5" stroke-width="3" stroke-linecap="butt"/><path d="M12 14V23" stroke-width="3.4" stroke-linecap="butt"/><circle cx="12" cy="12" r="3.6" fill="#fff" stroke="none"/><circle cx="12" cy="12" r="2.9" fill="#45454a" stroke="none"/></g></svg>
<div style="position:absolute;left:1261px;top:49px;width:200px;height:36px;background:#fff;border:1px solid #c8c8cc;border-radius:4px;box-sizing:border-box"></div>
<div style="position:absolute;left:1305px;top:52px;height:30px;line-height:30px;font-size:15px;color:#222;font-weight:normal;white-space:nowrap;">Количество</div>
<svg style="position:absolute;left:1428px;top:64px;" width="11" height="6" viewBox="0 0 11 6"><path d="M0 0H11L5.5 6Z" fill="#45454a"/></svg>
<svg style="position:absolute;left:1273.0px;top:55.0px;" width="24" height="24" viewBox="0 0 24 24"><g fill="none" stroke="#45454a" stroke-width="1.4" stroke-linecap="round" stroke-linejoin="round"><rect x="7" y="1" width="9.5" height="10" rx="1"/><rect x="1" y="13" width="9.5" height="10" rx="1"/><rect x="13" y="13" width="9.5" height="10" rx="1"/></g></svg>
<div style="position:absolute;left:1278.8px;top:52.0px;width:12px;height:19.0px;line-height:19.0px;text-align:center;font-size:9.5px;color:#45454a;font-weight:bold;white-space:nowrap;">1</div>
<div style="position:absolute;left:1272.8px;top:64.0px;width:12px;height:19.0px;line-height:19.0px;text-align:center;font-size:9.5px;color:#45454a;font-weight:bold;white-space:nowrap;">2</div>
<div style="position:absolute;left:1284.8px;top:64.0px;width:12px;height:19.0px;line-height:19.0px;text-align:center;font-size:9.5px;color:#45454a;font-weight:bold;white-space:nowrap;">3</div>
<svg style="position:absolute;left:1487.0px;top:55.0px;" width="24" height="24" viewBox="0 0 24 24"><g fill="none" stroke="#45454a" stroke-width="2" stroke-linecap="round" stroke-linejoin="round"><path d="M3 3H20V6L15 10V22L9 20V10L3 6Z"/></g></svg>
<svg style="position:absolute;left:1506px;top:77px;" width="9" height="5" viewBox="0 0 9 5"><path d="M0 0H9L4.5 5Z" fill="#45454a"/></svg>
<svg style="position:absolute;left:1534.0px;top:55.0px;" width="24" height="24" viewBox="0 0 24 24"><g fill="none" stroke="#45454a" stroke-width="2" stroke-linecap="round" stroke-linejoin="round"><path d="M18.5 10.5h-3.5v-3.5l3.8-3.8a6.5 6.5 0 0 0-8.3 8.3l-7.3 7.3a2.3 2.3 0 0 0 3.3 3.3l7.3-7.3a6.5 6.5 0 0 0 8.3-8.3Z"/></g></svg>
<svg style="position:absolute;left:1551px;top:77px;" width="9" height="5" viewBox="0 0 9 5"><path d="M0 0H9L4.5 5Z" fill="#45454a"/></svg>
<svg style="position:absolute;left:1578.0px;top:55.0px;" width="24" height="24" viewBox="0 0 24 24"><g fill="none" stroke="#45454a" stroke-width="2" stroke-linecap="round" stroke-linejoin="round"><rect x="1" y="3" width="22" height="20.5" rx="3.5"/><path d="M6.8 0.5V3.5M16.9 0.5V3.5M1 8H23"/><path d="M6.5 8V23.5M10.5 8V23.5M14 8V23.5M17.5 8V23.5"/></g></svg>
<svg style="position:absolute;left:1623.0px;top:55.0px;" width="24" height="24" viewBox="0 0 24 24"><g fill="none" stroke="#45454a" stroke-width="2" stroke-linecap="round" stroke-linejoin="round"><path d="M0.5 1H23.5M0.5 23H23.5"/><path d="M7 7V17M3.5 13.5L7 17L10.5 13.5"/><path d="M17 17V7M13.5 10.5L17 7L20.5 10.5"/></g></svg>
<svg style="position:absolute;left:1668.0px;top:55.0px;" width="24" height="24" viewBox="0 0 24 24"><g fill="none" stroke="#45454a" stroke-width="2" stroke-linecap="round" stroke-linejoin="round"><rect x="1" y="3" width="22" height="20.5" rx="3.5"/><path d="M6.8 0.5V3.5M16.9 0.5V3.5M1 8H23"/><path d="M6.5 8V23"/><path d="M17.5 12V20L11.5 16Z" fill="#45454a" stroke-width="1"/></g></svg>
<svg style="position:absolute;left:1712.0px;top:55.0px;" width="24" height="24" viewBox="0 0 24 24"><g fill="none" stroke="#45454a" stroke-width="2" stroke-linecap="round" stroke-linejoin="round"><rect x="1" y="3" width="22" height="20.5" rx="3.5"/><path d="M6.8 0.5V3.5M16.9 0.5V3.5M1 8H23"/><path d="M6.5 8V23"/><path d="M11 12V20L17 16Z" fill="#45454a" stroke-width="1"/></g></svg>
<svg style="position:absolute;left:1756.0px;top:55.0px;" width="24" height="24" viewBox="0 0 24 24"><g fill="none" stroke="#45454a" stroke-width="2" stroke-linecap="round" stroke-linejoin="round"><rect x="1" y="3" width="22" height="20.5" rx="3.5"/><path d="M6.8 0.5V3.5M16.9 0.5V3.5M1 8H23"/></g></svg>
<div style="position:absolute;left:1758.0px;top:59px;width:20px;height:24px;line-height:24px;text-align:center;font-size:12px;color:#45454a;font-weight:bold;white-space:nowrap;">S</div>
<svg style="position:absolute;left:1800.0px;top:55.0px;" width="24" height="24" viewBox="0 0 24 24"><g fill="none" stroke="#45454a" stroke-width="2" stroke-linecap="round" stroke-linejoin="round"><rect x="1" y="3" width="22" height="20.5" rx="3.5"/><path d="M6.8 0.5V3.5M16.9 0.5V3.5M1 8H23"/></g></svg>
<div style="position:absolute;left:1802.0px;top:59px;width:20px;height:24px;line-height:24px;text-align:center;font-size:12px;color:#45454a;font-weight:bold;white-space:nowrap;">F</div>
<svg style="position:absolute;left:1844.0px;top:55.0px;" width="24" height="24" viewBox="0 0 24 24"><g fill="none" stroke="#45454a" stroke-width="2" stroke-linecap="round" stroke-linejoin="round"><rect x="1" y="3" width="22" height="20.5" rx="3.5"/><path d="M6.8 0.5V3.5M16.9 0.5V3.5M1 8H23"/></g></svg>
<div style="position:absolute;left:1846.0px;top:59px;width:20px;height:24px;line-height:24px;text-align:center;font-size:12px;color:#45454a;font-weight:bold;white-space:nowrap;">D</div>
<svg style="position:absolute;left:1888.0px;top:55.0px;" width="24" height="24" viewBox="0 0 24 24"><g fill="none" stroke="#45454a" stroke-width="2" stroke-linecap="round" stroke-linejoin="round"><rect x="1" y="3" width="22" height="20.5" rx="3.5"/><path d="M6.8 0.5V3.5M16.9 0.5V3.5M1 8H23"/><path d="M9.5 12.5V19.5L6 16ZM14.5 12.5V19.5L18 16Z" fill="#45454a" stroke-width="1"/></g></svg>
<svg style="position:absolute;left:10.0px;top:11.0px;" width="24" height="24" viewBox="0 0 24 24"><g fill="none" stroke="#45454a" stroke-width="2" stroke-linecap="round" stroke-linejoin="round"><path d="M3 10.5L12 2L21 10.5V20"/><path d="M3 10.5V20"/><path d="M0.5 20.5H23.5"/><path d="M9.5 20V16a2.5 2.5 0 0 1 5 0V20"/></g></svg>
<svg style="position:absolute;left:10.0px;top:55.0px;" width="24" height="24" viewBox="0 0 24 24"><g fill="none" stroke="#45454a" stroke-width="2" stroke-linecap="round" stroke-linejoin="round"><circle cx="12" cy="12" r="11"/><ellipse cx="12" cy="12" rx="4.5" ry="11"/><path d="M1 12H23M2.5 6.5H21.5M2.5 17.5H21.5"/></g></svg>
<svg style="position:absolute;left:2.0px;top:99.0px;" width="40" height="24" viewBox="0 0 40 24"><g fill="none" stroke="#fff" stroke-width="2.4" stroke-linecap="round" stroke-linejoin="round"><path d="M8.5 4H22.5M13 12H27M17.5 20H31.5"/></g></svg>
<svg style="position:absolute;left:10.0px;top:143.0px;" width="24" height="24" viewBox="0 0 24 24"><g fill="none" stroke="#45454a" stroke-width="2" stroke-linecap="round" stroke-linejoin="round"><rect x="1" y="1" width="22" height="22" rx="3"/><path d="M7 6V12M12 6V9M17 6V10"/></g></svg>
<svg style="position:absolute;left:10.0px;top:187.0px;" width="24" height="24" viewBox="0 0 24 24"><g fill="none" stroke="#45454a" stroke-width="2" stroke-linecap="round" stroke-linejoin="round"><path d="M2 7C6 1 9 9 13 6S20 2 23 4" /><rect x="1.5" y="15" width="6" height="8"/><rect x="9" y="10" width="6" height="13"/><rect x="16.5" y="15" width="6" height="8"/></g></svg>
<svg style="position:absolute;left:10.0px;top:231.0px;" width="24" height="24" viewBox="0 0 24 24"><g fill="none" stroke="#45454a" stroke-width="2" stroke-linecap="round" stroke-linejoin="round"><rect x="1" y="9" width="17" height="13" rx="3"/><path d="M6 9V6a3 3 0 0 1 3-3H20a3 3 0 0 1 3 3V13a3 3 0 0 1-3 3H18"/></g></svg>
<svg style="position:absolute;left:10.0px;top:275.0px;" width="24" height="24" viewBox="0 0 24 24"><g fill="none" stroke="#45454a" stroke-width="2" stroke-linecap="round" stroke-linejoin="round"><path d="M3 23V2C7 0 11 4 15 3S22 2 22 2V16C18 17 15 18 11 16S3 16 3 16"/></g></svg>
<svg style="position:absolute;left:10.0px;top:319.0px;" width="24" height="24" viewBox="0 0 24 24"><g fill="none" stroke="#45454a" stroke-width="2" stroke-linecap="round" stroke-linejoin="round"><path d="M1 1.5H23M1 22.5H23M3 6L8 17M9 6L14 17M15 6L20 17"/></g></svg>
<svg style="position:absolute;left:10.0px;top:363.0px;" width="24" height="24" viewBox="0 0 24 24"><g fill="none" stroke="#45454a" stroke-width="2" stroke-linecap="round" stroke-linejoin="round"><rect x="1" y="1" width="9" height="9"/><rect x="14" y="1" width="9" height="9"/><rect x="1" y="14" width="9" height="9"/><rect x="14" y="14" width="9" height="9"/></g></svg>
<svg style="position:absolute;left:10.0px;top:407.0px;" width="24" height="24" viewBox="0 0 24 24"><g fill="none" stroke="#45454a" stroke-width="2" stroke-linecap="round" stroke-linejoin="round"><ellipse cx="12" cy="5.5" rx="11" ry="4.5"/><path d="M1 5.5V18.5C1 21 6 23 12 23S23 21 23 18.5V5.5M1 12C1 14.5 6 16.5 12 16.5S23 14.5 23 12"/></g></svg>
<svg style="position:absolute;left:10.0px;top:451.0px;" width="24" height="24" viewBox="0 0 24 24"><g fill="none" stroke="#45454a" stroke-width="2" stroke-linecap="round" stroke-linejoin="round"><path d="M4 1H1V23H4M20 1H23V23H20"/><path d="M7 19L12 5L17 19M8.5 14.5H15.5"/></g></svg>
<svg style="position:absolute;left:10.0px;top:495.0px;" width="24" height="24" viewBox="0 0 24 24"><g fill="none" stroke="#45454a" stroke-width="2" stroke-linecap="round" stroke-linejoin="round"><rect x="1" y="1" width="22" height="22" rx="3"/><path d="M10 7H18M10 12H18M10 17H18"/><circle cx="6" cy="7" r="0.7" fill="#45454a"/><circle cx="6" cy="12" r="0.7" fill="#45454a"/><circle cx="6" cy="17" r="0.7" fill="#45454a"/></g></svg>
<svg style="position:absolute;left:10.0px;top:539.0px;" width="24" height="24" viewBox="0 0 24 24"><g fill="none" stroke="#45454a" stroke-width="2" stroke-linecap="round" stroke-linejoin="round"><rect x="1.5" y="3.5" width="21" height="20" rx="3"/><path d="M6.5 0.5V5M17.5 0.5V5M1.5 8.5H22.5M8 15.5L11 18.5L16.5 13"/></g></svg>
<svg style="position:absolute;left:10.0px;top:584.0px;" width="24" height="24" viewBox="0 0 24 24"><g fill="none" stroke="#45454a" stroke-width="2" stroke-linecap="round" stroke-linejoin="round"><path d="M1 12C4 6.5 8 4.5 12 4.5S20 6.5 23 12C20 17.5 16 19.5 12 19.5S4 17.5 1 12Z"/><circle cx="12" cy="12" r="3"/></g></svg>
<svg style="position:absolute;left:10.0px;top:704.0px;" width="24" height="24" viewBox="0 0 24 24"><g fill="none" stroke="#45454a" stroke-width="1.8" stroke-linecap="round" stroke-linejoin="round"><circle cx="12" cy="12" r="4"/><path d="M12 0.5V3M12 21V23.5M0.5 12H3M21 12H23.5M3.8 3.8L5.6 5.6M18.4 18.4L20.2 20.2M3.8 20.2L5.6 18.4M18.4 5.6L20.2 3.8"/></g></svg>
<svg style="position:absolute;left:10.0px;top:748.0px;" width="24" height="24" viewBox="0 0 24 24"><g fill="none" stroke="#45454a" stroke-width="2" stroke-linecap="round" stroke-linejoin="round"><path d="M3 1H21a2 2 0 0 1 2 2V15a2 2 0 0 1-2 2H8L1 23V3a2 2 0 0 1 2-2Z"/><path d="M6 6H18M6 10H18M6 14H12"/></g></svg>
<svg style="position:absolute;left:10.0px;top:792.0px;" width="24" height="24" viewBox="0 0 24 24"><g fill="none" stroke="#45454a" stroke-width="2" stroke-linecap="round" stroke-linejoin="round"><path d="M2 18H22L20 15V9a8 8 0 0 0-16 0V15Z"/><path d="M8 18a4 4 0 0 0 8 0"/></g></svg>
<svg style="position:absolute;left:10.0px;top:836.0px;" width="24" height="24" viewBox="0 0 24 24"><g fill="none" stroke="#45454a" stroke-width="2" stroke-linecap="round" stroke-linejoin="round"><path d="M0.5 4H14M7 1V4M3 9L14 23M11 8L3 19"/><path d="M12 22L17 10L22 22M14 18H20"/></g></svg>
<svg style="position:absolute;left:10.0px;top:880.0px;" width="24" height="24" viewBox="0 0 24 24"><g fill="none" stroke="#45454a" stroke-width="2" stroke-linecap="round" stroke-linejoin="round"><circle cx="12" cy="12" r="11"/><path d="M12 10.5V17.5"/><circle cx="12" cy="6.8" r="0.6" fill="#45454a"/></g></svg>
<div style="position:absolute;left:93px;top:651px;width:1px;height:42px;background:#c8c8cc"></div>
<div style="position:absolute;left:195px;top:651px;width:1px;height:42px;background:#c8c8cc"></div>
<div style="position:absolute;left:440px;top:651px;width:1px;height:42px;background:#c8c8cc"></div>
<svg style="position:absolute;left:55.0px;top:660.0px;" width="24" height="24" viewBox="0 0 24 24"><g fill="none" stroke="#45454a" stroke-width="2" stroke-linecap="round" stroke-linejoin="round"><path d="M1.5 2.5H22.5L14.5 12.5V21.5L9.5 19V12.5Z"/></g></svg>
<svg style="position:absolute;left:74px;top:682px;" width="9" height="5" viewBox="0 0 9 5"><path d="M0 0H9L4.5 5Z" fill="#45454a"/></svg>
<svg style="position:absolute;left:108.0px;top:660.0px;" width="24" height="24" viewBox="0 0 24 24"><g fill="none" stroke="#45454a" stroke-width="2" stroke-linecap="round" stroke-linejoin="round"><path d="M18.5 10.5h-3.5v-3.5l3.8-3.8a6.5 6.5 0 0 0-8.3 8.3l-7.3 7.3a2.3 2.3 0 0 0 3.3 3.3l7.3-7.3a6.5 6.5 0 0 0 8.3-8.3Z"/></g></svg>
<svg style="position:absolute;left:125px;top:682px;" width="9" height="5" viewBox="0 0 9 5"><path d="M0 0H9L4.5 5Z" fill="#45454a"/></svg>
<svg style="position:absolute;left:156.0px;top:660.0px;" width="24" height="24" viewBox="0 0 24 24"><g fill="none" stroke="#45454a" stroke-width="2" stroke-linecap="round" stroke-linejoin="round"><rect x="1" y="3" width="22" height="20.5" rx="3.5"/><path d="M6.8 0.5V3.5M16.9 0.5V3.5M1 8H23"/><path d="M6.5 8V23.5M10.5 8V23.5M14 8V23.5M17.5 8V23.5"/></g></svg>
<svg style="position:absolute;left:209.0px;top:660.0px;" width="24" height="24" viewBox="0 0 24 24"><g fill="none" stroke="#45454a" stroke-width="2" stroke-linecap="round" stroke-linejoin="round"><rect x="1" y="3" width="22" height="20.5" rx="3.5"/><path d="M6.8 0.5V3.5M16.9 0.5V3.5M1 8H23"/><path d="M6.5 8V23"/><path d="M17.5 12V20L11.5 16Z" fill="#45454a" stroke-width="1"/></g></svg>
<svg style="position:absolute;left:257.0px;top:660.0px;" width="24" height="24" viewBox="0 0 24 24"><g fill="none" stroke="#45454a" stroke-width="2" stroke-linecap="round" stroke-linejoin="round"><rect x="1" y="3" width="22" height="20.5" rx="3.5"/><path d="M6.8 0.5V3.5M16.9 0.5V3.5M1 8H23"/><path d="M6.5 8V23"/><path d="M11 12V20L17 16Z" fill="#45454a" stroke-width="1"/></g></svg>
<svg style="position:absolute;left:305.0px;top:660.0px;" width="24" height="24" viewBox="0 0 24 24"><g fill="none" stroke="#45454a" stroke-width="2" stroke-linecap="round" stroke-linejoin="round"><rect x="1" y="3" width="22" height="20.5" rx="3.5"/><path d="M6.8 0.5V3.5M16.9 0.5V3.5M1 8H23"/></g></svg>
<div style="position:absolute;left:307.0px;top:664px;width:20px;height:24px;line-height:24px;text-align:center;font-size:12px;color:#45454a;font-weight:bold;white-space:nowrap;">S</div>
<svg style="position:absolute;left:353.0px;top:660.0px;" width="24" height="24" viewBox="0 0 24 24"><g fill="none" stroke="#45454a" stroke-width="2" stroke-linecap="round" stroke-linejoin="round"><rect x="1" y="3" width="22" height="20.5" rx="3.5"/><path d="M6.8 0.5V3.5M16.9 0.5V3.5M1 8H23"/></g></svg>
<div style="position:absolute;left:355.0px;top:664px;width:20px;height:24px;line-height:24px;text-align:center;font-size:12px;color:#45454a;font-weight:bold;white-space:nowrap;">D</div>
<svg style="position:absolute;left:401.0px;top:660.0px;" width="24" height="24" viewBox="0 0 24 24"><g fill="none" stroke="#45454a" stroke-width="2" stroke-linecap="round" stroke-linejoin="round"><rect x="1" y="3" width="22" height="20.5" rx="3.5"/><path d="M6.8 0.5V3.5M16.9 0.5V3.5M1 8H23"/></g></svg>
<div style="position:absolute;left:403.0px;top:664px;width:20px;height:24px;line-height:24px;text-align:center;font-size:12px;color:#45454a;font-weight:bold;white-space:nowrap;">F</div>
<svg style="position:absolute;left:454.0px;top:660.0px;" width="24" height="24" viewBox="0 0 24 24"><g fill="none" stroke="#45454a" stroke-width="2" stroke-linecap="round" stroke-linejoin="round"><circle cx="12" cy="12" r="11"/><path d="M6 12L9 15L15 9M10 13.5L11.5 15L17.5 9" stroke-width="1.8"/></g></svg>
<svg style="position:absolute;left:502.0px;top:660.0px;" width="24" height="24" viewBox="0 0 24 24"><g fill="none" stroke="#cfcfd3" stroke-width="1.6" stroke-linecap="round" stroke-linejoin="round"><circle cx="12" cy="12" r="11"/><path d="M7.5 12L10.5 15L16.5 9"/></g></svg>
<svg style="position:absolute;left:550.0px;top:660.0px;" width="24" height="24" viewBox="0 0 24 24"><g fill="none" stroke="#cfcfd3" stroke-width="1.6" stroke-linecap="round" stroke-linejoin="round"><circle cx="12" cy="12" r="11"/><path d="M8 8L16 16M16 8L8 16"/></g></svg>
<svg style="position:absolute;left:54.5px;top:756.0px" width="18" height="18" viewBox="0 0 24 24"><g fill="none" stroke="#45454a" stroke-width="2" stroke-linecap="round" stroke-linejoin="round"><circle cx="15" cy="2.8" r="2.3" fill="#45454a" stroke="none"/><path d="M4 7.5L12.5 5.5L15.5 11L9.5 13.5Z" fill="#45454a" stroke-width="1.2"/><path d="M6 12L2.5 23M10.5 13.5L11.5 23M13 12L18 17.5" stroke-width="2"/><path d="M12.5 23.5L18.5 15.5L24 23.5Z" fill="#45454a" stroke="none"/></g></svg>
<svg style="position:absolute;left:54.5px;top:800.5px" width="18" height="18" viewBox="0 0 24 24"><g fill="none" stroke="#45454a" stroke-width="2" stroke-linecap="round" stroke-linejoin="round"><path d="M6.5 8.5a5.5 5.5 0 0 1 11 0Z" fill="#45454a" stroke="none"/><rect x="10.5" y="1" width="3" height="3" fill="#45454a" stroke="none"/><path d="M8 9.5a4 4 0 0 0 8 0" stroke-width="2"/><path d="M3 23.5a9 7.5 0 0 1 18 0" stroke-width="2"/></g></svg>
<svg style="position:absolute;left:54.5px;top:844.5px" width="18" height="18" viewBox="0 0 24 24"><g fill="none" stroke="#45454a" stroke-width="2" stroke-linecap="round" stroke-linejoin="round"><g stroke-width="1.6"><ellipse cx="12" cy="3.5" rx="5" ry="2.5"/><path d="M7 3.5V8.5a5 2.5 0 0 0 10 0V3.5M7 8.5V12a5 2.5 0 0 0 10 0V8.5"/><ellipse cx="6" cy="15" rx="5" ry="2.5"/><path d="M1 15V20.5a5 2.5 0 0 0 10 0V15"/><ellipse cx="18" cy="15" rx="5" ry="2.5"/><path d="M13 15V20.5a5 2.5 0 0 0 10 0V15"/></g></g></svg>
<div style="position:absolute;left:822px;top:185px;width:702px;height:499px;background:#fff;border-radius:4px;box-shadow:0 1px 5px rgba(0,0,0,0.3)"></div>
<div style="position:absolute;left:822px;top:185px;width:702px;height:44px;background:#efeff2;border-radius:4px 4px 0 0"></div>
<div style="position:absolute;left:839px;top:190.5px;height:35.0px;line-height:35.0px;font-size:17.5px;color:#222;font-weight:normal;white-space:nowrap;">Копирование суточного плана</div>
<svg style="position:absolute;left:1492px;top:198px;" width="20" height="20" viewBox="0 0 20 20"><path d="M2 2L18 18M18 2L2 18" stroke="#444" stroke-width="1.8"/></svg>
<div style="position:absolute;left:839px;top:239px;height:30px;line-height:30px;font-size:15px;color:#222;font-weight:normal;white-space:nowrap;">Выберите режим копирования:</div>
<svg style="position:absolute;left:839px;top:287px;" width="20" height="20" viewBox="0 0 20 20"><circle cx="10" cy="10" r="8.8" fill="#fff" stroke="#555" stroke-width="1.6"/></svg>
<div style="position:absolute;left:866px;top:282px;height:30px;line-height:30px;font-size:15px;color:#222;font-weight:normal;white-space:nowrap;">Скопировать Опер.план в Согл.план</div>
<svg style="position:absolute;left:839px;top:323px;" width="20" height="20" viewBox="0 0 20 20"><circle cx="10" cy="10" r="8.8" fill="#fff" stroke="#555" stroke-width="1.6"/><circle cx="10" cy="10" r="5" fill="#4a4a50"/></svg>
<div style="position:absolute;left:866px;top:318px;height:30px;line-height:30px;font-size:15px;color:#222;font-weight:normal;white-space:nowrap;">Скопировать Согл.план в Опер.план</div>
<div style="position:absolute;left:839px;top:344px;height:30px;line-height:30px;font-size:15px;color:#222;font-weight:normal;white-space:nowrap;">Выберите элементы для копирования:</div>
<svg style="position:absolute;left:838px;top:390px;overflow:visible" width="26" height="20" viewBox="0 0 26 20"><rect x="1" y="5" width="18" height="10" rx="5" fill="#8cb8ec"/><circle cx="17.5" cy="10" r="7.4" fill="#1e74d8"/></svg>
<div style="position:absolute;left:870px;top:385px;height:30px;line-height:30px;font-size:15px;color:#222;font-weight:normal;white-space:nowrap;">Физобъем</div>
<svg style="position:absolute;left:838px;top:415px;overflow:visible" width="26" height="20" viewBox="0 0 26 20"><rect x="3" y="5" width="22" height="10" rx="5" fill="#9a9a9e"/><circle cx="8.5" cy="10.5" r="7.4" fill="#ddd" opacity="0.6"/><circle cx="8.5" cy="10" r="7.4" fill="#fff"/></svg>
<div style="position:absolute;left:870px;top:410px;height:30px;line-height:30px;font-size:15px;color:#222;font-weight:normal;white-space:nowrap;">Трудозатраты</div>
<svg style="position:absolute;left:838px;top:440px;overflow:visible" width="26" height="20" viewBox="0 0 26 20"><rect x="1" y="5" width="18" height="10" rx="5" fill="#8cb8ec"/><circle cx="17.5" cy="10" r="7.4" fill="#1e74d8"/></svg>
<div style="position:absolute;left:870px;top:435px;height:30px;line-height:30px;font-size:15px;color:#222;font-weight:normal;white-space:nowrap;">Стоимость</div>
<div style="position:absolute;left:839px;top:477px;height:30px;line-height:30px;font-size:15px;color:#222;font-weight:normal;white-space:nowrap;">Выбранно работ: 1</div>
<svg style="position:absolute;left:1193px;top:246px;" width="20" height="20" viewBox="0 0 20 20"><circle cx="10" cy="10" r="8.8" fill="#fff" stroke="#555" stroke-width="1.6"/></svg>
<div style="position:absolute;left:1220px;top:241px;height:30px;line-height:30px;font-size:15px;color:#222;font-weight:normal;white-space:nowrap;">За весь период</div>
<svg style="position:absolute;left:1193px;top:274px;" width="20" height="20" viewBox="0 0 20 20"><circle cx="10" cy="10" r="8.8" fill="#fff" stroke="#555" stroke-width="1.6"/><circle cx="10" cy="10" r="5" fill="#4a4a50"/></svg>
<div style="position:absolute;left:1220px;top:269px;height:30px;line-height:30px;font-size:15px;color:#222;font-weight:normal;white-space:nowrap;">За выбранный период</div>
<div style="position:absolute;left:1177px;top:309px;width:330px;height:290px;background:#f2f2f4;border-radius:4px"></div>
<svg style="position:absolute;left:1199px;top:333px;" width="12" height="16" viewBox="0 0 12 16"><path d="M9 2L3 8L9 14" stroke="#222" stroke-width="2" fill="none"/></svg>
<svg style="position:absolute;left:1368px;top:333px;" width="12" height="16" viewBox="0 0 12 16"><path d="M3 2L9 8L3 14" stroke="#222" stroke-width="2" fill="none"/></svg>
<svg style="position:absolute;left:1392px;top:333px;" width="12" height="16" viewBox="0 0 12 16"><path d="M9 2L3 8L9 14" stroke="#222" stroke-width="2" fill="none"/></svg>
<svg style="position:absolute;left:1473px;top:333px;" width="12" height="16" viewBox="0 0 12 16"><path d="M3 2L9 8L3 14" stroke="#222" stroke-width="2" fill="none"/></svg>
<div style="position:absolute;left:1139.0px;top:327px;width:300px;height:28px;line-height:28px;text-align:center;font-size:14px;color:#333;font-weight:normal;white-space:nowrap;">Март</div>
<div style="position:absolute;left:1288.0px;top:327px;width:300px;height:28px;line-height:28px;text-align:center;font-size:14px;color:#333;font-weight:normal;white-space:nowrap;">2026</div>
<div style="position:absolute;left:1194.0px;top:360px;width:40px;height:26px;line-height:26px;text-align:center;font-size:13px;color:#aaa;font-weight:normal;white-space:nowrap;">Пн</div>
<div style="position:absolute;left:1237.0px;top:360px;width:40px;height:26px;line-height:26px;text-align:center;font-size:13px;color:#aaa;font-weight:normal;white-space:nowrap;">Вт</div>
<div style="position:absolute;left:1279.0px;top:360px;width:40px;height:26px;line-height:26px;text-align:center;font-size:13px;color:#aaa;font-weight:normal;white-space:nowrap;">Ср</div>
<div style="position:absolute;left:1322.0px;top:360px;width:40px;height:26px;line-height:26px;text-align:center;font-size:13px;color:#aaa;font-weight:normal;white-space:nowrap;">Чт</div>
<div style="position:absolute;left:1364.0px;top:360px;width:40px;height:26px;line-height:26px;text-align:center;font-size:13px;color:#aaa;font-weight:normal;white-space:nowrap;">Пт</div>
<div style="position:absolute;left:1407.0px;top:360px;width:40px;height:26px;line-height:26px;text-align:center;font-size:13px;color:#aaa;font-weight:normal;white-space:nowrap;">Сб</div>
<div style="position:absolute;left:1450.0px;top:360px;width:40px;height:26px;line-height:26px;text-align:center;font-size:13px;color:#aaa;font-weight:normal;white-space:nowrap;">Вс</div>
<div style="position:absolute;left:1193px;top:424px;width:299px;height:29px;background:#b0cbea"></div>
<div style="position:absolute;left:1193px;top:456px;width:299px;height:29px;background:#b0cbea"></div>
<div style="position:absolute;left:1193px;top:488px;width:64px;height:30px;background:#b0cbea"></div>
<div style="position:absolute;left:1199px;top:423px;width:30px;height:30px;border-radius:50%;background:#1e74d8"></div>
<div style="position:absolute;left:1242px;top:488px;width:30px;height:30px;border-radius:50%;background:#1e74d8"></div>
<div style="position:absolute;left:1450.0px;top:391px;width:40px;height:30px;line-height:30px;text-align:center;font-size:15px;color:#222;font-weight:normal;white-space:nowrap;">1</div>
<div style="position:absolute;left:1194.0px;top:423px;width:40px;height:30px;line-height:30px;text-align:center;font-size:15px;color:#fff;font-weight:bold;white-space:nowrap;">2</div>
<div style="position:absolute;left:1237.0px;top:423px;width:40px;height:30px;line-height:30px;text-align:center;font-size:15px;color:#fff;font-weight:normal;white-space:nowrap;">3</div>
<div style="position:absolute;left:1279.0px;top:423px;width:40px;height:30px;line-height:30px;text-align:center;font-size:15px;color:#fff;font-weight:normal;white-space:nowrap;">4</div>
<div style="position:absolute;left:1322.0px;top:423px;width:40px;height:30px;line-height:30px;text-align:center;font-size:15px;color:#fff;font-weight:normal;white-space:nowrap;">5</div>
<div style="position:absolute;left:1364.0px;top:423px;width:40px;height:30px;line-height:30px;text-align:center;font-size:15px;color:#fff;font-weight:normal;white-space:nowrap;">6</div>
<div style="position:absolute;left:1407.0px;top:423px;width:40px;height:30px;line-height:30px;text-align:center;font-size:15px;color:#fff;font-weight:normal;white-space:nowrap;">7</div>
<div style="position:absolute;left:1450.0px;top:423px;width:40px;height:30px;line-height:30px;text-align:center;font-size:15px;color:#fff;font-weight:normal;white-space:nowrap;">8</div>
<div style="position:absolute;left:1194.0px;top:455px;width:40px;height:30px;line-height:30px;text-align:center;font-size:15px;color:#fff;font-weight:normal;white-space:nowrap;">9</div>
<div style="position:absolute;left:1237.0px;top:455px;width:40px;height:30px;line-height:30px;text-align:center;font-size:15px;color:#fff;font-weight:normal;white-space:nowrap;">10</div>
<div style="position:absolute;left:1279.0px;top:455px;width:40px;height:30px;line-height:30px;text-align:center;font-size:15px;color:#fff;font-weight:normal;white-space:nowrap;">11</div>
<div style="position:absolute;left:1322.0px;top:455px;width:40px;height:30px;line-height:30px;text-align:center;font-size:15px;color:#fff;font-weight:normal;white-space:nowrap;">12</div>
<div style="position:absolute;left:1364.0px;top:455px;width:40px;height:30px;line-height:30px;text-align:center;font-size:15px;color:#fff;font-weight:normal;white-space:nowrap;">13</div>
<div style="position:absolute;left:1407.0px;top:455px;width:40px;height:30px;line-height:30px;text-align:center;font-size:15px;color:#fff;font-weight:normal;white-space:nowrap;">14</div>
<div style="position:absolute;left:1450.0px;top:455px;width:40px;height:30px;line-height:30px;text-align:center;font-size:15px;color:#fff;font-weight:normal;white-space:nowrap;">15</div>
<div style="position:absolute;left:1194.0px;top:488px;width:40px;height:30px;line-height:30px;text-align:center;font-size:15px;color:#fff;font-weight:normal;white-space:nowrap;">16</div>
<div style="position:absolute;left:1237.0px;top:488px;width:40px;height:30px;line-height:30px;text-align:center;font-size:15px;color:#fff;font-weight:bold;white-space:nowrap;">17</div>
<div style="position:absolute;left:1279.0px;top:488px;width:40px;height:30px;line-height:30px;text-align:center;font-size:15px;color:#222;font-weight:normal;white-space:nowrap;">18</div>
<div style="position:absolute;left:1322.0px;top:488px;width:40px;height:30px;line-height:30px;text-align:center;font-size:15px;color:#222;font-weight:normal;white-space:nowrap;">19</div>
<div style="position:absolute;left:1364.0px;top:488px;width:40px;height:30px;line-height:30px;text-align:center;font-size:15px;color:#222;font-weight:normal;white-space:nowrap;">20</div>
<div style="position:absolute;left:1407.0px;top:488px;width:40px;height:30px;line-height:30px;text-align:center;font-size:15px;color:#222;font-weight:normal;white-space:nowrap;">21</div>
<div style="position:absolute;left:1450.0px;top:488px;width:40px;height:30px;line-height:30px;text-align:center;font-size:15px;color:#222;font-weight:normal;white-space:nowrap;">22</div>
<div style="position:absolute;left:1194.0px;top:520px;width:40px;height:30px;line-height:30px;text-align:center;font-size:15px;color:#222;font-weight:normal;white-space:nowrap;">23</div>
<div style="position:absolute;left:1237.0px;top:520px;width:40px;height:30px;line-height:30px;text-align:center;font-size:15px;color:#222;font-weight:normal;white-space:nowrap;">24</div>
<div style="position:absolute;left:1279.0px;top:520px;width:40px;height:30px;line-height:30px;text-align:center;font-size:15px;color:#222;font-weight:normal;white-space:nowrap;">25</div>
<div style="position:absolute;left:1322.0px;top:520px;width:40px;height:30px;line-height:30px;text-align:center;font-size:15px;color:#222;font-weight:normal;white-space:nowrap;">26</div>
<div style="position:absolute;left:1364.0px;top:520px;width:40px;height:30px;line-height:30px;text-align:center;font-size:15px;color:#222;font-weight:normal;white-space:nowrap;">27</div>
<div style="position:absolute;left:1407.0px;top:520px;width:40px;height:30px;line-height:30px;text-align:center;font-size:15px;color:#222;font-weight:normal;white-space:nowrap;">28</div>
<div style="position:absolute;left:1450.0px;top:520px;width:40px;height:30px;line-height:30px;text-align:center;font-size:15px;color:#222;font-weight:normal;white-space:nowrap;">29</div>
<div style="position:absolute;left:1194.0px;top:552px;width:40px;height:30px;line-height:30px;text-align:center;font-size:15px;color:#222;font-weight:normal;white-space:nowrap;">30</div>
<div style="position:absolute;left:1237.0px;top:552px;width:40px;height:30px;line-height:30px;text-align:center;font-size:15px;color:#222;font-weight:normal;white-space:nowrap;">31</div>
<div style="position:absolute;left:839px;top:632px;width:89px;height:35px;background:#fff;border:2px solid #6fa6e6;border-radius:4px;box-sizing:border-box"></div>
<div style="position:absolute;left:733.5px;top:636px;width:300px;height:28px;line-height:28px;text-align:center;font-size:14px;color:#3a86dc;font-weight:normal;white-space:nowrap;">Закрыть</div>
<div style="position:absolute;left:1399px;top:632px;width:108px;height:35px;background:#1e74d8;border-radius:4px;box-shadow:0 1px 3px rgba(0,0,0,0.3)"></div>
<div style="position:absolute;left:1303.0px;top:636px;width:300px;height:28px;line-height:28px;text-align:center;font-size:14px;color:#fff;font-weight:bold;white-space:nowrap;">Применить</div>
<div style="position:absolute;left:1524px;top:89px;width:266px;height:144px;background:#f2f2f4;border-radius:4px;box-shadow:0 2px 5px rgba(0,0,0,0.25)"></div>
<div style="position:absolute;left:1580px;top:98px;height:30px;line-height:30px;font-size:15px;color:#333;font-weight:normal;white-space:nowrap;">Распределить по периодам</div>
<div style="position:absolute;left:1580px;top:146px;height:30px;line-height:30px;font-size:15px;color:#333;font-weight:normal;white-space:nowrap;">Копировать распределение</div>
<div style="position:absolute;left:1580px;top:194px;height:30px;line-height:30px;font-size:15px;color:#333;font-weight:normal;white-space:nowrap;">Удалить распределение</div>
<div style="position:absolute;left:1538px;top:91.5px;height:30px;line-height:30px;font-size:15px;color:#56565c;font-weight:bold;white-space:nowrap;letter-spacing:-0.5px">123</div>
<svg style="position:absolute;left:1538.5px;top:114.5px;" width="26" height="12" viewBox="0 0 26 12"><path d="M1.5 6H24.5M6 1.5L1.5 6L6 10.5M20 1.5L24.5 6L20 10.5" stroke="#56565c" stroke-width="2" fill="none"/></svg>
<svg style="position:absolute;left:1538.5px;top:210.5px;" width="26" height="12" viewBox="0 0 26 12"><path d="M1.5 6H24.5M6 1.5L1.5 6L6 10.5M20 1.5L24.5 6L20 10.5" stroke="#56565c" stroke-width="2" fill="none"/></svg>
<svg style="position:absolute;left:1545px;top:196.5px;" width="13" height="12" viewBox="0 0 13 12"><path d="M1.5 1.5L11.5 10.5M11.5 1.5L1.5 10.5" stroke="#56565c" stroke-width="2"/></svg>
<div style="position:absolute;left:1541.5px;top:143.5px;height:25.0px;line-height:25.0px;font-size:12.5px;color:#56565c;font-weight:bold;white-space:nowrap;">!</div>
<div style="position:absolute;left:1554px;top:154.5px;height:25.0px;line-height:25.0px;font-size:12.5px;color:#56565c;font-weight:bold;white-space:nowrap;">?</div>
<svg style="position:absolute;left:1551px;top:147.5px;" width="14" height="11" viewBox="0 0 14 11"><path d="M1 5.5H12M8 1.5L12 5.5L8 9.5" stroke="#56565c" stroke-width="2" fill="none"/></svg>
<svg style="position:absolute;left:1538px;top:163.5px;" width="14" height="11" viewBox="0 0 14 11"><path d="M13 5.5H2M6 1.5L2 5.5L6 9.5" stroke="#56565c" stroke-width="2" fill="none"/></svg>
<svg style="position:absolute;left:123px;top:351px;" width="65" height="14" viewBox="0 0 65 14"><path d="M11 7H65" stroke="#000" stroke-width="3"/><path d="M12 1.5L0 7L12 12.5Z" fill="#000"/></svg>
<svg style="position:absolute;left:187px;top:338px;" width="36" height="40" viewBox="0 0 36 40"><ellipse cx="18" cy="20" rx="15.3" ry="17.3" fill="#fff" stroke="#000" stroke-width="3.4"/></svg>
<div style="position:absolute;left:187.0px;top:337.5px;width:36px;height:42px;line-height:42px;text-align:center;font-size:21px;color:#000;font-weight:normal;white-space:nowrap;">1</div>
<svg style="position:absolute;left:1470px;top:59px;" width="67" height="14" viewBox="0 0 67 14"><path d="M0 7H56" stroke="#000" stroke-width="3"/><path d="M55 1.5L67 7L55 12.5Z" fill="#000"/></svg>
<svg style="position:absolute;left:1435px;top:46px;" width="36" height="40" viewBox="0 0 36 40"><ellipse cx="18" cy="20" rx="15.3" ry="17.3" fill="#fff" stroke="#000" stroke-width="3.4"/></svg>
<div style="position:absolute;left:1435.0px;top:45.5px;width:36px;height:42px;line-height:42px;text-align:center;font-size:21px;color:#000;font-weight:normal;white-space:nowrap;">2</div>
<svg style="position:absolute;left:1473px;top:155px;" width="67" height="14" viewBox="0 0 67 14"><path d="M0 7H56" stroke="#000" stroke-width="3"/><path d="M55 1.5L67 7L55 12.5Z" fill="#000"/></svg>
<svg style="position:absolute;left:1438px;top:142px;" width="36" height="40" viewBox="0 0 36 40"><ellipse cx="18" cy="20" rx="15.3" ry="17.3" fill="#fff" stroke="#000" stroke-width="3.4"/></svg>
<div style="position:absolute;left:1438.0px;top:141.5px;width:36px;height:42px;line-height:42px;text-align:center;font-size:21px;color:#000;font-weight:normal;white-space:nowrap;">3</div>
<svg style="position:absolute;left:776px;top:306px;" width="69" height="14" viewBox="0 0 69 14"><path d="M0 7H58" stroke="#000" stroke-width="3"/><path d="M57 1.5L69 7L57 12.5Z" fill="#000"/></svg>
<svg style="position:absolute;left:741px;top:293px;" width="36" height="40" viewBox="0 0 36 40"><ellipse cx="18" cy="20" rx="15.3" ry="17.3" fill="#fff" stroke="#000" stroke-width="3.4"/></svg>
<div style="position:absolute;left:741.0px;top:292.5px;width:36px;height:42px;line-height:42px;text-align:center;font-size:21px;color:#000;font-weight:normal;white-space:nowrap;">4</div>
<svg style="position:absolute;left:776px;top:391px;" width="67" height="14" viewBox="0 0 67 14"><path d="M0 7H56" stroke="#000" stroke-width="3"/><path d="M55 1.5L67 7L55 12.5Z" fill="#000"/></svg>
<svg style="position:absolute;left:741px;top:378px;" width="36" height="40" viewBox="0 0 36 40"><ellipse cx="18" cy="20" rx="15.3" ry="17.3" fill="#fff" stroke="#000" stroke-width="3.4"/></svg>
<div style="position:absolute;left:741.0px;top:377.5px;width:36px;height:42px;line-height:42px;text-align:center;font-size:21px;color:#000;font-weight:normal;white-space:nowrap;">5</div>
<svg style="position:absolute;left:1493px;top:443px;" width="62" height="14" viewBox="0 0 62 14"><path d="M11 7H62" stroke="#000" stroke-width="3"/><path d="M12 1.5L0 7L12 12.5Z" fill="#000"/></svg>
<svg style="position:absolute;left:1554px;top:430px;" width="36" height="40" viewBox="0 0 36 40"><ellipse cx="18" cy="20" rx="15.3" ry="17.3" fill="#fff" stroke="#000" stroke-width="3.4"/></svg>
<div style="position:absolute;left:1554.0px;top:429.5px;width:36px;height:42px;line-height:42px;text-align:center;font-size:21px;color:#000;font-weight:normal;white-space:nowrap;">6</div>
<svg style="position:absolute;left:1329px;top:643px;" width="68" height="14" viewBox="0 0 68 14"><path d="M0 7H57" stroke="#000" stroke-width="3"/><path d="M56 1.5L68 7L56 12.5Z" fill="#000"/></svg>
<svg style="position:absolute;left:1294px;top:630px;" width="36" height="40" viewBox="0 0 36 40"><ellipse cx="18" cy="20" rx="15.3" ry="17.3" fill="#fff" stroke="#000" stroke-width="3.4"/></svg>
<div style="position:absolute;left:1294.0px;top:629.5px;width:36px;height:42px;line-height:42px;text-align:center;font-size:21px;color:#000;font-weight:normal;white-space:nowrap;">7</div>
</body></html>
